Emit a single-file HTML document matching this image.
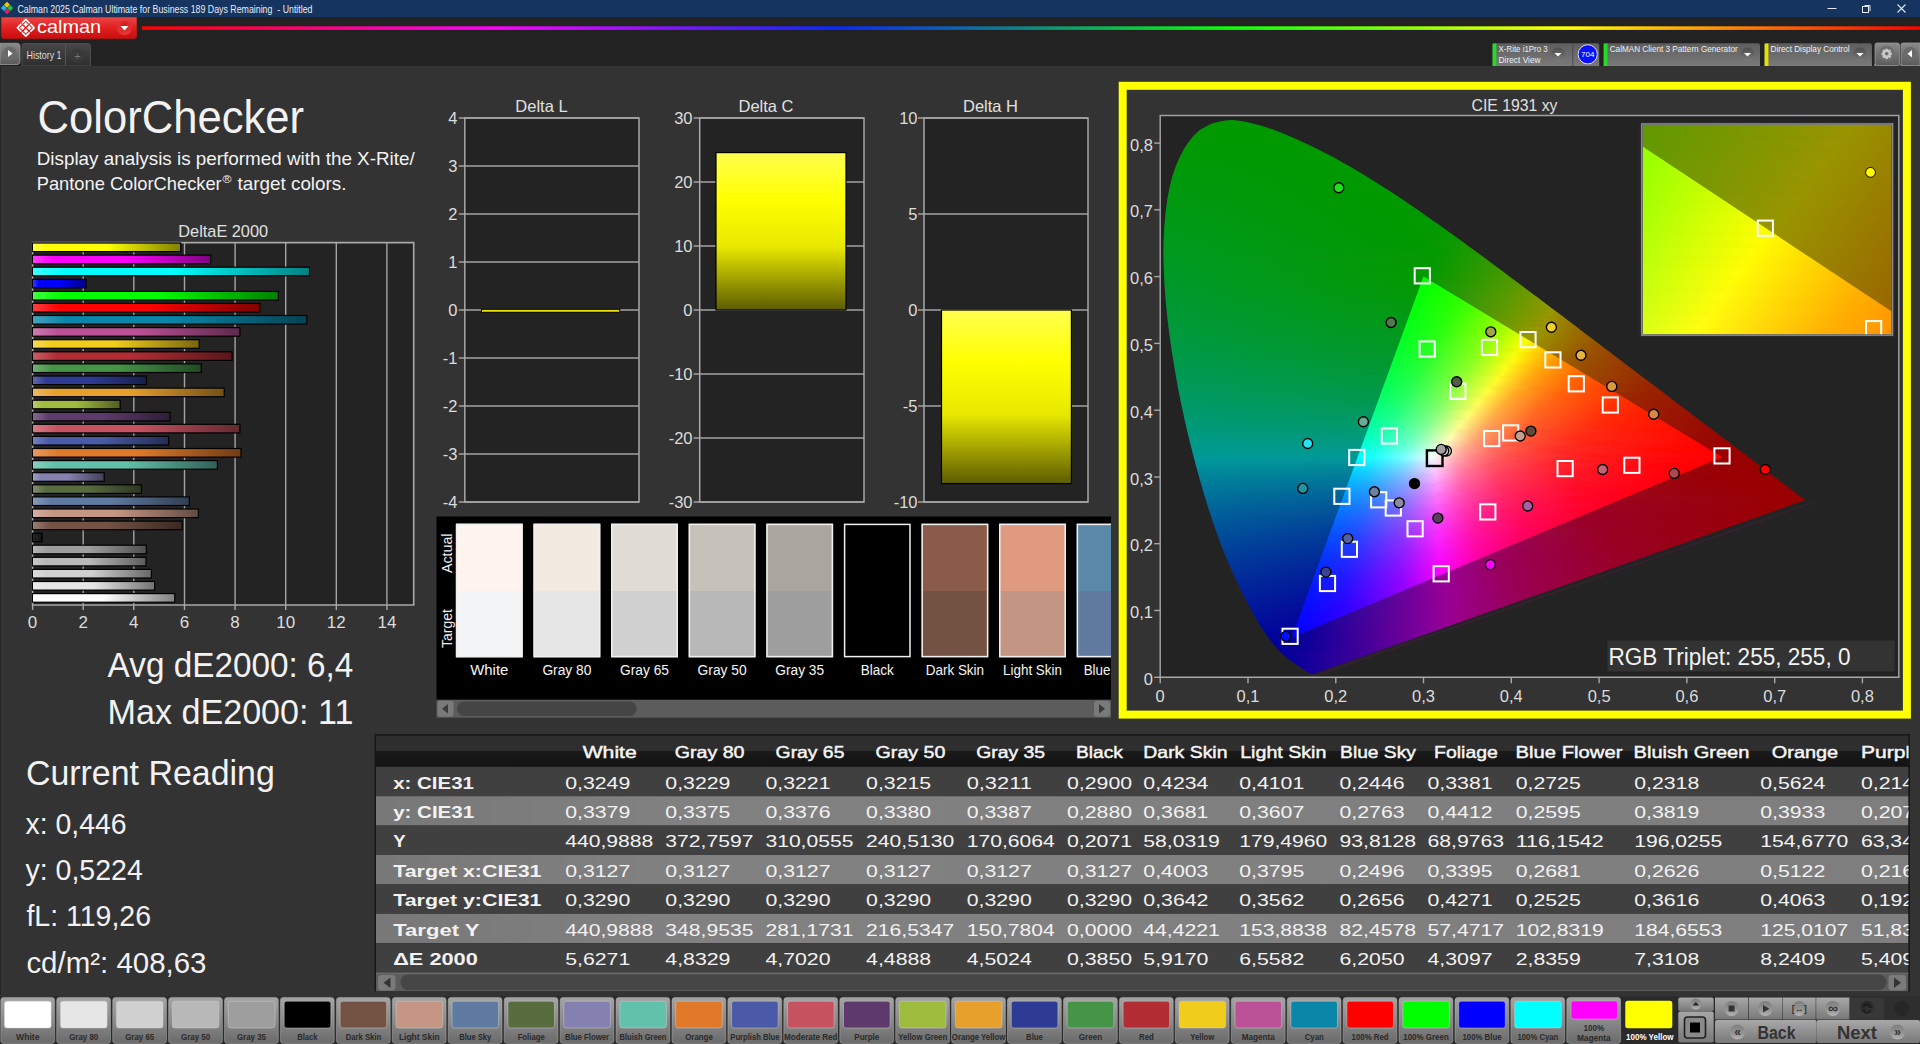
<!DOCTYPE html>
<html><head><meta charset="utf-8"><title>Calman ColorChecker</title>
<style>html,body{margin:0;padding:0;background:#333;width:1920px;height:1044px;overflow:hidden}
svg{display:block;font-family:"Liberation Sans", sans-serif}</style></head>
<body><svg width="1920" height="1044" viewBox="0 0 1920 1044">
<rect x="0.0" y="0.0" width="1920.0" height="17.0" fill="#15345f" />
<polygon points="7,1.7999999999999998 10,4.8 7,7.8 4,4.8" fill="#f5c400"/>
<polygon points="10.2,5 13.2,8 10.2,11 7.199999999999999,8" fill="#22c33a"/>
<polygon points="7,8.2 10,11.2 7,14.2 4,11.2" fill="#e0245e"/>
<polygon points="3.8,5 6.8,8 3.8,11 0.7999999999999998,8" fill="#1fb6e8"/>
<text x="17.5" y="12.6" font-size="11" fill="#e8ecf2" textLength="295.0" lengthAdjust="spacingAndGlyphs">Calman 2025 Calman Ultimate for Business 189 Days Remaining  - Untitled</text>
<line x1="1827.5" y1="8.5" x2="1836.5" y2="8.5" stroke="#dfe6ef" stroke-width="1" />
<rect x="1862.5" y="6.5" width="6.0" height="6.0" fill="none" stroke="#dfe6ef" stroke-width="1"/>
<path d="M1864.5,5.5 h5.5 v5.5" fill="none" stroke="#dfe6ef" stroke-width="1"/>
<path d="M1897.5,4.5 l8,8 M1905.5,4.5 l-8,8" stroke="#dfe6ef" stroke-width="1.1"/>
<rect x="0.0" y="17.0" width="1920.0" height="49.0" fill="#222222" />
<defs><linearGradient id="redbtn" x1="0" y1="0" x2="0" y2="1"><stop offset="0" stop-color="#e94848"/><stop offset="0.45" stop-color="#e32222"/><stop offset="1" stop-color="#c80c0c"/></linearGradient><radialGradient id="reddd" cx="0.5" cy="0.35" r="0.6"><stop offset="0" stop-color="#d01818"/><stop offset="1" stop-color="#e53a3a"/></radialGradient></defs>
<path d="M1,17 H137 V36 Q137,39 134,39 H4 Q1,39 1,36 Z" fill="url(#redbtn)" stroke="#4a2a2a" stroke-width="0.6"/>
<polyline points="22.44,22.76 25.80,19.40 29.16,22.76" fill="none" stroke="#fff" stroke-width="1.7" stroke-linejoin="round" stroke-linecap="round"/>
<polyline points="30.84,24.44 34.20,27.80 30.84,31.16" fill="none" stroke="#fff" stroke-width="1.7" stroke-linejoin="round" stroke-linecap="round"/>
<polyline points="29.16,32.84 25.80,36.20 22.44,32.84" fill="none" stroke="#fff" stroke-width="1.7" stroke-linejoin="round" stroke-linecap="round"/>
<polyline points="20.76,31.16 17.40,27.80 20.76,24.44" fill="none" stroke="#fff" stroke-width="1.7" stroke-linejoin="round" stroke-linecap="round"/>
<polygon points="25.80,22.35 27.85,24.40 25.80,26.45 23.75,24.40" fill="#fff" stroke="#fff" stroke-width="0.6" stroke-linejoin="round"/>
<polygon points="29.20,25.75 31.25,27.80 29.20,29.85 27.15,27.80" fill="#fff" stroke="#fff" stroke-width="0.6" stroke-linejoin="round"/>
<polygon points="25.80,29.15 27.85,31.20 25.80,33.25 23.75,31.20" fill="#fff" stroke="#fff" stroke-width="0.6" stroke-linejoin="round"/>
<polygon points="22.40,25.75 24.45,27.80 22.40,29.85 20.35,27.80" fill="#fff" stroke="#fff" stroke-width="0.6" stroke-linejoin="round"/>
<text x="37.0" y="32.5" font-size="18.5" fill="#ffffff" textLength="64.0" lengthAdjust="spacingAndGlyphs">calman</text>
<circle cx="124.5" cy="27.8" r="7.2" fill="url(#reddd)"/>
<polygon points="120.5,26 128.5,26 124.5,30.5" fill="#fff"/>
<defs><linearGradient id="rainbow" gradientUnits="userSpaceOnUse" x1="142" y1="0" x2="1920" y2="0"><stop offset="0" stop-color="#ff0000"/><stop offset="0.2" stop-color="#ff00ff"/><stop offset="0.39" stop-color="#0a28ff"/><stop offset="0.49" stop-color="#0f7f8a"/><stop offset="0.61" stop-color="#08ff08"/><stop offset="0.8" stop-color="#ffff00"/><stop offset="1" stop-color="#ff0000"/></linearGradient></defs>
<rect x="142.0" y="26.3" width="1778.0" height="3.6" fill="url(#rainbow)" />
<defs><linearGradient id="gbtn" x1="0" y1="0" x2="0" y2="1"><stop offset="0" stop-color="#8a8a8a"/><stop offset="1" stop-color="#5a5a5a"/></linearGradient><linearGradient id="tabg" x1="0" y1="0" x2="0" y2="1"><stop offset="0" stop-color="#474747"/><stop offset="1" stop-color="#2e2e2e"/></linearGradient><linearGradient id="ddc" x1="0" y1="0" x2="0" y2="1"><stop offset="0" stop-color="#4e4e4e"/><stop offset="1" stop-color="#7a7a7a"/></linearGradient><linearGradient id="wdg" x1="0" y1="0" x2="0" y2="1"><stop offset="0" stop-color="#5e5e5e"/><stop offset="1" stop-color="#7a7a7a"/></linearGradient></defs>
<path d="M0,43.3 H17 Q20,43.3 20,46.3 V61.5 Q20,64.5 17,64.5 H0 Z" fill="url(#gbtn)" stroke="#9a9a9a" stroke-width="0.8"/>
<circle cx="9.8" cy="53.5" r="7" fill="#6a6a6a"/>
<polygon points="8,50 12.5,53.5 8,57" fill="#fff"/>
<path d="M22,66 V46 Q22,43.5 24.5,43.5 H88 Q90.5,43.5 90.5,46 V66 Z" fill="url(#tabg)" stroke="#555" stroke-width="0.8"/>
<text x="26.5" y="59.3" font-size="10.5" fill="#dddddd" textLength="35.0" lengthAdjust="spacingAndGlyphs">History 1</text>
<line x1="65.5" y1="44.0" x2="65.5" y2="66.0" stroke="#555" stroke-width="1" />
<circle cx="77.5" cy="56" r="7" fill="#3a3a3a"/>
<text x="77.5" y="60.0" font-size="11" fill="#777" text-anchor="middle">+</text>
<path d="M1492.6,66 V45.5 Q1492.6,43.3 1494.6,43.3 H1597.2 Q1599.2,43.3 1599.2,45.5 V66 Z" fill="url(#wdg)"/>
<rect x="1492.6" y="43.5" width="3.8" height="22.5" fill="#22dd22" />
<text x="1498.6" y="52.0" font-size="9" fill="#f0f0f0" textLength="49.0" lengthAdjust="spacingAndGlyphs">X-Rite i1Pro 3</text>
<text x="1498.6" y="62.5" font-size="9" fill="#f0f0f0" textLength="42.0" lengthAdjust="spacingAndGlyphs">Direct View</text>
<circle cx="1558" cy="54.5" r="7" fill="url(#ddc)"/>
<polygon points="1554.5,53 1561.5,53 1558,56.5" fill="#fff"/>
<line x1="1572.8" y1="44.0" x2="1572.8" y2="66.0" stroke="#4a4a4a" stroke-width="1" />
<circle cx="1587.7" cy="54.3" r="9.6" fill="#0a10ff" stroke="#dde" stroke-width="1"/>
<text x="1587.7" y="57.3" font-size="8" fill="#ffffff" text-anchor="middle">704</text>
<path d="M1603.7,66 V45.5 Q1603.7,43.3 1605.7,43.3 H1758 Q1760,43.3 1760,45.5 V66 Z" fill="url(#wdg)"/>
<rect x="1603.7" y="43.5" width="3.8" height="22.5" fill="#22dd22" />
<text x="1609.7" y="52.0" font-size="9" fill="#f0f0f0" textLength="128.0" lengthAdjust="spacingAndGlyphs">CalMAN Client 3 Pattern Generator</text>
<circle cx="1747.5" cy="54.5" r="7" fill="url(#ddc)"/>
<polygon points="1744.0,53 1751.0,53 1747.5,56.5" fill="#fff"/>
<path d="M1764.6,66 V45.5 Q1764.6,43.3 1766.6,43.3 H1869.9 Q1871.9,43.3 1871.9,45.5 V66 Z" fill="url(#wdg)"/>
<rect x="1764.6" y="43.5" width="3.8" height="22.5" fill="#e8e000" />
<text x="1770.6" y="52.0" font-size="9" fill="#f0f0f0" textLength="79.0" lengthAdjust="spacingAndGlyphs">Direct Display Control</text>
<circle cx="1860" cy="54.5" r="7" fill="url(#ddc)"/>
<polygon points="1856.5,53 1863.5,53 1860,56.5" fill="#fff"/>
<path d="M1875,66 V45 Q1875,43 1877,43 H1897.5 Q1899.5,43 1899.5,45 V64.5 Q1899.5,65.5 1897.5,65.5 H1877 Q1875,65.5 1875,64 Z" fill="url(#gbtn)" stroke="#999" stroke-width="0.8"/>
<circle cx="1886.7" cy="53.8" r="8" fill="#6e6e6e"/><path d="M1891.87,52.64 L1891.87,54.96 L1890.03,55.41 L1890.19,55.02 L1891.18,56.64 L1889.54,58.28 L1887.92,57.29 L1888.31,57.13 L1887.86,58.97 L1885.54,58.97 L1885.09,57.13 L1885.48,57.29 L1883.86,58.28 L1882.22,56.64 L1883.21,55.02 L1883.37,55.41 L1881.53,54.96 L1881.53,52.64 L1883.37,52.19 L1883.21,52.58 L1882.22,50.96 L1883.86,49.32 L1885.48,50.31 L1885.09,50.47 L1885.54,48.63 L1887.86,48.63 L1888.31,50.47 L1887.92,50.31 L1889.54,49.32 L1891.18,50.96 L1890.19,52.58 L1890.03,52.19 Z" fill="#c8c8c8"/><circle cx="1886.7" cy="53.8" r="1.8" fill="#6e6e6e"/>
<path d="M1901,66 V45 Q1901,43 1903,43 H1920 V65.5 H1903 Q1901,65.5 1901,64 Z" fill="url(#gbtn)" stroke="#999" stroke-width="0.8"/>
<circle cx="1910" cy="53.8" r="7" fill="#6a6a6a"/><polygon points="1912,50 1907.5,53.8 1912,57.6" fill="#fff"/>
<rect x="0.0" y="66.0" width="1920.0" height="929.0" fill="#333333" />
<defs><linearGradient id="bg29" x1="0" y1="0" x2="1" y2="0"><stop offset="0" stop-color="#ffff40"/><stop offset="0.12" stop-color="#ffff00"/><stop offset="0.5" stop-color="#ffff00"/><stop offset="1" stop-color="#808000"/></linearGradient><linearGradient id="bg28" x1="0" y1="0" x2="1" y2="0"><stop offset="0" stop-color="#ff40ff"/><stop offset="0.12" stop-color="#ff00ff"/><stop offset="0.5" stop-color="#ff00ff"/><stop offset="1" stop-color="#800080"/></linearGradient><linearGradient id="bg27" x1="0" y1="0" x2="1" y2="0"><stop offset="0" stop-color="#40ffff"/><stop offset="0.12" stop-color="#00ffff"/><stop offset="0.5" stop-color="#00ffff"/><stop offset="1" stop-color="#008080"/></linearGradient><linearGradient id="bg26" x1="0" y1="0" x2="1" y2="0"><stop offset="0" stop-color="#4040ff"/><stop offset="0.12" stop-color="#0000ff"/><stop offset="0.5" stop-color="#0000ff"/><stop offset="1" stop-color="#000080"/></linearGradient><linearGradient id="bg25" x1="0" y1="0" x2="1" y2="0"><stop offset="0" stop-color="#40ff40"/><stop offset="0.12" stop-color="#00ff00"/><stop offset="0.5" stop-color="#00ff00"/><stop offset="1" stop-color="#008000"/></linearGradient><linearGradient id="bg24" x1="0" y1="0" x2="1" y2="0"><stop offset="0" stop-color="#ff4040"/><stop offset="0.12" stop-color="#ff0000"/><stop offset="0.5" stop-color="#ff0000"/><stop offset="1" stop-color="#800000"/></linearGradient><linearGradient id="bg23" x1="0" y1="0" x2="1" y2="0"><stop offset="0" stop-color="#47a4be"/><stop offset="0.12" stop-color="#0a86a8"/><stop offset="0.5" stop-color="#0a86a8"/><stop offset="1" stop-color="#054354"/></linearGradient><linearGradient id="bg22" x1="0" y1="0" x2="1" y2="0"><stop offset="0" stop-color="#cc7db1"/><stop offset="0.12" stop-color="#bb5297"/><stop offset="0.5" stop-color="#bb5297"/><stop offset="1" stop-color="#5e294c"/></linearGradient><linearGradient id="bg21" x1="0" y1="0" x2="1" y2="0"><stop offset="0" stop-color="#f4d955"/><stop offset="0.12" stop-color="#f0cc1c"/><stop offset="0.5" stop-color="#f0cc1c"/><stop offset="1" stop-color="#78660e"/></linearGradient><linearGradient id="bg20" x1="0" y1="0" x2="1" y2="0"><stop offset="0" stop-color="#c56267"/><stop offset="0.12" stop-color="#b22d34"/><stop offset="0.5" stop-color="#b22d34"/><stop offset="1" stop-color="#59161a"/></linearGradient><linearGradient id="bg19" x1="0" y1="0" x2="1" y2="0"><stop offset="0" stop-color="#74af75"/><stop offset="0.12" stop-color="#459447"/><stop offset="0.5" stop-color="#459447"/><stop offset="1" stop-color="#224a24"/></linearGradient><linearGradient id="bg18" x1="0" y1="0" x2="1" y2="0"><stop offset="0" stop-color="#626caf"/><stop offset="0.12" stop-color="#2e3b94"/><stop offset="0.5" stop-color="#2e3b94"/><stop offset="1" stop-color="#171e4a"/></linearGradient><linearGradient id="bg17" x1="0" y1="0" x2="1" y2="0"><stop offset="0" stop-color="#eeb861"/><stop offset="0.12" stop-color="#e8a02c"/><stop offset="0.5" stop-color="#e8a02c"/><stop offset="1" stop-color="#745016"/></linearGradient><linearGradient id="bg16" x1="0" y1="0" x2="1" y2="0"><stop offset="0" stop-color="#b7cd6e"/><stop offset="0.12" stop-color="#9fbc3e"/><stop offset="0.5" stop-color="#9fbc3e"/><stop offset="1" stop-color="#505e1f"/></linearGradient><linearGradient id="bg15" x1="0" y1="0" x2="1" y2="0"><stop offset="0" stop-color="#866b91"/><stop offset="0.12" stop-color="#5e3a6c"/><stop offset="0.5" stop-color="#5e3a6c"/><stop offset="1" stop-color="#2f1d36"/></linearGradient><linearGradient id="bg14" x1="0" y1="0" x2="1" y2="0"><stop offset="0" stop-color="#d57d88"/><stop offset="0.12" stop-color="#c75260"/><stop offset="0.5" stop-color="#c75260"/><stop offset="1" stop-color="#642930"/></linearGradient><linearGradient id="bg13" x1="0" y1="0" x2="1" y2="0"><stop offset="0" stop-color="#7783be"/><stop offset="0.12" stop-color="#4a5aa8"/><stop offset="0.5" stop-color="#4a5aa8"/><stop offset="1" stop-color="#252d54"/></linearGradient><linearGradient id="bg12" x1="0" y1="0" x2="1" y2="0"><stop offset="0" stop-color="#e89b5f"/><stop offset="0.12" stop-color="#e07a2a"/><stop offset="0.5" stop-color="#e07a2a"/><stop offset="1" stop-color="#703d15"/></linearGradient><linearGradient id="bg11" x1="0" y1="0" x2="1" y2="0"><stop offset="0" stop-color="#89d0bf"/><stop offset="0.12" stop-color="#62c1aa"/><stop offset="0.5" stop-color="#62c1aa"/><stop offset="1" stop-color="#316055"/></linearGradient><linearGradient id="bg10" x1="0" y1="0" x2="1" y2="0"><stop offset="0" stop-color="#a3a0c4"/><stop offset="0.12" stop-color="#8480b0"/><stop offset="0.5" stop-color="#8480b0"/><stop offset="1" stop-color="#424058"/></linearGradient><linearGradient id="bg9" x1="0" y1="0" x2="1" y2="0"><stop offset="0" stop-color="#829170"/><stop offset="0.12" stop-color="#596c40"/><stop offset="0.5" stop-color="#596c40"/><stop offset="1" stop-color="#2c3620"/></linearGradient><linearGradient id="bg8" x1="0" y1="0" x2="1" y2="0"><stop offset="0" stop-color="#879cb8"/><stop offset="0.12" stop-color="#5f7ba1"/><stop offset="0.5" stop-color="#5f7ba1"/><stop offset="1" stop-color="#303e50"/></linearGradient><linearGradient id="bg7" x1="0" y1="0" x2="1" y2="0"><stop offset="0" stop-color="#d4b0a3"/><stop offset="0.12" stop-color="#c59684"/><stop offset="0.5" stop-color="#c59684"/><stop offset="1" stop-color="#624b42"/></linearGradient><linearGradient id="bg6" x1="0" y1="0" x2="1" y2="0"><stop offset="0" stop-color="#977d73"/><stop offset="0.12" stop-color="#745244"/><stop offset="0.5" stop-color="#745244"/><stop offset="1" stop-color="#3a2922"/></linearGradient><linearGradient id="bg5" x1="0" y1="0" x2="1" y2="0"><stop offset="0" stop-color="#585858"/><stop offset="0.12" stop-color="#202020"/><stop offset="0.5" stop-color="#202020"/><stop offset="1" stop-color="#101010"/></linearGradient><linearGradient id="bg4" x1="0" y1="0" x2="1" y2="0"><stop offset="0" stop-color="#b6b6b6"/><stop offset="0.12" stop-color="#9e9e9e"/><stop offset="0.5" stop-color="#9e9e9e"/><stop offset="1" stop-color="#4f4f4f"/></linearGradient><linearGradient id="bg3" x1="0" y1="0" x2="1" y2="0"><stop offset="0" stop-color="#cacaca"/><stop offset="0.12" stop-color="#b8b8b8"/><stop offset="0.5" stop-color="#b8b8b8"/><stop offset="1" stop-color="#5c5c5c"/></linearGradient><linearGradient id="bg2" x1="0" y1="0" x2="1" y2="0"><stop offset="0" stop-color="#dcdcdc"/><stop offset="0.12" stop-color="#d0d0d0"/><stop offset="0.5" stop-color="#d0d0d0"/><stop offset="1" stop-color="#686868"/></linearGradient><linearGradient id="bg1" x1="0" y1="0" x2="1" y2="0"><stop offset="0" stop-color="#ececec"/><stop offset="0.12" stop-color="#e6e6e6"/><stop offset="0.5" stop-color="#e6e6e6"/><stop offset="1" stop-color="#737373"/></linearGradient><linearGradient id="bg0" x1="0" y1="0" x2="1" y2="0"><stop offset="0" stop-color="#ffffff"/><stop offset="0.12" stop-color="#ffffff"/><stop offset="0.5" stop-color="#ffffff"/><stop offset="1" stop-color="#808080"/></linearGradient></defs>
<rect x="0.0" y="66.0" width="1.0" height="929.0" fill="#262626" />
<text x="37.5" y="132.5" font-size="46" fill="#f2f2f2" textLength="266.5" lengthAdjust="spacingAndGlyphs">ColorChecker</text>
<text x="36.7" y="165.2" font-size="18.2" fill="#f2f2f2" textLength="378.0" lengthAdjust="spacingAndGlyphs">Display analysis is performed with the X-Rite/</text>
<text x="36.7" y="190.2" font-size="18.2" fill="#f2f2f2" textLength="185.0" lengthAdjust="spacingAndGlyphs">Pantone ColorChecker</text>
<text x="222.5" y="182.5" font-size="11" fill="#f2f2f2" textLength="9.0" lengthAdjust="spacingAndGlyphs">®</text>
<text x="237.5" y="190.2" font-size="18.2" fill="#f2f2f2" textLength="109.0" lengthAdjust="spacingAndGlyphs">target colors.</text>
<text x="178.3" y="237.0" font-size="17.4" fill="#e0e0e0" textLength="89.8" lengthAdjust="spacingAndGlyphs">DeltaE 2000</text>
<rect x="32.6" y="242.6" width="381.1" height="362.4" fill="#232323" />
<line x1="83.2" y1="242.6" x2="83.2" y2="605.0" stroke="#a3a3a3" stroke-width="1.4" />
<line x1="133.8" y1="242.6" x2="133.8" y2="605.0" stroke="#a3a3a3" stroke-width="1.4" />
<line x1="184.5" y1="242.6" x2="184.5" y2="605.0" stroke="#a3a3a3" stroke-width="1.4" />
<line x1="235.1" y1="242.6" x2="235.1" y2="605.0" stroke="#a3a3a3" stroke-width="1.4" />
<line x1="285.7" y1="242.6" x2="285.7" y2="605.0" stroke="#a3a3a3" stroke-width="1.4" />
<line x1="336.3" y1="242.6" x2="336.3" y2="605.0" stroke="#a3a3a3" stroke-width="1.4" />
<line x1="386.9" y1="242.6" x2="386.9" y2="605.0" stroke="#a3a3a3" stroke-width="1.4" />
<path d="M32.6,605.0 V242.6 H413.7 V605.0" fill="none" stroke="#a8a8a8" stroke-width="1.6"/>
<line x1="31.8" y1="605.0" x2="414.5" y2="605.0" stroke="#a8a8a8" stroke-width="1.6" />
<line x1="32.6" y1="605.0" x2="32.6" y2="610.0" stroke="#a8a8a8" stroke-width="1.4" />
<text x="32.6" y="628.4" font-size="17" fill="#dcdcdc" text-anchor="middle">0</text>
<line x1="83.2" y1="605.0" x2="83.2" y2="610.0" stroke="#a8a8a8" stroke-width="1.4" />
<text x="83.2" y="628.4" font-size="17" fill="#dcdcdc" text-anchor="middle">2</text>
<line x1="133.8" y1="605.0" x2="133.8" y2="610.0" stroke="#a8a8a8" stroke-width="1.4" />
<text x="133.8" y="628.4" font-size="17" fill="#dcdcdc" text-anchor="middle">4</text>
<line x1="184.5" y1="605.0" x2="184.5" y2="610.0" stroke="#a8a8a8" stroke-width="1.4" />
<text x="184.5" y="628.4" font-size="17" fill="#dcdcdc" text-anchor="middle">6</text>
<line x1="235.1" y1="605.0" x2="235.1" y2="610.0" stroke="#a8a8a8" stroke-width="1.4" />
<text x="235.1" y="628.4" font-size="17" fill="#dcdcdc" text-anchor="middle">8</text>
<line x1="285.7" y1="605.0" x2="285.7" y2="610.0" stroke="#a8a8a8" stroke-width="1.4" />
<text x="285.7" y="628.4" font-size="17" fill="#dcdcdc" text-anchor="middle">10</text>
<line x1="336.3" y1="605.0" x2="336.3" y2="610.0" stroke="#a8a8a8" stroke-width="1.4" />
<text x="336.3" y="628.4" font-size="17" fill="#dcdcdc" text-anchor="middle">12</text>
<line x1="386.9" y1="605.0" x2="386.9" y2="610.0" stroke="#a8a8a8" stroke-width="1.4" />
<text x="386.9" y="628.4" font-size="17" fill="#dcdcdc" text-anchor="middle">14</text>
<rect x="32.4" y="243.0" width="148.3" height="8.6" fill="url(#bg29)" stroke="#000" stroke-width="1.2"/>
<rect x="32.4" y="255.1" width="178.2" height="8.6" fill="url(#bg28)" stroke="#000" stroke-width="1.2"/>
<rect x="32.4" y="267.2" width="277.1" height="8.6" fill="url(#bg27)" stroke="#000" stroke-width="1.2"/>
<rect x="32.4" y="279.3" width="53.7" height="8.6" fill="url(#bg26)" stroke="#000" stroke-width="1.2"/>
<rect x="32.4" y="291.4" width="246.0" height="8.6" fill="url(#bg25)" stroke="#000" stroke-width="1.2"/>
<rect x="32.4" y="303.4" width="227.5" height="8.6" fill="url(#bg24)" stroke="#000" stroke-width="1.2"/>
<rect x="32.4" y="315.5" width="274.4" height="8.6" fill="url(#bg23)" stroke="#000" stroke-width="1.2"/>
<rect x="32.4" y="327.6" width="207.5" height="8.6" fill="url(#bg22)" stroke="#000" stroke-width="1.2"/>
<rect x="32.4" y="339.7" width="166.8" height="8.6" fill="url(#bg21)" stroke="#000" stroke-width="1.2"/>
<rect x="32.4" y="351.8" width="199.7" height="8.6" fill="url(#bg20)" stroke="#000" stroke-width="1.2"/>
<rect x="32.4" y="363.9" width="168.8" height="8.6" fill="url(#bg19)" stroke="#000" stroke-width="1.2"/>
<rect x="32.4" y="376.0" width="114.1" height="8.6" fill="url(#bg18)" stroke="#000" stroke-width="1.2"/>
<rect x="32.4" y="388.1" width="191.8" height="8.6" fill="url(#bg17)" stroke="#000" stroke-width="1.2"/>
<rect x="32.4" y="400.2" width="87.8" height="8.6" fill="url(#bg16)" stroke="#000" stroke-width="1.2"/>
<rect x="32.4" y="412.3" width="137.7" height="8.6" fill="url(#bg15)" stroke="#000" stroke-width="1.2"/>
<rect x="32.4" y="424.3" width="207.5" height="8.6" fill="url(#bg14)" stroke="#000" stroke-width="1.2"/>
<rect x="32.4" y="436.4" width="136.2" height="8.6" fill="url(#bg13)" stroke="#000" stroke-width="1.2"/>
<rect x="32.4" y="448.5" width="208.6" height="8.6" fill="url(#bg12)" stroke="#000" stroke-width="1.2"/>
<rect x="32.4" y="460.6" width="185.0" height="8.6" fill="url(#bg11)" stroke="#000" stroke-width="1.2"/>
<rect x="32.4" y="472.7" width="71.8" height="8.6" fill="url(#bg10)" stroke="#000" stroke-width="1.2"/>
<rect x="32.4" y="484.8" width="109.1" height="8.6" fill="url(#bg9)" stroke="#000" stroke-width="1.2"/>
<rect x="32.4" y="496.9" width="157.0" height="8.6" fill="url(#bg8)" stroke="#000" stroke-width="1.2"/>
<rect x="32.4" y="509.0" width="166.0" height="8.6" fill="url(#bg7)" stroke="#000" stroke-width="1.2"/>
<rect x="32.4" y="521.1" width="149.8" height="8.6" fill="url(#bg6)" stroke="#000" stroke-width="1.2"/>
<rect x="32.4" y="533.2" width="9.7" height="8.6" fill="url(#bg5)" stroke="#000" stroke-width="1.2"/>
<rect x="32.4" y="545.2" width="114.0" height="8.6" fill="url(#bg4)" stroke="#000" stroke-width="1.2"/>
<rect x="32.4" y="557.3" width="113.6" height="8.6" fill="url(#bg3)" stroke="#000" stroke-width="1.2"/>
<rect x="32.4" y="569.4" width="119.0" height="8.6" fill="url(#bg2)" stroke="#000" stroke-width="1.2"/>
<rect x="32.4" y="581.5" width="122.3" height="8.6" fill="url(#bg1)" stroke="#000" stroke-width="1.2"/>
<rect x="32.4" y="593.6" width="142.4" height="8.6" fill="url(#bg0)" stroke="#000" stroke-width="1.2"/>
<text x="107.6" y="676.8" font-size="34.5" fill="#f2f2f2" textLength="245.8" lengthAdjust="spacingAndGlyphs">Avg dE2000: 6,4</text>
<text x="107.6" y="723.5" font-size="34.5" fill="#f2f2f2" textLength="245.8" lengthAdjust="spacingAndGlyphs">Max dE2000: 11</text>
<text x="25.9" y="785.3" font-size="35" fill="#f2f2f2" textLength="248.9" lengthAdjust="spacingAndGlyphs">Current Reading</text>
<text x="25.5" y="834.2" font-size="29" fill="#f2f2f2" textLength="101.0" lengthAdjust="spacingAndGlyphs">x: 0,446</text>
<text x="25.5" y="880.0" font-size="29" fill="#f2f2f2" textLength="117.3" lengthAdjust="spacingAndGlyphs">y: 0,5224</text>
<text x="26.4" y="926.1" font-size="29" fill="#f2f2f2" textLength="124.6" lengthAdjust="spacingAndGlyphs">fL: 119,26</text>
<text x="26.4" y="972.5" font-size="29" fill="#f2f2f2" textLength="180.1" lengthAdjust="spacingAndGlyphs">cd/m²: 408,63</text>
<defs><linearGradient id="ybar" x1="0" y1="0" x2="0" y2="1"><stop offset="0" stop-color="#ffff50"/><stop offset="0.3" stop-color="#ffff00"/><stop offset="0.6" stop-color="#e8e800"/><stop offset="1" stop-color="#5c5c00"/></linearGradient></defs>
<rect x="464.8" y="118.0" width="174.2" height="384.0" fill="#232323" />
<line x1="458.8" y1="118.0" x2="639.0" y2="118.0" stroke="#a3a3a3" stroke-width="1.4" />
<text x="457.5" y="123.8" font-size="16.5" fill="#dcdcdc" text-anchor="end">4</text>
<line x1="458.8" y1="166.0" x2="639.0" y2="166.0" stroke="#a3a3a3" stroke-width="1.4" />
<text x="457.5" y="171.8" font-size="16.5" fill="#dcdcdc" text-anchor="end">3</text>
<line x1="458.8" y1="214.0" x2="639.0" y2="214.0" stroke="#a3a3a3" stroke-width="1.4" />
<text x="457.5" y="219.8" font-size="16.5" fill="#dcdcdc" text-anchor="end">2</text>
<line x1="458.8" y1="262.0" x2="639.0" y2="262.0" stroke="#a3a3a3" stroke-width="1.4" />
<text x="457.5" y="267.8" font-size="16.5" fill="#dcdcdc" text-anchor="end">1</text>
<line x1="458.8" y1="310.0" x2="639.0" y2="310.0" stroke="#a3a3a3" stroke-width="1.4" />
<text x="457.5" y="315.8" font-size="16.5" fill="#dcdcdc" text-anchor="end">0</text>
<line x1="458.8" y1="358.0" x2="639.0" y2="358.0" stroke="#a3a3a3" stroke-width="1.4" />
<text x="457.5" y="363.8" font-size="16.5" fill="#dcdcdc" text-anchor="end">-1</text>
<line x1="458.8" y1="406.0" x2="639.0" y2="406.0" stroke="#a3a3a3" stroke-width="1.4" />
<text x="457.5" y="411.8" font-size="16.5" fill="#dcdcdc" text-anchor="end">-2</text>
<line x1="458.8" y1="454.0" x2="639.0" y2="454.0" stroke="#a3a3a3" stroke-width="1.4" />
<text x="457.5" y="459.8" font-size="16.5" fill="#dcdcdc" text-anchor="end">-3</text>
<line x1="458.8" y1="502.0" x2="639.0" y2="502.0" stroke="#a3a3a3" stroke-width="1.4" />
<text x="457.5" y="507.8" font-size="16.5" fill="#dcdcdc" text-anchor="end">-4</text>
<rect x="464.8" y="118.0" width="174.2" height="384.0" fill="none" stroke="#a8a8a8" stroke-width="1.5"/>
<text x="541.5" y="111.9" font-size="16.5" fill="#e0e0e0" text-anchor="middle">Delta L</text>
<rect x="481.5" y="309.3" width="138.3" height="3.0" fill="#e8e000" stroke="#000" stroke-width="1"/>
<rect x="699.7" y="118.0" width="164.3" height="384.0" fill="#232323" />
<line x1="693.7" y1="118.0" x2="864.0" y2="118.0" stroke="#a3a3a3" stroke-width="1.4" />
<text x="692.5" y="123.8" font-size="16.5" fill="#dcdcdc" text-anchor="end">30</text>
<line x1="693.7" y1="182.0" x2="864.0" y2="182.0" stroke="#a3a3a3" stroke-width="1.4" />
<text x="692.5" y="187.8" font-size="16.5" fill="#dcdcdc" text-anchor="end">20</text>
<line x1="693.7" y1="246.0" x2="864.0" y2="246.0" stroke="#a3a3a3" stroke-width="1.4" />
<text x="692.5" y="251.8" font-size="16.5" fill="#dcdcdc" text-anchor="end">10</text>
<line x1="693.7" y1="310.0" x2="864.0" y2="310.0" stroke="#a3a3a3" stroke-width="1.4" />
<text x="692.5" y="315.8" font-size="16.5" fill="#dcdcdc" text-anchor="end">0</text>
<line x1="693.7" y1="374.0" x2="864.0" y2="374.0" stroke="#a3a3a3" stroke-width="1.4" />
<text x="692.5" y="379.8" font-size="16.5" fill="#dcdcdc" text-anchor="end">-10</text>
<line x1="693.7" y1="438.0" x2="864.0" y2="438.0" stroke="#a3a3a3" stroke-width="1.4" />
<text x="692.5" y="443.8" font-size="16.5" fill="#dcdcdc" text-anchor="end">-20</text>
<line x1="693.7" y1="502.0" x2="864.0" y2="502.0" stroke="#a3a3a3" stroke-width="1.4" />
<text x="692.5" y="507.8" font-size="16.5" fill="#dcdcdc" text-anchor="end">-30</text>
<rect x="699.7" y="118.0" width="164.3" height="384.0" fill="none" stroke="#a8a8a8" stroke-width="1.5"/>
<text x="766.0" y="111.9" font-size="16.5" fill="#e0e0e0" text-anchor="middle">Delta C</text>
<rect x="716.0" y="152.6" width="130.0" height="157.4" fill="url(#ybar)" stroke="#000" stroke-width="1.2"/>
<rect x="924.0" y="118.0" width="164.0" height="384.0" fill="#232323" />
<line x1="918.0" y1="118.0" x2="1088.0" y2="118.0" stroke="#a3a3a3" stroke-width="1.4" />
<text x="917.5" y="123.8" font-size="16.5" fill="#dcdcdc" text-anchor="end">10</text>
<line x1="918.0" y1="214.0" x2="1088.0" y2="214.0" stroke="#a3a3a3" stroke-width="1.4" />
<text x="917.5" y="219.8" font-size="16.5" fill="#dcdcdc" text-anchor="end">5</text>
<line x1="918.0" y1="310.0" x2="1088.0" y2="310.0" stroke="#a3a3a3" stroke-width="1.4" />
<text x="917.5" y="315.8" font-size="16.5" fill="#dcdcdc" text-anchor="end">0</text>
<line x1="918.0" y1="406.0" x2="1088.0" y2="406.0" stroke="#a3a3a3" stroke-width="1.4" />
<text x="917.5" y="411.8" font-size="16.5" fill="#dcdcdc" text-anchor="end">-5</text>
<line x1="918.0" y1="502.0" x2="1088.0" y2="502.0" stroke="#a3a3a3" stroke-width="1.4" />
<text x="917.5" y="507.8" font-size="16.5" fill="#dcdcdc" text-anchor="end">-10</text>
<rect x="924.0" y="118.0" width="164.0" height="384.0" fill="none" stroke="#a8a8a8" stroke-width="1.5"/>
<text x="990.5" y="111.9" font-size="16.5" fill="#e0e0e0" text-anchor="middle">Delta H</text>
<rect x="941.5" y="310.0" width="129.9" height="173.6" fill="url(#ybar)" stroke="#000" stroke-width="1.2"/>
<rect x="436.5" y="516.5" width="674.5" height="183.5" fill="#000000" />
<defs><clipPath id="swclip"><rect x="436.5" y="516.5" width="674.5" height="183.5"/></clipPath></defs>
<g clip-path="url(#swclip)">
<rect x="455.9" y="523.7" width="66.8" height="67.8" fill="#fff5ee" />
<rect x="455.9" y="591.0" width="66.8" height="66.3" fill="#f3f4f5" />
<rect x="456.6" y="524.4" width="65.4" height="132.2" fill="none" stroke="#f0f0f0" stroke-width="1.5"/>
<text x="489.3" y="674.6" font-size="15.5" fill="#f5f5f5" text-anchor="middle" textLength="38.2" lengthAdjust="spacingAndGlyphs">White</text>
<rect x="533.5" y="523.7" width="66.8" height="67.8" fill="#f3ebe1" />
<rect x="533.5" y="591.0" width="66.8" height="66.3" fill="#e6e6e6" />
<rect x="534.2" y="524.4" width="65.4" height="132.2" fill="none" stroke="#f0f0f0" stroke-width="1.5"/>
<text x="566.9" y="674.6" font-size="15.5" fill="#f5f5f5" text-anchor="middle" textLength="49.0" lengthAdjust="spacingAndGlyphs">Gray 80</text>
<rect x="611.1" y="523.7" width="66.8" height="67.8" fill="#e0dbd4" />
<rect x="611.1" y="591.0" width="66.8" height="66.3" fill="#d0d0d0" />
<rect x="611.8" y="524.4" width="65.4" height="132.2" fill="none" stroke="#f0f0f0" stroke-width="1.5"/>
<text x="644.5" y="674.6" font-size="15.5" fill="#f5f5f5" text-anchor="middle" textLength="49.0" lengthAdjust="spacingAndGlyphs">Gray 65</text>
<rect x="688.7" y="523.7" width="66.8" height="67.8" fill="#c6c1b9" />
<rect x="688.7" y="591.0" width="66.8" height="66.3" fill="#b8b8b8" />
<rect x="689.4" y="524.4" width="65.4" height="132.2" fill="none" stroke="#f0f0f0" stroke-width="1.5"/>
<text x="722.1" y="674.6" font-size="15.5" fill="#f5f5f5" text-anchor="middle" textLength="49.0" lengthAdjust="spacingAndGlyphs">Gray 50</text>
<rect x="766.3" y="523.7" width="66.8" height="67.8" fill="#aaa69d" />
<rect x="766.3" y="591.0" width="66.8" height="66.3" fill="#9e9e9e" />
<rect x="767.0" y="524.4" width="65.4" height="132.2" fill="none" stroke="#f0f0f0" stroke-width="1.5"/>
<text x="799.7" y="674.6" font-size="15.5" fill="#f5f5f5" text-anchor="middle" textLength="48.8" lengthAdjust="spacingAndGlyphs">Gray 35</text>
<rect x="843.9" y="523.7" width="66.8" height="67.8" fill="#000000" />
<rect x="843.9" y="591.0" width="66.8" height="66.3" fill="#000000" />
<rect x="844.6" y="524.4" width="65.4" height="132.2" fill="none" stroke="#f0f0f0" stroke-width="1.5"/>
<text x="877.3" y="674.6" font-size="15.5" fill="#f5f5f5" text-anchor="middle" textLength="33.1" lengthAdjust="spacingAndGlyphs">Black</text>
<rect x="921.5" y="523.7" width="66.8" height="67.8" fill="#8a5b48" />
<rect x="921.5" y="591.0" width="66.8" height="66.3" fill="#735244" />
<rect x="922.2" y="524.4" width="65.4" height="132.2" fill="none" stroke="#f0f0f0" stroke-width="1.5"/>
<text x="954.9" y="674.6" font-size="15.5" fill="#f5f5f5" text-anchor="middle" textLength="58.3" lengthAdjust="spacingAndGlyphs">Dark Skin</text>
<rect x="999.1" y="523.7" width="66.8" height="67.8" fill="#e09a80" />
<rect x="999.1" y="591.0" width="66.8" height="66.3" fill="#c29682" />
<rect x="999.8" y="524.4" width="65.4" height="132.2" fill="none" stroke="#f0f0f0" stroke-width="1.5"/>
<text x="1032.5" y="674.6" font-size="15.5" fill="#f5f5f5" text-anchor="middle" textLength="59.0" lengthAdjust="spacingAndGlyphs">Light Skin</text>
<rect x="1076.7" y="523.7" width="66.8" height="67.8" fill="#5a88a8" />
<rect x="1076.7" y="591.0" width="66.8" height="66.3" fill="#607aa0" />
<rect x="1077.4" y="524.4" width="65.4" height="132.2" fill="none" stroke="#f0f0f0" stroke-width="1.5"/>
<text x="1110.1" y="674.6" font-size="15.5" fill="#f5f5f5" text-anchor="middle" textLength="52.8" lengthAdjust="spacingAndGlyphs">Blue Sky</text>
</g>
<text transform="translate(452.3,573) rotate(-90)" font-size="14.5" fill="#f0f0f0" textLength="39.5" lengthAdjust="spacingAndGlyphs">Actual</text>
<text transform="translate(452.3,648) rotate(-90)" font-size="14.5" fill="#f0f0f0" textLength="39" lengthAdjust="spacingAndGlyphs">Target</text>
<rect x="436.5" y="699.7" width="674.5" height="18.0" fill="#5c5c5c" />
<rect x="437.5" y="700.7" width="16.0" height="16.0" fill="#7a7a7a" rx="3"/>
<polygon points="448,704 442,708.7 448,713.4" fill="#3a3a3a"/>
<rect x="457.0" y="701.5" width="179.6" height="14.5" fill="#454545" rx="7"/>
<rect x="1094.0" y="700.7" width="16.0" height="16.0" fill="#7a7a7a" rx="3"/>
<polygon points="1099,704 1105,708.7 1099,713.4" fill="#3a3a3a"/>
<rect x="1122.7" y="85.8" width="784.2" height="628.8" fill="#333333" stroke="#ffff00" stroke-width="8"/>
<text x="1514.5" y="110.8" font-size="16.7" fill="#e0e0e0" text-anchor="middle" textLength="86.0" lengthAdjust="spacingAndGlyphs">CIE 1931 xy</text>
<rect x="1160.2" y="115.5" width="738.6" height="561.8" fill="#232323" />
<defs><clipPath id="locclip"><path d="M1313.0,674.0 L1308.5,672.7 L1308.2,672.5 L1307.9,672.3 L1307.5,672.1 L1307.1,671.8 L1306.7,671.6 L1306.3,671.3 L1305.9,671.0 L1305.5,670.7 L1305.0,670.4 L1304.5,670.0 L1304.0,669.7 L1303.5,669.3 L1302.9,668.9 L1302.3,668.5 L1301.6,668.1 L1300.9,667.6 L1300.2,667.1 L1299.4,666.6 L1298.5,666.1 L1297.7,665.5 L1296.8,664.9 L1295.8,664.3 L1294.8,663.6 L1293.8,662.9 L1292.7,662.1 L1291.6,661.3 L1290.4,660.5 L1289.2,659.6 L1287.9,658.6 L1286.6,657.5 L1285.2,656.3 L1283.8,655.1 L1282.4,653.9 L1280.8,652.4 L1279.1,650.7 L1277.3,648.7 L1275.5,646.6 L1273.5,644.3 L1271.4,641.6 L1269.1,638.7 L1266.8,635.5 L1264.4,632.0 L1261.9,628.2 L1259.2,624.0 L1256.4,619.3 L1253.5,614.2 L1250.4,608.6 L1247.2,602.5 L1243.9,595.9 L1240.3,588.7 L1236.6,580.8 L1232.7,572.4 L1228.7,563.4 L1224.6,553.7 L1220.5,543.3 L1216.4,532.1 L1212.3,520.1 L1208.2,507.5 L1204.1,494.2 L1200.1,480.3 L1196.0,465.7 L1192.0,450.2 L1188.0,434.3 L1184.3,418.0 L1180.8,401.7 L1177.6,385.2 L1174.6,368.2 L1171.8,351.1 L1169.4,334.2 L1167.4,317.8 L1165.8,301.6 L1164.6,285.5 L1163.8,269.8 L1163.4,254.6 L1163.6,240.0 L1164.4,226.0 L1165.6,212.5 L1167.3,199.5 L1169.6,187.4 L1172.4,176.3 L1175.8,166.2 L1179.8,156.9 L1184.3,148.6 L1189.2,141.2 L1194.3,135.0 L1199.9,130.1 L1205.9,126.4 L1212.3,123.6 L1218.8,121.7 L1225.4,120.5 L1232.2,120.1 L1239.1,120.7 L1246.2,122.0 L1253.3,123.7 L1260.4,125.6 L1267.6,127.7 L1274.7,130.2 L1281.9,133.1 L1289.0,136.1 L1296.0,139.1 L1302.9,142.2 L1309.6,145.3 L1316.3,148.6 L1322.9,151.9 L1329.5,155.3 L1336.1,158.8 L1342.5,162.4 L1349.0,166.1 L1355.3,169.8 L1361.7,173.6 L1368.1,177.4 L1374.5,181.4 L1380.9,185.4 L1387.2,189.5 L1393.5,193.6 L1399.8,197.8 L1406.1,202.0 L1412.4,206.3 L1418.7,210.6 L1424.9,215.0 L1431.2,219.4 L1437.5,223.8 L1443.7,228.3 L1450.0,232.8 L1456.3,237.3 L1462.6,241.8 L1468.9,246.4 L1475.1,251.0 L1481.4,255.6 L1487.7,260.3 L1494.0,264.9 L1500.2,269.6 L1506.5,274.2 L1512.7,278.9 L1519.0,283.6 L1525.2,288.2 L1531.4,292.9 L1537.7,297.6 L1543.9,302.2 L1550.0,306.9 L1556.2,311.5 L1562.3,316.1 L1568.4,320.8 L1574.5,325.3 L1580.5,329.9 L1586.5,334.5 L1592.4,339.0 L1598.4,343.5 L1604.2,347.9 L1610.1,352.3 L1615.8,356.7 L1621.6,361.1 L1627.3,365.4 L1632.9,369.7 L1638.4,373.9 L1643.9,378.0 L1649.3,382.1 L1654.7,386.1 L1660.0,390.1 L1665.1,394.0 L1670.2,397.9 L1675.2,401.7 L1680.0,405.4 L1684.8,409.0 L1689.4,412.5 L1693.9,415.9 L1698.2,419.2 L1702.5,422.4 L1706.6,425.5 L1710.6,428.5 L1714.5,431.5 L1718.4,434.4 L1722.1,437.3 L1725.7,440.0 L1729.2,442.6 L1732.5,445.2 L1735.7,447.6 L1738.8,449.9 L1741.8,452.1 L1744.6,454.3 L1747.4,456.3 L1750.0,458.3 L1752.5,460.2 L1754.9,462.1 L1757.2,463.8 L1759.4,465.5 L1761.5,467.1 L1763.5,468.6 L1765.4,470.0 L1767.2,471.4 L1769.0,472.7 L1770.6,474.0 L1772.2,475.2 L1773.7,476.3 L1775.2,477.4 L1776.6,478.5 L1777.9,479.5 L1779.2,480.5 L1780.4,481.4 L1781.6,482.3 L1782.7,483.2 L1783.9,484.0 L1784.9,484.8 L1786.0,485.6 L1786.9,486.4 L1787.9,487.1 L1788.8,487.8 L1789.7,488.5 L1790.5,489.1 L1791.3,489.7 L1792.1,490.3 L1792.8,490.8 L1793.6,491.4 L1794.2,491.8 L1794.8,492.3 L1795.4,492.7 L1795.9,493.1 L1796.4,493.5 L1796.9,493.9 L1797.5,494.3 L1798.1,494.8 L1798.8,495.4 L1799.6,495.9 L1800.3,496.5 L1801.0,497.0 L1801.7,497.5 L1802.3,498.0 L1802.9,498.5 L1803.5,498.9 L1804.0,499.3 L1804.3,499.5 L1804.6,499.8 L1804.8,499.9 L1805.0,500.0 L1805.1,500.1 Z"/></clipPath><clipPath id="triclip"><path d="M1722.0,456.9 L1423.5,276.6 L1291.9,637.2 Z"/></clipPath><linearGradient id="l0" gradientUnits="userSpaceOnUse" x1="1214.8" y1="0" x2="1249.3" y2="0"><stop offset="0.000" stop-color="#009900"/><stop offset="1.000" stop-color="#009900"/></linearGradient><linearGradient id="l1" gradientUnits="userSpaceOnUse" x1="1208.4" y1="0" x2="1257.5" y2="0"><stop offset="0.000" stop-color="#009900"/><stop offset="1.000" stop-color="#009900"/></linearGradient><linearGradient id="l2" gradientUnits="userSpaceOnUse" x1="1203.8" y1="0" x2="1264.9" y2="0"><stop offset="0.000" stop-color="#009900"/><stop offset="1.000" stop-color="#009900"/></linearGradient><linearGradient id="l3" gradientUnits="userSpaceOnUse" x1="1200.3" y1="0" x2="1271.4" y2="0"><stop offset="0.000" stop-color="#009900"/><stop offset="1.000" stop-color="#009900"/></linearGradient><linearGradient id="l4" gradientUnits="userSpaceOnUse" x1="1197.1" y1="0" x2="1277.0" y2="0"><stop offset="0.000" stop-color="#009900"/><stop offset="1.000" stop-color="#009900"/></linearGradient><linearGradient id="l5" gradientUnits="userSpaceOnUse" x1="1194.8" y1="0" x2="1282.1" y2="0"><stop offset="0.000" stop-color="#009900"/><stop offset="1.000" stop-color="#009900"/></linearGradient><linearGradient id="l6" gradientUnits="userSpaceOnUse" x1="1192.5" y1="0" x2="1287.0" y2="0"><stop offset="0.000" stop-color="#009900"/><stop offset="1.000" stop-color="#009900"/></linearGradient><linearGradient id="l7" gradientUnits="userSpaceOnUse" x1="1190.5" y1="0" x2="1291.8" y2="0"><stop offset="0.000" stop-color="#009900"/><stop offset="1.000" stop-color="#009900"/></linearGradient><linearGradient id="l8" gradientUnits="userSpaceOnUse" x1="1188.9" y1="0" x2="1296.4" y2="0"><stop offset="0.000" stop-color="#009900"/><stop offset="1.000" stop-color="#009900"/></linearGradient><linearGradient id="l9" gradientUnits="userSpaceOnUse" x1="1187.2" y1="0" x2="1301.0" y2="0"><stop offset="0.000" stop-color="#009901"/><stop offset="1.000" stop-color="#009900"/></linearGradient><linearGradient id="l10" gradientUnits="userSpaceOnUse" x1="1185.7" y1="0" x2="1305.5" y2="0"><stop offset="0.000" stop-color="#009902"/><stop offset="1.000" stop-color="#009900"/></linearGradient><linearGradient id="l11" gradientUnits="userSpaceOnUse" x1="1184.3" y1="0" x2="1309.8" y2="0"><stop offset="0.000" stop-color="#009902"/><stop offset="1.000" stop-color="#009900"/></linearGradient><linearGradient id="l12" gradientUnits="userSpaceOnUse" x1="1183.0" y1="0" x2="1314.0" y2="0"><stop offset="0.000" stop-color="#009903"/><stop offset="1.000" stop-color="#009900"/></linearGradient><linearGradient id="l13" gradientUnits="userSpaceOnUse" x1="1181.6" y1="0" x2="1318.1" y2="0"><stop offset="0.000" stop-color="#009903"/><stop offset="1.000" stop-color="#009900"/></linearGradient><linearGradient id="l14" gradientUnits="userSpaceOnUse" x1="1180.5" y1="0" x2="1322.1" y2="0"><stop offset="0.000" stop-color="#009904"/><stop offset="1.000" stop-color="#009900"/></linearGradient><linearGradient id="l15" gradientUnits="userSpaceOnUse" x1="1179.4" y1="0" x2="1326.1" y2="0"><stop offset="0.000" stop-color="#009904"/><stop offset="1.000" stop-color="#009900"/></linearGradient><linearGradient id="l16" gradientUnits="userSpaceOnUse" x1="1178.4" y1="0" x2="1329.9" y2="0"><stop offset="0.000" stop-color="#009905"/><stop offset="1.000" stop-color="#009900"/></linearGradient><linearGradient id="l17" gradientUnits="userSpaceOnUse" x1="1177.3" y1="0" x2="1333.7" y2="0"><stop offset="0.000" stop-color="#009905"/><stop offset="1.000" stop-color="#009900"/></linearGradient><linearGradient id="l18" gradientUnits="userSpaceOnUse" x1="1176.3" y1="0" x2="1337.5" y2="0"><stop offset="0.000" stop-color="#009906"/><stop offset="1.000" stop-color="#009900"/></linearGradient><linearGradient id="l19" gradientUnits="userSpaceOnUse" x1="1175.5" y1="0" x2="1341.2" y2="0"><stop offset="0.000" stop-color="#009906"/><stop offset="1.000" stop-color="#009900"/></linearGradient><linearGradient id="l20" gradientUnits="userSpaceOnUse" x1="1174.6" y1="0" x2="1344.8" y2="0"><stop offset="0.000" stop-color="#009907"/><stop offset="1.000" stop-color="#009900"/></linearGradient><linearGradient id="l21" gradientUnits="userSpaceOnUse" x1="1173.7" y1="0" x2="1348.3" y2="0"><stop offset="0.000" stop-color="#009907"/><stop offset="1.000" stop-color="#009900"/></linearGradient><linearGradient id="l22" gradientUnits="userSpaceOnUse" x1="1172.9" y1="0" x2="1351.8" y2="0"><stop offset="0.000" stop-color="#009908"/><stop offset="1.000" stop-color="#009900"/></linearGradient><linearGradient id="l23" gradientUnits="userSpaceOnUse" x1="1172.2" y1="0" x2="1355.3" y2="0"><stop offset="0.000" stop-color="#009909"/><stop offset="1.000" stop-color="#009900"/></linearGradient><linearGradient id="l24" gradientUnits="userSpaceOnUse" x1="1171.5" y1="0" x2="1358.7" y2="0"><stop offset="0.000" stop-color="#009909"/><stop offset="1.000" stop-color="#009900"/></linearGradient><linearGradient id="l25" gradientUnits="userSpaceOnUse" x1="1170.9" y1="0" x2="1362.1" y2="0"><stop offset="0.000" stop-color="#00990a"/><stop offset="1.000" stop-color="#009900"/></linearGradient><linearGradient id="l26" gradientUnits="userSpaceOnUse" x1="1170.2" y1="0" x2="1365.4" y2="0"><stop offset="0.000" stop-color="#00990a"/><stop offset="1.000" stop-color="#009900"/></linearGradient><linearGradient id="l27" gradientUnits="userSpaceOnUse" x1="1169.5" y1="0" x2="1368.7" y2="0"><stop offset="0.000" stop-color="#00990b"/><stop offset="1.000" stop-color="#009900"/></linearGradient><linearGradient id="l28" gradientUnits="userSpaceOnUse" x1="1169.0" y1="0" x2="1372.0" y2="0"><stop offset="0.000" stop-color="#00990b"/><stop offset="1.000" stop-color="#009900"/></linearGradient><linearGradient id="l29" gradientUnits="userSpaceOnUse" x1="1168.5" y1="0" x2="1375.2" y2="0"><stop offset="0.000" stop-color="#00990c"/><stop offset="1.000" stop-color="#009900"/></linearGradient><linearGradient id="l30" gradientUnits="userSpaceOnUse" x1="1168.0" y1="0" x2="1378.5" y2="0"><stop offset="0.000" stop-color="#00990c"/><stop offset="1.000" stop-color="#009900"/></linearGradient><linearGradient id="l31" gradientUnits="userSpaceOnUse" x1="1167.5" y1="0" x2="1381.6" y2="0"><stop offset="0.000" stop-color="#00990d"/><stop offset="0.963" stop-color="#009900"/><stop offset="1.000" stop-color="#009900"/></linearGradient><linearGradient id="l32" gradientUnits="userSpaceOnUse" x1="1167.0" y1="0" x2="1384.8" y2="0"><stop offset="0.000" stop-color="#00990d"/><stop offset="0.964" stop-color="#009900"/><stop offset="1.000" stop-color="#009900"/></linearGradient><linearGradient id="l33" gradientUnits="userSpaceOnUse" x1="1166.5" y1="0" x2="1387.9" y2="0"><stop offset="0.000" stop-color="#00990e"/><stop offset="0.929" stop-color="#009900"/><stop offset="1.000" stop-color="#009900"/></linearGradient><linearGradient id="l34" gradientUnits="userSpaceOnUse" x1="1166.1" y1="0" x2="1391.0" y2="0"><stop offset="0.000" stop-color="#00990e"/><stop offset="0.931" stop-color="#009900"/><stop offset="1.000" stop-color="#009900"/></linearGradient><linearGradient id="l35" gradientUnits="userSpaceOnUse" x1="1165.7" y1="0" x2="1394.0" y2="0"><stop offset="0.000" stop-color="#00990f"/><stop offset="0.897" stop-color="#009900"/><stop offset="1.000" stop-color="#009900"/></linearGradient><linearGradient id="l36" gradientUnits="userSpaceOnUse" x1="1165.4" y1="0" x2="1397.1" y2="0"><stop offset="0.000" stop-color="#00990f"/><stop offset="0.862" stop-color="#009900"/><stop offset="1.000" stop-color="#009900"/></linearGradient><linearGradient id="l37" gradientUnits="userSpaceOnUse" x1="1165.0" y1="0" x2="1400.1" y2="0"><stop offset="0.000" stop-color="#009910"/><stop offset="0.867" stop-color="#009900"/><stop offset="1.000" stop-color="#009900"/></linearGradient><linearGradient id="l38" gradientUnits="userSpaceOnUse" x1="1164.6" y1="0" x2="1403.1" y2="0"><stop offset="0.000" stop-color="#009910"/><stop offset="0.867" stop-color="#009900"/><stop offset="1.000" stop-color="#009900"/></linearGradient><linearGradient id="l39" gradientUnits="userSpaceOnUse" x1="1164.3" y1="0" x2="1406.1" y2="0"><stop offset="0.000" stop-color="#009911"/><stop offset="0.871" stop-color="#009900"/><stop offset="1.000" stop-color="#009900"/></linearGradient><linearGradient id="l40" gradientUnits="userSpaceOnUse" x1="1164.0" y1="0" x2="1409.1" y2="0"><stop offset="0.000" stop-color="#009911"/><stop offset="0.839" stop-color="#009900"/><stop offset="1.000" stop-color="#009900"/></linearGradient><linearGradient id="l41" gradientUnits="userSpaceOnUse" x1="1163.7" y1="0" x2="1412.0" y2="0"><stop offset="0.000" stop-color="#009912"/><stop offset="0.844" stop-color="#009900"/><stop offset="1.000" stop-color="#009900"/></linearGradient><linearGradient id="l42" gradientUnits="userSpaceOnUse" x1="1163.5" y1="0" x2="1415.0" y2="0"><stop offset="0.000" stop-color="#009913"/><stop offset="0.844" stop-color="#009900"/><stop offset="1.000" stop-color="#009900"/></linearGradient><linearGradient id="l43" gradientUnits="userSpaceOnUse" x1="1163.2" y1="0" x2="1417.9" y2="0"><stop offset="0.000" stop-color="#009913"/><stop offset="0.844" stop-color="#009900"/><stop offset="1.000" stop-color="#009900"/></linearGradient><linearGradient id="l44" gradientUnits="userSpaceOnUse" x1="1162.9" y1="0" x2="1420.8" y2="0"><stop offset="0.000" stop-color="#009914"/><stop offset="0.848" stop-color="#009900"/><stop offset="1.000" stop-color="#009900"/></linearGradient><linearGradient id="l45" gradientUnits="userSpaceOnUse" x1="1162.7" y1="0" x2="1423.6" y2="0"><stop offset="0.000" stop-color="#009914"/><stop offset="0.848" stop-color="#009900"/><stop offset="1.000" stop-color="#009900"/></linearGradient><linearGradient id="l46" gradientUnits="userSpaceOnUse" x1="1162.5" y1="0" x2="1426.5" y2="0"><stop offset="0.000" stop-color="#009915"/><stop offset="0.853" stop-color="#009900"/><stop offset="1.000" stop-color="#009900"/></linearGradient><linearGradient id="l47" gradientUnits="userSpaceOnUse" x1="1162.3" y1="0" x2="1429.4" y2="0"><stop offset="0.000" stop-color="#009915"/><stop offset="0.853" stop-color="#009900"/><stop offset="1.000" stop-color="#009900"/></linearGradient><linearGradient id="l48" gradientUnits="userSpaceOnUse" x1="1162.1" y1="0" x2="1432.3" y2="0"><stop offset="0.000" stop-color="#009916"/><stop offset="0.853" stop-color="#009900"/><stop offset="1.000" stop-color="#009900"/></linearGradient><linearGradient id="l49" gradientUnits="userSpaceOnUse" x1="1161.9" y1="0" x2="1435.1" y2="0"><stop offset="0.000" stop-color="#009916"/><stop offset="0.857" stop-color="#009900"/><stop offset="1.000" stop-color="#009900"/></linearGradient><linearGradient id="l50" gradientUnits="userSpaceOnUse" x1="1161.7" y1="0" x2="1437.9" y2="0"><stop offset="0.000" stop-color="#009917"/><stop offset="0.857" stop-color="#009900"/><stop offset="1.000" stop-color="#009900"/></linearGradient><linearGradient id="l51" gradientUnits="userSpaceOnUse" x1="1161.5" y1="0" x2="1440.8" y2="0"><stop offset="0.000" stop-color="#009917"/><stop offset="0.857" stop-color="#009900"/><stop offset="1.000" stop-color="#009900"/></linearGradient><linearGradient id="l52" gradientUnits="userSpaceOnUse" x1="1161.4" y1="0" x2="1443.6" y2="0"><stop offset="0.000" stop-color="#009918"/><stop offset="0.861" stop-color="#009900"/><stop offset="1.000" stop-color="#019900"/></linearGradient><linearGradient id="l53" gradientUnits="userSpaceOnUse" x1="1161.3" y1="0" x2="1446.4" y2="0"><stop offset="0.000" stop-color="#009919"/><stop offset="0.861" stop-color="#009900"/><stop offset="1.000" stop-color="#039900"/></linearGradient><linearGradient id="l54" gradientUnits="userSpaceOnUse" x1="1161.2" y1="0" x2="1449.2" y2="0"><stop offset="0.000" stop-color="#009919"/><stop offset="0.833" stop-color="#009900"/><stop offset="1.000" stop-color="#069900"/></linearGradient><linearGradient id="l55" gradientUnits="userSpaceOnUse" x1="1161.0" y1="0" x2="1451.9" y2="0"><stop offset="0.000" stop-color="#00991a"/><stop offset="0.838" stop-color="#009900"/><stop offset="1.000" stop-color="#089900"/></linearGradient><linearGradient id="l56" gradientUnits="userSpaceOnUse" x1="1160.9" y1="0" x2="1454.7" y2="0"><stop offset="0.000" stop-color="#00991a"/><stop offset="0.838" stop-color="#009900"/><stop offset="0.973" stop-color="#059900"/><stop offset="1.000" stop-color="#0b9900"/></linearGradient><linearGradient id="l57" gradientUnits="userSpaceOnUse" x1="1160.8" y1="0" x2="1457.5" y2="0"><stop offset="0.000" stop-color="#00991b"/><stop offset="0.842" stop-color="#009900"/><stop offset="0.974" stop-color="#089900"/><stop offset="1.000" stop-color="#0d9900"/></linearGradient><linearGradient id="l58" gradientUnits="userSpaceOnUse" x1="1160.7" y1="0" x2="1460.3" y2="0"><stop offset="0.000" stop-color="#00991c"/><stop offset="0.842" stop-color="#009900"/><stop offset="0.974" stop-color="#0a9900"/><stop offset="1.000" stop-color="#109900"/></linearGradient><linearGradient id="l59" gradientUnits="userSpaceOnUse" x1="1160.6" y1="0" x2="1463.0" y2="0"><stop offset="0.000" stop-color="#00991c"/><stop offset="0.842" stop-color="#009900"/><stop offset="0.974" stop-color="#0d9900"/><stop offset="1.000" stop-color="#139900"/></linearGradient><linearGradient id="l60" gradientUnits="userSpaceOnUse" x1="1160.6" y1="0" x2="1465.8" y2="0"><stop offset="0.000" stop-color="#00991d"/><stop offset="0.846" stop-color="#009900"/><stop offset="0.974" stop-color="#109900"/><stop offset="1.000" stop-color="#159900"/></linearGradient><linearGradient id="l61" gradientUnits="userSpaceOnUse" x1="1160.6" y1="0" x2="1468.5" y2="0"><stop offset="0.000" stop-color="#00991d"/><stop offset="0.846" stop-color="#009900"/><stop offset="0.949" stop-color="#0c9900"/><stop offset="1.000" stop-color="#189900"/></linearGradient><linearGradient id="l62" gradientUnits="userSpaceOnUse" x1="1160.5" y1="0" x2="1471.3" y2="0"><stop offset="0.000" stop-color="#00991e"/><stop offset="0.846" stop-color="#009900"/><stop offset="1.000" stop-color="#1b9900"/></linearGradient><linearGradient id="l63" gradientUnits="userSpaceOnUse" x1="1160.5" y1="0" x2="1474.0" y2="0"><stop offset="0.000" stop-color="#00991f"/><stop offset="0.850" stop-color="#009900"/><stop offset="1.000" stop-color="#1e9900"/></linearGradient><linearGradient id="l64" gradientUnits="userSpaceOnUse" x1="1160.5" y1="0" x2="1476.8" y2="0"><stop offset="0.000" stop-color="#00991f"/><stop offset="0.850" stop-color="#009900"/><stop offset="1.000" stop-color="#219900"/></linearGradient><linearGradient id="l65" gradientUnits="userSpaceOnUse" x1="1160.5" y1="0" x2="1479.5" y2="0"><stop offset="0.000" stop-color="#009920"/><stop offset="0.875" stop-color="#059900"/><stop offset="1.000" stop-color="#249900"/></linearGradient><linearGradient id="l66" gradientUnits="userSpaceOnUse" x1="1160.4" y1="0" x2="1482.2" y2="0"><stop offset="0.000" stop-color="#009920"/><stop offset="0.854" stop-color="#029900"/><stop offset="1.000" stop-color="#279900"/></linearGradient><linearGradient id="l67" gradientUnits="userSpaceOnUse" x1="1160.4" y1="0" x2="1484.9" y2="0"><stop offset="0.000" stop-color="#009921"/><stop offset="0.854" stop-color="#049900"/><stop offset="1.000" stop-color="#2a9900"/></linearGradient><linearGradient id="l68" gradientUnits="userSpaceOnUse" x1="1160.5" y1="0" x2="1487.6" y2="0"><stop offset="0.000" stop-color="#009922"/><stop offset="0.854" stop-color="#079900"/><stop offset="1.000" stop-color="#2d9900"/></linearGradient><linearGradient id="l69" gradientUnits="userSpaceOnUse" x1="1160.5" y1="0" x2="1490.4" y2="0"><stop offset="0.000" stop-color="#009922"/><stop offset="0.833" stop-color="#049900"/><stop offset="1.000" stop-color="#319900"/></linearGradient><linearGradient id="l70" gradientUnits="userSpaceOnUse" x1="1160.5" y1="0" x2="1493.1" y2="0"><stop offset="0.000" stop-color="#009923"/><stop offset="0.833" stop-color="#069900"/><stop offset="1.000" stop-color="#349900"/></linearGradient><linearGradient id="l71" gradientUnits="userSpaceOnUse" x1="1160.6" y1="0" x2="1495.8" y2="0"><stop offset="0.000" stop-color="#009924"/><stop offset="0.810" stop-color="#039900"/><stop offset="1.000" stop-color="#379900"/></linearGradient><linearGradient id="l72" gradientUnits="userSpaceOnUse" x1="1160.6" y1="0" x2="1498.5" y2="0"><stop offset="0.000" stop-color="#009924"/><stop offset="0.814" stop-color="#069900"/><stop offset="1.000" stop-color="#3b9900"/></linearGradient><linearGradient id="l73" gradientUnits="userSpaceOnUse" x1="1160.7" y1="0" x2="1501.1" y2="0"><stop offset="0.000" stop-color="#009925"/><stop offset="0.791" stop-color="#029900"/><stop offset="1.000" stop-color="#3e9900"/></linearGradient><linearGradient id="l74" gradientUnits="userSpaceOnUse" x1="1160.7" y1="0" x2="1503.8" y2="0"><stop offset="0.000" stop-color="#009926"/><stop offset="0.791" stop-color="#049900"/><stop offset="1.000" stop-color="#429900"/></linearGradient><linearGradient id="l75" gradientUnits="userSpaceOnUse" x1="1160.8" y1="0" x2="1506.5" y2="0"><stop offset="0.000" stop-color="#009926"/><stop offset="0.773" stop-color="#029900"/><stop offset="1.000" stop-color="#459900"/></linearGradient><linearGradient id="l76" gradientUnits="userSpaceOnUse" x1="1160.9" y1="0" x2="1509.2" y2="0"><stop offset="0.000" stop-color="#009927"/><stop offset="0.773" stop-color="#049900"/><stop offset="1.000" stop-color="#499900"/></linearGradient><linearGradient id="l77" gradientUnits="userSpaceOnUse" x1="1161.0" y1="0" x2="1511.8" y2="0"><stop offset="0.000" stop-color="#009928"/><stop offset="0.773" stop-color="#069900"/><stop offset="1.000" stop-color="#4d9900"/></linearGradient><linearGradient id="l78" gradientUnits="userSpaceOnUse" x1="1161.1" y1="0" x2="1514.5" y2="0"><stop offset="0.000" stop-color="#009928"/><stop offset="0.756" stop-color="#049900"/><stop offset="1.000" stop-color="#519900"/></linearGradient><linearGradient id="t78" gradientUnits="userSpaceOnUse" x1="1420.0" y1="0" x2="1428.8" y2="0"><stop offset="0.000" stop-color="#00ff00"/><stop offset="1.000" stop-color="#03ff00"/></linearGradient><linearGradient id="l79" gradientUnits="userSpaceOnUse" x1="1161.2" y1="0" x2="1517.2" y2="0"><stop offset="0.000" stop-color="#009929"/><stop offset="0.756" stop-color="#069900"/><stop offset="1.000" stop-color="#559900"/></linearGradient><linearGradient id="t79" gradientUnits="userSpaceOnUse" x1="1419.3" y1="0" x2="1432.1" y2="0"><stop offset="0.000" stop-color="#00ff01"/><stop offset="1.000" stop-color="#06ff00"/></linearGradient><linearGradient id="l80" gradientUnits="userSpaceOnUse" x1="1161.3" y1="0" x2="1519.9" y2="0"><stop offset="0.000" stop-color="#00992a"/><stop offset="0.733" stop-color="#029901"/><stop offset="1.000" stop-color="#599900"/></linearGradient><linearGradient id="t80" gradientUnits="userSpaceOnUse" x1="1418.6" y1="0" x2="1435.4" y2="0"><stop offset="0.000" stop-color="#00ff02"/><stop offset="1.000" stop-color="#09ff00"/></linearGradient><linearGradient id="l81" gradientUnits="userSpaceOnUse" x1="1161.4" y1="0" x2="1522.5" y2="0"><stop offset="0.000" stop-color="#00992a"/><stop offset="0.739" stop-color="#069901"/><stop offset="1.000" stop-color="#5d9900"/></linearGradient><linearGradient id="t81" gradientUnits="userSpaceOnUse" x1="1417.8" y1="0" x2="1438.7" y2="0"><stop offset="0.000" stop-color="#00ff02"/><stop offset="1.000" stop-color="#0dff00"/></linearGradient><linearGradient id="l82" gradientUnits="userSpaceOnUse" x1="1161.5" y1="0" x2="1525.2" y2="0"><stop offset="0.000" stop-color="#00992b"/><stop offset="0.717" stop-color="#029903"/><stop offset="1.000" stop-color="#629900"/></linearGradient><linearGradient id="t82" gradientUnits="userSpaceOnUse" x1="1417.1" y1="0" x2="1442.0" y2="0"><stop offset="0.000" stop-color="#00ff03"/><stop offset="1.000" stop-color="#11ff00"/></linearGradient><linearGradient id="l83" gradientUnits="userSpaceOnUse" x1="1161.6" y1="0" x2="1527.9" y2="0"><stop offset="0.000" stop-color="#00992c"/><stop offset="0.717" stop-color="#049904"/><stop offset="1.000" stop-color="#669900"/></linearGradient><linearGradient id="t83" gradientUnits="userSpaceOnUse" x1="1416.4" y1="0" x2="1445.4" y2="0"><stop offset="0.000" stop-color="#00ff04"/><stop offset="1.000" stop-color="#16ff00"/></linearGradient><linearGradient id="l84" gradientUnits="userSpaceOnUse" x1="1161.8" y1="0" x2="1530.6" y2="0"><stop offset="0.000" stop-color="#00992d"/><stop offset="0.702" stop-color="#019905"/><stop offset="1.000" stop-color="#6b9900"/></linearGradient><linearGradient id="t84" gradientUnits="userSpaceOnUse" x1="1415.7" y1="0" x2="1448.7" y2="0"><stop offset="0.000" stop-color="#00ff05"/><stop offset="1.000" stop-color="#1aff00"/></linearGradient><linearGradient id="l85" gradientUnits="userSpaceOnUse" x1="1161.9" y1="0" x2="1533.2" y2="0"><stop offset="0.000" stop-color="#00992d"/><stop offset="0.702" stop-color="#049905"/><stop offset="1.000" stop-color="#6f9900"/></linearGradient><linearGradient id="t85" gradientUnits="userSpaceOnUse" x1="1414.9" y1="0" x2="1452.0" y2="0"><stop offset="0.000" stop-color="#00ff05"/><stop offset="1.000" stop-color="#1fff00"/></linearGradient><linearGradient id="l86" gradientUnits="userSpaceOnUse" x1="1162.1" y1="0" x2="1535.9" y2="0"><stop offset="0.000" stop-color="#00992e"/><stop offset="0.702" stop-color="#069906"/><stop offset="1.000" stop-color="#749900"/></linearGradient><linearGradient id="t86" gradientUnits="userSpaceOnUse" x1="1414.2" y1="0" x2="1455.3" y2="0"><stop offset="0.000" stop-color="#00ff06"/><stop offset="1.000" stop-color="#25ff00"/></linearGradient><linearGradient id="l87" gradientUnits="userSpaceOnUse" x1="1162.2" y1="0" x2="1538.6" y2="0"><stop offset="0.000" stop-color="#00992f"/><stop offset="0.688" stop-color="#039907"/><stop offset="1.000" stop-color="#799900"/></linearGradient><linearGradient id="t87" gradientUnits="userSpaceOnUse" x1="1413.5" y1="0" x2="1458.6" y2="0"><stop offset="0.000" stop-color="#00ff07"/><stop offset="1.000" stop-color="#2aff00"/></linearGradient><linearGradient id="l88" gradientUnits="userSpaceOnUse" x1="1162.4" y1="0" x2="1541.2" y2="0"><stop offset="0.000" stop-color="#00992f"/><stop offset="0.687" stop-color="#069908"/><stop offset="1.000" stop-color="#7e9900"/></linearGradient><linearGradient id="t88" gradientUnits="userSpaceOnUse" x1="1412.7" y1="0" x2="1461.9" y2="0"><stop offset="0.000" stop-color="#00ff08"/><stop offset="0.900" stop-color="#2aff00"/><stop offset="1.000" stop-color="#30ff00"/></linearGradient><linearGradient id="l89" gradientUnits="userSpaceOnUse" x1="1162.5" y1="0" x2="1543.9" y2="0"><stop offset="0.000" stop-color="#009930"/><stop offset="0.667" stop-color="#01990a"/><stop offset="0.979" stop-color="#799900"/><stop offset="1.000" stop-color="#839900"/></linearGradient><linearGradient id="t89" gradientUnits="userSpaceOnUse" x1="1412.0" y1="0" x2="1465.2" y2="0"><stop offset="0.000" stop-color="#00ff09"/><stop offset="0.818" stop-color="#29ff01"/><stop offset="1.000" stop-color="#37ff00"/></linearGradient><linearGradient id="l90" gradientUnits="userSpaceOnUse" x1="1162.7" y1="0" x2="1546.6" y2="0"><stop offset="0.000" stop-color="#009931"/><stop offset="0.667" stop-color="#03990a"/><stop offset="0.979" stop-color="#7e9900"/><stop offset="1.000" stop-color="#889900"/></linearGradient><linearGradient id="t90" gradientUnits="userSpaceOnUse" x1="1411.3" y1="0" x2="1468.5" y2="0"><stop offset="0.000" stop-color="#00ff0a"/><stop offset="0.750" stop-color="#28ff01"/><stop offset="1.000" stop-color="#3dff00"/></linearGradient><linearGradient id="l91" gradientUnits="userSpaceOnUse" x1="1162.9" y1="0" x2="1549.2" y2="0"><stop offset="0.000" stop-color="#009932"/><stop offset="0.653" stop-color="#01990c"/><stop offset="0.959" stop-color="#7a9900"/><stop offset="1.000" stop-color="#8e9900"/></linearGradient><linearGradient id="t91" gradientUnits="userSpaceOnUse" x1="1410.5" y1="0" x2="1471.8" y2="0"><stop offset="0.000" stop-color="#00ff0b"/><stop offset="0.692" stop-color="#28ff02"/><stop offset="1.000" stop-color="#44ff00"/></linearGradient><linearGradient id="l92" gradientUnits="userSpaceOnUse" x1="1163.1" y1="0" x2="1551.9" y2="0"><stop offset="0.000" stop-color="#009933"/><stop offset="0.653" stop-color="#03990c"/><stop offset="0.939" stop-color="#759900"/><stop offset="1.000" stop-color="#939900"/></linearGradient><linearGradient id="t92" gradientUnits="userSpaceOnUse" x1="1409.8" y1="0" x2="1475.2" y2="0"><stop offset="0.000" stop-color="#00ff0c"/><stop offset="0.643" stop-color="#28ff03"/><stop offset="1.000" stop-color="#4bff00"/></linearGradient><linearGradient id="l93" gradientUnits="userSpaceOnUse" x1="1163.3" y1="0" x2="1554.5" y2="0"><stop offset="0.000" stop-color="#009933"/><stop offset="0.653" stop-color="#05990d"/><stop offset="0.939" stop-color="#7a9900"/><stop offset="1.000" stop-color="#999900"/></linearGradient><linearGradient id="t93" gradientUnits="userSpaceOnUse" x1="1409.1" y1="0" x2="1478.5" y2="0"><stop offset="0.000" stop-color="#00ff0e"/><stop offset="0.643" stop-color="#2cff03"/><stop offset="1.000" stop-color="#53ff00"/></linearGradient><linearGradient id="l94" gradientUnits="userSpaceOnUse" x1="1163.4" y1="0" x2="1557.2" y2="0"><stop offset="0.000" stop-color="#009934"/><stop offset="0.640" stop-color="#03990e"/><stop offset="0.920" stop-color="#759900"/><stop offset="1.000" stop-color="#999300"/></linearGradient><linearGradient id="t94" gradientUnits="userSpaceOnUse" x1="1408.4" y1="0" x2="1481.8" y2="0"><stop offset="0.000" stop-color="#00ff0f"/><stop offset="0.600" stop-color="#2bff04"/><stop offset="1.000" stop-color="#5bff00"/></linearGradient><linearGradient id="l95" gradientUnits="userSpaceOnUse" x1="1163.6" y1="0" x2="1559.8" y2="0"><stop offset="0.000" stop-color="#009935"/><stop offset="0.640" stop-color="#05990f"/><stop offset="0.920" stop-color="#7a9900"/><stop offset="0.980" stop-color="#999800"/><stop offset="1.000" stop-color="#998e00"/></linearGradient><linearGradient id="t95" gradientUnits="userSpaceOnUse" x1="1407.6" y1="0" x2="1485.1" y2="0"><stop offset="0.000" stop-color="#00ff10"/><stop offset="0.563" stop-color="#2bff06"/><stop offset="1.000" stop-color="#63ff00"/></linearGradient><linearGradient id="l96" gradientUnits="userSpaceOnUse" x1="1163.8" y1="0" x2="1562.5" y2="0"><stop offset="0.000" stop-color="#009936"/><stop offset="0.620" stop-color="#019911"/><stop offset="0.900" stop-color="#759900"/><stop offset="0.980" stop-color="#999200"/><stop offset="1.000" stop-color="#998900"/></linearGradient><linearGradient id="t96" gradientUnits="userSpaceOnUse" x1="1406.9" y1="0" x2="1488.4" y2="0"><stop offset="0.000" stop-color="#00ff11"/><stop offset="0.529" stop-color="#2bff07"/><stop offset="1.000" stop-color="#6bff00"/></linearGradient><linearGradient id="l97" gradientUnits="userSpaceOnUse" x1="1164.0" y1="0" x2="1565.1" y2="0"><stop offset="0.000" stop-color="#009937"/><stop offset="0.627" stop-color="#059911"/><stop offset="0.902" stop-color="#7b9900"/><stop offset="0.961" stop-color="#999700"/><stop offset="1.000" stop-color="#998400"/></linearGradient><linearGradient id="t97" gradientUnits="userSpaceOnUse" x1="1406.2" y1="0" x2="1491.7" y2="0"><stop offset="0.000" stop-color="#00ff12"/><stop offset="0.500" stop-color="#2aff08"/><stop offset="1.000" stop-color="#75ff00"/></linearGradient><linearGradient id="l98" gradientUnits="userSpaceOnUse" x1="1164.2" y1="0" x2="1567.8" y2="0"><stop offset="0.000" stop-color="#009937"/><stop offset="0.608" stop-color="#019913"/><stop offset="0.882" stop-color="#769900"/><stop offset="0.961" stop-color="#999200"/><stop offset="1.000" stop-color="#997f00"/></linearGradient><linearGradient id="t98" gradientUnits="userSpaceOnUse" x1="1405.4" y1="0" x2="1495.0" y2="0"><stop offset="0.000" stop-color="#00ff14"/><stop offset="0.444" stop-color="#27ff0a"/><stop offset="1.000" stop-color="#7eff00"/></linearGradient><linearGradient id="l99" gradientUnits="userSpaceOnUse" x1="1164.4" y1="0" x2="1570.4" y2="0"><stop offset="0.000" stop-color="#009938"/><stop offset="0.608" stop-color="#039914"/><stop offset="0.882" stop-color="#7b9900"/><stop offset="0.941" stop-color="#999700"/><stop offset="1.000" stop-color="#997a00"/></linearGradient><linearGradient id="t99" gradientUnits="userSpaceOnUse" x1="1404.7" y1="0" x2="1498.3" y2="0"><stop offset="0.000" stop-color="#00ff15"/><stop offset="0.421" stop-color="#26ff0b"/><stop offset="1.000" stop-color="#88ff00"/></linearGradient><linearGradient id="l100" gradientUnits="userSpaceOnUse" x1="1164.7" y1="0" x2="1573.0" y2="0"><stop offset="0.000" stop-color="#009939"/><stop offset="0.596" stop-color="#019915"/><stop offset="0.865" stop-color="#779900"/><stop offset="0.942" stop-color="#999100"/><stop offset="1.000" stop-color="#997600"/></linearGradient><linearGradient id="t100" gradientUnits="userSpaceOnUse" x1="1404.0" y1="0" x2="1501.6" y2="0"><stop offset="0.000" stop-color="#00ff17"/><stop offset="0.400" stop-color="#26ff0c"/><stop offset="1.000" stop-color="#92ff00"/></linearGradient><linearGradient id="l101" gradientUnits="userSpaceOnUse" x1="1164.9" y1="0" x2="1575.7" y2="0"><stop offset="0.000" stop-color="#00993a"/><stop offset="0.596" stop-color="#039916"/><stop offset="0.865" stop-color="#7c9900"/><stop offset="0.923" stop-color="#999600"/><stop offset="1.000" stop-color="#997200"/></linearGradient><linearGradient id="t101" gradientUnits="userSpaceOnUse" x1="1403.2" y1="0" x2="1504.9" y2="0"><stop offset="0.000" stop-color="#00ff18"/><stop offset="0.381" stop-color="#26ff0e"/><stop offset="0.952" stop-color="#92ff00"/><stop offset="1.000" stop-color="#9dff00"/></linearGradient><linearGradient id="l102" gradientUnits="userSpaceOnUse" x1="1165.1" y1="0" x2="1578.3" y2="0"><stop offset="0.000" stop-color="#00993b"/><stop offset="0.596" stop-color="#059916"/><stop offset="0.865" stop-color="#819900"/><stop offset="0.923" stop-color="#999000"/><stop offset="1.000" stop-color="#996e00"/></linearGradient><linearGradient id="t102" gradientUnits="userSpaceOnUse" x1="1402.5" y1="0" x2="1508.3" y2="0"><stop offset="0.000" stop-color="#00ff19"/><stop offset="0.364" stop-color="#26ff0f"/><stop offset="0.909" stop-color="#91ff01"/><stop offset="1.000" stop-color="#a8ff00"/></linearGradient><linearGradient id="l103" gradientUnits="userSpaceOnUse" x1="1165.4" y1="0" x2="1581.0" y2="0"><stop offset="0.000" stop-color="#00993c"/><stop offset="0.577" stop-color="#009919"/><stop offset="0.846" stop-color="#7b9900"/><stop offset="0.904" stop-color="#999500"/><stop offset="1.000" stop-color="#996a00"/></linearGradient><linearGradient id="t103" gradientUnits="userSpaceOnUse" x1="1401.8" y1="0" x2="1511.6" y2="0"><stop offset="0.000" stop-color="#00ff1b"/><stop offset="0.364" stop-color="#28ff10"/><stop offset="0.864" stop-color="#90ff02"/><stop offset="1.000" stop-color="#b4ff00"/></linearGradient><linearGradient id="l104" gradientUnits="userSpaceOnUse" x1="1165.6" y1="0" x2="1583.6" y2="0"><stop offset="0.000" stop-color="#00993d"/><stop offset="0.585" stop-color="#059919"/><stop offset="0.849" stop-color="#829900"/><stop offset="0.887" stop-color="#989900"/><stop offset="1.000" stop-color="#996600"/></linearGradient><linearGradient id="t104" gradientUnits="userSpaceOnUse" x1="1401.1" y1="0" x2="1514.9" y2="0"><stop offset="0.000" stop-color="#00ff1c"/><stop offset="0.348" stop-color="#28ff12"/><stop offset="0.826" stop-color="#8fff03"/><stop offset="1.000" stop-color="#c0ff00"/></linearGradient><linearGradient id="l105" gradientUnits="userSpaceOnUse" x1="1165.9" y1="0" x2="1586.2" y2="0"><stop offset="0.000" stop-color="#00993e"/><stop offset="0.566" stop-color="#00991b"/><stop offset="0.830" stop-color="#7c9900"/><stop offset="0.887" stop-color="#999400"/><stop offset="1.000" stop-color="#996300"/></linearGradient><linearGradient id="t105" gradientUnits="userSpaceOnUse" x1="1400.3" y1="0" x2="1518.2" y2="0"><stop offset="0.000" stop-color="#00ff1e"/><stop offset="0.333" stop-color="#28ff13"/><stop offset="0.792" stop-color="#8fff04"/><stop offset="1.000" stop-color="#cdff00"/></linearGradient><linearGradient id="l106" gradientUnits="userSpaceOnUse" x1="1166.1" y1="0" x2="1588.9" y2="0"><stop offset="0.000" stop-color="#00993e"/><stop offset="0.566" stop-color="#02991c"/><stop offset="0.830" stop-color="#819900"/><stop offset="0.868" stop-color="#989900"/><stop offset="1.000" stop-color="#995f00"/></linearGradient><linearGradient id="t106" gradientUnits="userSpaceOnUse" x1="1399.6" y1="0" x2="1521.5" y2="0"><stop offset="0.000" stop-color="#00ff20"/><stop offset="0.320" stop-color="#28ff15"/><stop offset="0.760" stop-color="#8fff05"/><stop offset="1.000" stop-color="#dbff00"/></linearGradient><linearGradient id="l107" gradientUnits="userSpaceOnUse" x1="1166.3" y1="0" x2="1591.5" y2="0"><stop offset="0.000" stop-color="#00993f"/><stop offset="0.556" stop-color="#00991d"/><stop offset="0.815" stop-color="#7d9902"/><stop offset="0.870" stop-color="#999300"/><stop offset="1.000" stop-color="#995c00"/></linearGradient><linearGradient id="t107" gradientUnits="userSpaceOnUse" x1="1398.9" y1="0" x2="1524.8" y2="0"><stop offset="0.000" stop-color="#00ff21"/><stop offset="0.308" stop-color="#28ff16"/><stop offset="0.731" stop-color="#8fff07"/><stop offset="1.000" stop-color="#e9ff00"/></linearGradient><linearGradient id="l108" gradientUnits="userSpaceOnUse" x1="1166.6" y1="0" x2="1594.2" y2="0"><stop offset="0.000" stop-color="#009940"/><stop offset="0.556" stop-color="#02991e"/><stop offset="0.796" stop-color="#779905"/><stop offset="0.852" stop-color="#999900"/><stop offset="1.000" stop-color="#995900"/></linearGradient><linearGradient id="t108" gradientUnits="userSpaceOnUse" x1="1398.1" y1="0" x2="1528.1" y2="0"><stop offset="0.000" stop-color="#00ff23"/><stop offset="0.308" stop-color="#2aff17"/><stop offset="0.731" stop-color="#97ff07"/><stop offset="1.000" stop-color="#f7ff00"/></linearGradient><linearGradient id="l109" gradientUnits="userSpaceOnUse" x1="1166.9" y1="0" x2="1596.8" y2="0"><stop offset="0.000" stop-color="#009941"/><stop offset="0.556" stop-color="#05991f"/><stop offset="0.796" stop-color="#7c9905"/><stop offset="0.852" stop-color="#999300"/><stop offset="1.000" stop-color="#995600"/></linearGradient><linearGradient id="t109" gradientUnits="userSpaceOnUse" x1="1397.4" y1="0" x2="1531.4" y2="0"><stop offset="0.000" stop-color="#00ff25"/><stop offset="0.296" stop-color="#2aff19"/><stop offset="0.704" stop-color="#97ff09"/><stop offset="0.963" stop-color="#f7ff00"/><stop offset="1.000" stop-color="#fff700"/></linearGradient><linearGradient id="l110" gradientUnits="userSpaceOnUse" x1="1167.2" y1="0" x2="1599.4" y2="0"><stop offset="0.000" stop-color="#009942"/><stop offset="0.545" stop-color="#039920"/><stop offset="0.782" stop-color="#799908"/><stop offset="0.836" stop-color="#999700"/><stop offset="0.982" stop-color="#995800"/><stop offset="1.000" stop-color="#995300"/></linearGradient><linearGradient id="t110" gradientUnits="userSpaceOnUse" x1="1396.7" y1="0" x2="1534.7" y2="0"><stop offset="0.000" stop-color="#00ff26"/><stop offset="0.286" stop-color="#2aff1b"/><stop offset="0.679" stop-color="#97ff0a"/><stop offset="0.929" stop-color="#f7ff01"/><stop offset="1.000" stop-color="#ffe900"/></linearGradient><linearGradient id="l111" gradientUnits="userSpaceOnUse" x1="1167.5" y1="0" x2="1602.1" y2="0"><stop offset="0.000" stop-color="#009943"/><stop offset="0.545" stop-color="#059921"/><stop offset="0.782" stop-color="#7e9908"/><stop offset="0.836" stop-color="#999101"/><stop offset="0.982" stop-color="#995500"/><stop offset="1.000" stop-color="#995000"/></linearGradient><linearGradient id="t111" gradientUnits="userSpaceOnUse" x1="1395.9" y1="0" x2="1538.1" y2="0"><stop offset="0.000" stop-color="#00ff28"/><stop offset="0.276" stop-color="#2aff1d"/><stop offset="0.655" stop-color="#97ff0c"/><stop offset="0.897" stop-color="#f7ff02"/><stop offset="1.000" stop-color="#ffdc00"/></linearGradient><linearGradient id="l112" gradientUnits="userSpaceOnUse" x1="1167.8" y1="0" x2="1604.7" y2="0"><stop offset="0.000" stop-color="#009944"/><stop offset="0.527" stop-color="#009924"/><stop offset="0.764" stop-color="#77990b"/><stop offset="0.818" stop-color="#999704"/><stop offset="0.945" stop-color="#995d00"/><stop offset="1.000" stop-color="#994d00"/></linearGradient><linearGradient id="t112" gradientUnits="userSpaceOnUse" x1="1395.2" y1="0" x2="1541.4" y2="0"><stop offset="0.000" stop-color="#00ff2a"/><stop offset="0.267" stop-color="#2aff1f"/><stop offset="0.633" stop-color="#97ff0e"/><stop offset="0.867" stop-color="#f7ff03"/><stop offset="1.000" stop-color="#ffcf00"/></linearGradient><linearGradient id="l113" gradientUnits="userSpaceOnUse" x1="1168.1" y1="0" x2="1607.3" y2="0"><stop offset="0.000" stop-color="#009945"/><stop offset="0.527" stop-color="#029924"/><stop offset="0.764" stop-color="#7c990c"/><stop offset="0.818" stop-color="#999204"/><stop offset="0.964" stop-color="#995400"/><stop offset="1.000" stop-color="#994a00"/></linearGradient><linearGradient id="t113" gradientUnits="userSpaceOnUse" x1="1394.5" y1="0" x2="1544.7" y2="0"><stop offset="0.000" stop-color="#00ff2c"/><stop offset="0.226" stop-color="#23ff22"/><stop offset="0.581" stop-color="#8bff11"/><stop offset="0.839" stop-color="#f8ff05"/><stop offset="1.000" stop-color="#ffc400"/></linearGradient><linearGradient id="l114" gradientUnits="userSpaceOnUse" x1="1168.3" y1="0" x2="1610.0" y2="0"><stop offset="0.000" stop-color="#009946"/><stop offset="0.518" stop-color="#009926"/><stop offset="0.750" stop-color="#79990e"/><stop offset="0.804" stop-color="#999607"/><stop offset="0.946" stop-color="#995600"/><stop offset="1.000" stop-color="#994800"/></linearGradient><linearGradient id="t114" gradientUnits="userSpaceOnUse" x1="1393.8" y1="0" x2="1548.0" y2="0"><stop offset="0.000" stop-color="#00ff2e"/><stop offset="0.226" stop-color="#25ff23"/><stop offset="0.548" stop-color="#87ff14"/><stop offset="0.839" stop-color="#fff805"/><stop offset="1.000" stop-color="#ffb900"/></linearGradient><linearGradient id="l115" gradientUnits="userSpaceOnUse" x1="1168.6" y1="0" x2="1612.6" y2="0"><stop offset="0.000" stop-color="#009947"/><stop offset="0.518" stop-color="#029927"/><stop offset="0.750" stop-color="#7e990e"/><stop offset="0.804" stop-color="#999007"/><stop offset="0.946" stop-color="#995300"/><stop offset="1.000" stop-color="#994500"/></linearGradient><linearGradient id="t115" gradientUnits="userSpaceOnUse" x1="1393.0" y1="0" x2="1551.3" y2="0"><stop offset="0.000" stop-color="#00ff30"/><stop offset="0.219" stop-color="#25ff25"/><stop offset="0.531" stop-color="#87ff16"/><stop offset="0.812" stop-color="#fff807"/><stop offset="1.000" stop-color="#ffaf00"/></linearGradient><linearGradient id="l116" gradientUnits="userSpaceOnUse" x1="1168.9" y1="0" x2="1615.2" y2="0"><stop offset="0.000" stop-color="#009948"/><stop offset="0.518" stop-color="#049928"/><stop offset="0.750" stop-color="#83990f"/><stop offset="0.786" stop-color="#99960a"/><stop offset="0.911" stop-color="#995b00"/><stop offset="1.000" stop-color="#994300"/></linearGradient><linearGradient id="t116" gradientUnits="userSpaceOnUse" x1="1392.3" y1="0" x2="1554.6" y2="0"><stop offset="0.000" stop-color="#00ff32"/><stop offset="0.212" stop-color="#25ff27"/><stop offset="0.515" stop-color="#87ff18"/><stop offset="0.758" stop-color="#f6ff0a"/><stop offset="0.848" stop-color="#ffdb05"/><stop offset="1.000" stop-color="#ffa500"/></linearGradient><linearGradient id="l117" gradientUnits="userSpaceOnUse" x1="1169.3" y1="0" x2="1617.9" y2="0"><stop offset="0.000" stop-color="#009949"/><stop offset="0.509" stop-color="#03992a"/><stop offset="0.737" stop-color="#809911"/><stop offset="0.772" stop-color="#98990d"/><stop offset="0.912" stop-color="#995700"/><stop offset="1.000" stop-color="#994000"/></linearGradient><linearGradient id="t117" gradientUnits="userSpaceOnUse" x1="1391.6" y1="0" x2="1557.9" y2="0"><stop offset="0.000" stop-color="#00ff34"/><stop offset="0.206" stop-color="#25ff2a"/><stop offset="0.500" stop-color="#87ff1a"/><stop offset="0.735" stop-color="#f7ff0c"/><stop offset="0.882" stop-color="#ffc203"/><stop offset="1.000" stop-color="#ff9c00"/></linearGradient><linearGradient id="l118" gradientUnits="userSpaceOnUse" x1="1169.6" y1="0" x2="1620.5" y2="0"><stop offset="0.000" stop-color="#00994a"/><stop offset="0.509" stop-color="#05992b"/><stop offset="0.719" stop-color="#799914"/><stop offset="0.772" stop-color="#99940d"/><stop offset="0.895" stop-color="#995a00"/><stop offset="1.000" stop-color="#993e00"/></linearGradient><linearGradient id="t118" gradientUnits="userSpaceOnUse" x1="1390.8" y1="0" x2="1561.2" y2="0"><stop offset="0.000" stop-color="#00ff36"/><stop offset="0.200" stop-color="#25ff2c"/><stop offset="0.486" stop-color="#88ff1c"/><stop offset="0.714" stop-color="#f8ff0e"/><stop offset="0.971" stop-color="#ff9c00"/><stop offset="1.000" stop-color="#ff9400"/></linearGradient><linearGradient id="l119" gradientUnits="userSpaceOnUse" x1="1169.9" y1="0" x2="1623.2" y2="0"><stop offset="0.000" stop-color="#00994b"/><stop offset="0.491" stop-color="#00992d"/><stop offset="0.702" stop-color="#729917"/><stop offset="0.754" stop-color="#979910"/><stop offset="0.895" stop-color="#995600"/><stop offset="1.000" stop-color="#993c00"/></linearGradient><linearGradient id="t119" gradientUnits="userSpaceOnUse" x1="1390.1" y1="0" x2="1564.5" y2="0"><stop offset="0.000" stop-color="#00ff38"/><stop offset="0.200" stop-color="#26ff2e"/><stop offset="0.486" stop-color="#8eff1d"/><stop offset="0.714" stop-color="#fffa0e"/><stop offset="0.914" stop-color="#ffa402"/><stop offset="1.000" stop-color="#ff8c00"/></linearGradient><linearGradient id="l120" gradientUnits="userSpaceOnUse" x1="1170.2" y1="0" x2="1625.8" y2="0"><stop offset="0.000" stop-color="#00994c"/><stop offset="0.491" stop-color="#01992e"/><stop offset="0.702" stop-color="#779918"/><stop offset="0.754" stop-color="#999511"/><stop offset="0.877" stop-color="#995900"/><stop offset="1.000" stop-color="#993a00"/></linearGradient><linearGradient id="t120" gradientUnits="userSpaceOnUse" x1="1389.4" y1="0" x2="1567.8" y2="0"><stop offset="0.000" stop-color="#00ff3a"/><stop offset="0.194" stop-color="#26ff30"/><stop offset="0.472" stop-color="#8eff1f"/><stop offset="0.694" stop-color="#fff910"/><stop offset="0.889" stop-color="#ffa403"/><stop offset="1.000" stop-color="#ff8400"/></linearGradient><linearGradient id="l121" gradientUnits="userSpaceOnUse" x1="1170.6" y1="0" x2="1628.4" y2="0"><stop offset="0.000" stop-color="#00994d"/><stop offset="0.483" stop-color="#009930"/><stop offset="0.690" stop-color="#74991a"/><stop offset="0.741" stop-color="#999914"/><stop offset="0.862" stop-color="#995b00"/><stop offset="1.000" stop-color="#993800"/></linearGradient><linearGradient id="t121" gradientUnits="userSpaceOnUse" x1="1388.6" y1="0" x2="1571.2" y2="0"><stop offset="0.000" stop-color="#00ff3c"/><stop offset="0.189" stop-color="#27ff32"/><stop offset="0.459" stop-color="#8fff21"/><stop offset="0.676" stop-color="#fff812"/><stop offset="0.865" stop-color="#ffa304"/><stop offset="1.000" stop-color="#ff7d00"/></linearGradient><linearGradient id="l122" gradientUnits="userSpaceOnUse" x1="1170.9" y1="0" x2="1631.1" y2="0"><stop offset="0.000" stop-color="#00994e"/><stop offset="0.483" stop-color="#029931"/><stop offset="0.690" stop-color="#79991b"/><stop offset="0.741" stop-color="#999314"/><stop offset="0.862" stop-color="#995801"/><stop offset="1.000" stop-color="#993600"/></linearGradient><linearGradient id="t122" gradientUnits="userSpaceOnUse" x1="1387.9" y1="0" x2="1574.5" y2="0"><stop offset="0.000" stop-color="#00ff3f"/><stop offset="0.184" stop-color="#27ff34"/><stop offset="0.447" stop-color="#8fff24"/><stop offset="0.632" stop-color="#f6ff17"/><stop offset="0.711" stop-color="#ffda0f"/><stop offset="0.921" stop-color="#ff8a01"/><stop offset="1.000" stop-color="#ff7600"/></linearGradient><linearGradient id="l123" gradientUnits="userSpaceOnUse" x1="1171.2" y1="0" x2="1633.7" y2="0"><stop offset="0.000" stop-color="#009950"/><stop offset="0.483" stop-color="#049932"/><stop offset="0.690" stop-color="#7e991c"/><stop offset="0.724" stop-color="#989918"/><stop offset="0.845" stop-color="#995a03"/><stop offset="1.000" stop-color="#993400"/></linearGradient><linearGradient id="t123" gradientUnits="userSpaceOnUse" x1="1387.2" y1="0" x2="1577.8" y2="0"><stop offset="0.000" stop-color="#00ff41"/><stop offset="0.179" stop-color="#27ff37"/><stop offset="0.436" stop-color="#90ff26"/><stop offset="0.615" stop-color="#f7ff19"/><stop offset="0.744" stop-color="#ffc00c"/><stop offset="0.974" stop-color="#ff7600"/><stop offset="1.000" stop-color="#ff7000"/></linearGradient><linearGradient id="l124" gradientUnits="userSpaceOnUse" x1="1171.5" y1="0" x2="1636.3" y2="0"><stop offset="0.000" stop-color="#009951"/><stop offset="0.475" stop-color="#029934"/><stop offset="0.678" stop-color="#7b991f"/><stop offset="0.729" stop-color="#999117"/><stop offset="0.847" stop-color="#995603"/><stop offset="1.000" stop-color="#993200"/></linearGradient><linearGradient id="t124" gradientUnits="userSpaceOnUse" x1="1386.4" y1="0" x2="1581.1" y2="0"><stop offset="0.000" stop-color="#00ff43"/><stop offset="0.179" stop-color="#28ff39"/><stop offset="0.436" stop-color="#96ff28"/><stop offset="0.615" stop-color="#fffb1a"/><stop offset="0.769" stop-color="#ffac0a"/><stop offset="1.000" stop-color="#ff6a00"/></linearGradient><linearGradient id="l125" gradientUnits="userSpaceOnUse" x1="1171.9" y1="0" x2="1639.0" y2="0"><stop offset="0.000" stop-color="#009952"/><stop offset="0.475" stop-color="#059935"/><stop offset="0.678" stop-color="#809920"/><stop offset="0.712" stop-color="#99981b"/><stop offset="0.831" stop-color="#995905"/><stop offset="1.000" stop-color="#993000"/></linearGradient><linearGradient id="t125" gradientUnits="userSpaceOnUse" x1="1385.7" y1="0" x2="1584.4" y2="0"><stop offset="0.000" stop-color="#00ff46"/><stop offset="0.175" stop-color="#28ff3b"/><stop offset="0.425" stop-color="#97ff2a"/><stop offset="0.600" stop-color="#fffa1c"/><stop offset="0.750" stop-color="#ffac0b"/><stop offset="1.000" stop-color="#ff6400"/></linearGradient><linearGradient id="l126" gradientUnits="userSpaceOnUse" x1="1172.3" y1="0" x2="1641.6" y2="0"><stop offset="0.000" stop-color="#009953"/><stop offset="0.458" stop-color="#009938"/><stop offset="0.644" stop-color="#6d9925"/><stop offset="0.712" stop-color="#99921b"/><stop offset="0.831" stop-color="#995605"/><stop offset="1.000" stop-color="#992e00"/></linearGradient><linearGradient id="t126" gradientUnits="userSpaceOnUse" x1="1385.0" y1="0" x2="1587.7" y2="0"><stop offset="0.000" stop-color="#00ff48"/><stop offset="0.171" stop-color="#29ff3e"/><stop offset="0.415" stop-color="#97ff2d"/><stop offset="0.585" stop-color="#fff91f"/><stop offset="0.732" stop-color="#ffab0d"/><stop offset="0.976" stop-color="#ff6400"/><stop offset="1.000" stop-color="#ff5f00"/></linearGradient><linearGradient id="l127" gradientUnits="userSpaceOnUse" x1="1172.6" y1="0" x2="1644.3" y2="0"><stop offset="0.000" stop-color="#009954"/><stop offset="0.458" stop-color="#019939"/><stop offset="0.661" stop-color="#7e9924"/><stop offset="0.695" stop-color="#99991f"/><stop offset="0.797" stop-color="#995f0a"/><stop offset="1.000" stop-color="#992c00"/></linearGradient><linearGradient id="t127" gradientUnits="userSpaceOnUse" x1="1384.3" y1="0" x2="1591.0" y2="0"><stop offset="0.000" stop-color="#00ff4b"/><stop offset="0.143" stop-color="#20ff42"/><stop offset="0.381" stop-color="#8bff31"/><stop offset="0.571" stop-color="#fff821"/><stop offset="0.714" stop-color="#ffaa0f"/><stop offset="0.952" stop-color="#ff6301"/><stop offset="1.000" stop-color="#ff5a00"/></linearGradient><linearGradient id="l128" gradientUnits="userSpaceOnUse" x1="1173.0" y1="0" x2="1646.9" y2="0"><stop offset="0.000" stop-color="#009955"/><stop offset="0.450" stop-color="#00993b"/><stop offset="0.633" stop-color="#6f9928"/><stop offset="0.683" stop-color="#969922"/><stop offset="0.817" stop-color="#995407"/><stop offset="1.000" stop-color="#992a00"/></linearGradient><linearGradient id="t128" gradientUnits="userSpaceOnUse" x1="1383.5" y1="0" x2="1594.3" y2="0"><stop offset="0.000" stop-color="#00ff4e"/><stop offset="0.140" stop-color="#21ff45"/><stop offset="0.349" stop-color="#7eff36"/><stop offset="0.535" stop-color="#f6ff27"/><stop offset="0.605" stop-color="#ffd81c"/><stop offset="0.767" stop-color="#ff8e0a"/><stop offset="1.000" stop-color="#ff5500"/></linearGradient><linearGradient id="l129" gradientUnits="userSpaceOnUse" x1="1173.3" y1="0" x2="1649.6" y2="0"><stop offset="0.000" stop-color="#009957"/><stop offset="0.450" stop-color="#02993c"/><stop offset="0.633" stop-color="#749929"/><stop offset="0.683" stop-color="#999622"/><stop offset="0.800" stop-color="#995709"/><stop offset="1.000" stop-color="#992900"/></linearGradient><linearGradient id="t129" gradientUnits="userSpaceOnUse" x1="1382.8" y1="0" x2="1597.6" y2="0"><stop offset="0.000" stop-color="#00ff50"/><stop offset="0.140" stop-color="#22ff47"/><stop offset="0.349" stop-color="#83ff38"/><stop offset="0.535" stop-color="#fffd28"/><stop offset="0.674" stop-color="#ffab13"/><stop offset="0.884" stop-color="#ff6703"/><stop offset="1.000" stop-color="#ff5000"/></linearGradient><linearGradient id="l130" gradientUnits="userSpaceOnUse" x1="1173.7" y1="0" x2="1652.2" y2="0"><stop offset="0.000" stop-color="#009958"/><stop offset="0.450" stop-color="#04993d"/><stop offset="0.633" stop-color="#79992b"/><stop offset="0.683" stop-color="#999022"/><stop offset="0.800" stop-color="#99540a"/><stop offset="1.000" stop-color="#992700"/></linearGradient><linearGradient id="t130" gradientUnits="userSpaceOnUse" x1="1382.1" y1="0" x2="1601.0" y2="0"><stop offset="0.000" stop-color="#00ff53"/><stop offset="0.136" stop-color="#22ff4a"/><stop offset="0.341" stop-color="#84ff3b"/><stop offset="0.523" stop-color="#fffc2b"/><stop offset="0.659" stop-color="#ffaa14"/><stop offset="0.864" stop-color="#ff6704"/><stop offset="1.000" stop-color="#ff4c00"/></linearGradient><linearGradient id="l131" gradientUnits="userSpaceOnUse" x1="1174.1" y1="0" x2="1654.9" y2="0"><stop offset="0.000" stop-color="#009959"/><stop offset="0.443" stop-color="#02993f"/><stop offset="0.623" stop-color="#76992d"/><stop offset="0.672" stop-color="#999325"/><stop offset="0.787" stop-color="#99550c"/><stop offset="1.000" stop-color="#992500"/></linearGradient><linearGradient id="t131" gradientUnits="userSpaceOnUse" x1="1381.3" y1="0" x2="1604.3" y2="0"><stop offset="0.000" stop-color="#00ff56"/><stop offset="0.133" stop-color="#22ff4d"/><stop offset="0.333" stop-color="#85ff3e"/><stop offset="0.511" stop-color="#fffa2e"/><stop offset="0.644" stop-color="#ffa916"/><stop offset="0.844" stop-color="#ff6605"/><stop offset="1.000" stop-color="#ff4800"/></linearGradient><linearGradient id="l132" gradientUnits="userSpaceOnUse" x1="1174.4" y1="0" x2="1657.5" y2="0"><stop offset="0.000" stop-color="#00995a"/><stop offset="0.443" stop-color="#059940"/><stop offset="0.623" stop-color="#7c992e"/><stop offset="0.656" stop-color="#97992a"/><stop offset="0.770" stop-color="#99580e"/><stop offset="0.967" stop-color="#992800"/><stop offset="1.000" stop-color="#992400"/></linearGradient><linearGradient id="t132" gradientUnits="userSpaceOnUse" x1="1380.6" y1="0" x2="1607.6" y2="0"><stop offset="0.000" stop-color="#00ff59"/><stop offset="0.130" stop-color="#22ff50"/><stop offset="0.326" stop-color="#85ff41"/><stop offset="0.500" stop-color="#fff930"/><stop offset="0.630" stop-color="#ffa818"/><stop offset="0.848" stop-color="#ff6005"/><stop offset="1.000" stop-color="#ff4400"/></linearGradient><linearGradient id="l133" gradientUnits="userSpaceOnUse" x1="1174.8" y1="0" x2="1660.2" y2="0"><stop offset="0.000" stop-color="#00995c"/><stop offset="0.426" stop-color="#009943"/><stop offset="0.590" stop-color="#679933"/><stop offset="0.656" stop-color="#99952a"/><stop offset="0.754" stop-color="#995b11"/><stop offset="0.951" stop-color="#992900"/><stop offset="1.000" stop-color="#992200"/></linearGradient><linearGradient id="t133" gradientUnits="userSpaceOnUse" x1="1379.9" y1="0" x2="1610.9" y2="0"><stop offset="0.000" stop-color="#00ff5c"/><stop offset="0.128" stop-color="#22ff53"/><stop offset="0.319" stop-color="#86ff44"/><stop offset="0.468" stop-color="#f4ff37"/><stop offset="0.511" stop-color="#ffe62e"/><stop offset="0.660" stop-color="#ff9414"/><stop offset="0.894" stop-color="#ff5203"/><stop offset="1.000" stop-color="#ff4000"/></linearGradient><linearGradient id="l134" gradientUnits="userSpaceOnUse" x1="1175.2" y1="0" x2="1662.8" y2="0"><stop offset="0.000" stop-color="#00995d"/><stop offset="0.426" stop-color="#019945"/><stop offset="0.607" stop-color="#799933"/><stop offset="0.639" stop-color="#95992f"/><stop offset="0.754" stop-color="#995811"/><stop offset="0.967" stop-color="#992500"/><stop offset="1.000" stop-color="#992100"/></linearGradient><linearGradient id="t134" gradientUnits="userSpaceOnUse" x1="1379.1" y1="0" x2="1614.2" y2="0"><stop offset="0.000" stop-color="#00ff5f"/><stop offset="0.125" stop-color="#23ff56"/><stop offset="0.313" stop-color="#87ff47"/><stop offset="0.458" stop-color="#f6ff3a"/><stop offset="0.521" stop-color="#ffd62b"/><stop offset="0.667" stop-color="#ff8b14"/><stop offset="0.917" stop-color="#ff4902"/><stop offset="1.000" stop-color="#ff3c00"/></linearGradient><linearGradient id="l135" gradientUnits="userSpaceOnUse" x1="1175.6" y1="0" x2="1665.4" y2="0"><stop offset="0.000" stop-color="#00995e"/><stop offset="0.419" stop-color="#009947"/><stop offset="0.597" stop-color="#769935"/><stop offset="0.645" stop-color="#99922d"/><stop offset="0.758" stop-color="#995310"/><stop offset="0.968" stop-color="#992300"/><stop offset="1.000" stop-color="#991f00"/></linearGradient><linearGradient id="t135" gradientUnits="userSpaceOnUse" x1="1378.4" y1="0" x2="1617.5" y2="0"><stop offset="0.000" stop-color="#00ff62"/><stop offset="0.125" stop-color="#24ff59"/><stop offset="0.313" stop-color="#8cff4a"/><stop offset="0.458" stop-color="#fffe3c"/><stop offset="0.583" stop-color="#ffa81f"/><stop offset="0.771" stop-color="#ff640a"/><stop offset="1.000" stop-color="#ff3900"/></linearGradient><linearGradient id="l136" gradientUnits="userSpaceOnUse" x1="1175.9" y1="0" x2="1668.1" y2="0"><stop offset="0.000" stop-color="#009960"/><stop offset="0.419" stop-color="#019948"/><stop offset="0.597" stop-color="#7c9937"/><stop offset="0.629" stop-color="#989933"/><stop offset="0.726" stop-color="#995d16"/><stop offset="0.919" stop-color="#992900"/><stop offset="1.000" stop-color="#991e00"/></linearGradient><linearGradient id="t136" gradientUnits="userSpaceOnUse" x1="1377.7" y1="0" x2="1620.8" y2="0"><stop offset="0.000" stop-color="#00ff65"/><stop offset="0.122" stop-color="#24ff5c"/><stop offset="0.306" stop-color="#8dff4d"/><stop offset="0.449" stop-color="#fffc3f"/><stop offset="0.571" stop-color="#ffa721"/><stop offset="0.755" stop-color="#ff630b"/><stop offset="1.000" stop-color="#ff3500"/></linearGradient><linearGradient id="l137" gradientUnits="userSpaceOnUse" x1="1176.3" y1="0" x2="1670.7" y2="0"><stop offset="0.000" stop-color="#009961"/><stop offset="0.419" stop-color="#04994a"/><stop offset="0.597" stop-color="#819938"/><stop offset="0.629" stop-color="#999433"/><stop offset="0.726" stop-color="#995916"/><stop offset="0.919" stop-color="#992700"/><stop offset="1.000" stop-color="#991c00"/></linearGradient><linearGradient id="t137" gradientUnits="userSpaceOnUse" x1="1377.0" y1="0" x2="1624.1" y2="0"><stop offset="0.000" stop-color="#00ff68"/><stop offset="0.120" stop-color="#24ff5f"/><stop offset="0.300" stop-color="#8eff51"/><stop offset="0.440" stop-color="#fffa42"/><stop offset="0.560" stop-color="#ffa623"/><stop offset="0.740" stop-color="#ff620c"/><stop offset="1.000" stop-color="#ff3200"/></linearGradient><linearGradient id="l138" gradientUnits="userSpaceOnUse" x1="1176.7" y1="0" x2="1673.4" y2="0"><stop offset="0.000" stop-color="#009962"/><stop offset="0.413" stop-color="#02994c"/><stop offset="0.587" stop-color="#7f993b"/><stop offset="0.619" stop-color="#999736"/><stop offset="0.714" stop-color="#995b19"/><stop offset="0.905" stop-color="#992800"/><stop offset="1.000" stop-color="#991b00"/></linearGradient><linearGradient id="t138" gradientUnits="userSpaceOnUse" x1="1376.2" y1="0" x2="1627.4" y2="0"><stop offset="0.000" stop-color="#00ff6b"/><stop offset="0.118" stop-color="#24ff63"/><stop offset="0.294" stop-color="#8fff54"/><stop offset="0.431" stop-color="#fff845"/><stop offset="0.549" stop-color="#ffa526"/><stop offset="0.725" stop-color="#ff610e"/><stop offset="1.000" stop-color="#ff2f00"/></linearGradient><linearGradient id="l139" gradientUnits="userSpaceOnUse" x1="1177.1" y1="0" x2="1676.0" y2="0"><stop offset="0.000" stop-color="#009964"/><stop offset="0.413" stop-color="#05994d"/><stop offset="0.571" stop-color="#76993e"/><stop offset="0.619" stop-color="#999136"/><stop offset="0.714" stop-color="#995719"/><stop offset="0.905" stop-color="#992600"/><stop offset="1.000" stop-color="#991a00"/></linearGradient><linearGradient id="t139" gradientUnits="userSpaceOnUse" x1="1375.5" y1="0" x2="1630.7" y2="0"><stop offset="0.000" stop-color="#00ff6f"/><stop offset="0.115" stop-color="#25ff66"/><stop offset="0.288" stop-color="#90ff58"/><stop offset="0.404" stop-color="#f4ff4d"/><stop offset="0.442" stop-color="#ffe541"/><stop offset="0.558" stop-color="#ff9924"/><stop offset="0.750" stop-color="#ff570c"/><stop offset="1.000" stop-color="#ff2c00"/></linearGradient><linearGradient id="l140" gradientUnits="userSpaceOnUse" x1="1177.5" y1="0" x2="1678.6" y2="0"><stop offset="0.000" stop-color="#009965"/><stop offset="0.397" stop-color="#009950"/><stop offset="0.556" stop-color="#6e9942"/><stop offset="0.603" stop-color="#99993c"/><stop offset="0.698" stop-color="#995b1c"/><stop offset="0.889" stop-color="#992701"/><stop offset="1.000" stop-color="#991800"/></linearGradient><linearGradient id="t140" gradientUnits="userSpaceOnUse" x1="1374.8" y1="0" x2="1634.1" y2="0"><stop offset="0.000" stop-color="#00ff72"/><stop offset="0.115" stop-color="#26ff6a"/><stop offset="0.269" stop-color="#86ff5d"/><stop offset="0.404" stop-color="#feff50"/><stop offset="0.519" stop-color="#ffa72c"/><stop offset="0.692" stop-color="#ff6111"/><stop offset="1.000" stop-color="#ff2900"/></linearGradient><linearGradient id="l141" gradientUnits="userSpaceOnUse" x1="1177.9" y1="0" x2="1681.2" y2="0"><stop offset="0.000" stop-color="#009966"/><stop offset="0.397" stop-color="#009952"/><stop offset="0.556" stop-color="#739944"/><stop offset="0.603" stop-color="#99933c"/><stop offset="0.698" stop-color="#99571c"/><stop offset="0.889" stop-color="#992601"/><stop offset="1.000" stop-color="#991700"/></linearGradient><linearGradient id="t141" gradientUnits="userSpaceOnUse" x1="1374.0" y1="0" x2="1637.4" y2="0"><stop offset="0.000" stop-color="#00ff75"/><stop offset="0.094" stop-color="#1dff6f"/><stop offset="0.245" stop-color="#79ff62"/><stop offset="0.396" stop-color="#fffe54"/><stop offset="0.491" stop-color="#ffb133"/><stop offset="0.642" stop-color="#ff6c17"/><stop offset="0.906" stop-color="#ff3302"/><stop offset="1.000" stop-color="#ff2700"/></linearGradient><linearGradient id="l142" gradientUnits="userSpaceOnUse" x1="1178.3" y1="0" x2="1683.9" y2="0"><stop offset="0.000" stop-color="#009968"/><stop offset="0.391" stop-color="#009954"/><stop offset="0.547" stop-color="#719946"/><stop offset="0.594" stop-color="#99953f"/><stop offset="0.688" stop-color="#99591e"/><stop offset="0.875" stop-color="#992603"/><stop offset="1.000" stop-color="#991600"/></linearGradient><linearGradient id="t142" gradientUnits="userSpaceOnUse" x1="1373.3" y1="0" x2="1640.7" y2="0"><stop offset="0.000" stop-color="#00ff79"/><stop offset="0.093" stop-color="#1dff72"/><stop offset="0.241" stop-color="#7aff66"/><stop offset="0.389" stop-color="#fffc57"/><stop offset="0.481" stop-color="#ffaf35"/><stop offset="0.630" stop-color="#ff6b18"/><stop offset="0.889" stop-color="#ff3203"/><stop offset="1.000" stop-color="#ff2400"/></linearGradient><linearGradient id="l143" gradientUnits="userSpaceOnUse" x1="1178.7" y1="0" x2="1686.5" y2="0"><stop offset="0.000" stop-color="#009969"/><stop offset="0.391" stop-color="#019956"/><stop offset="0.547" stop-color="#769948"/><stop offset="0.578" stop-color="#949945"/><stop offset="0.687" stop-color="#99551e"/><stop offset="0.875" stop-color="#992503"/><stop offset="1.000" stop-color="#991500"/></linearGradient><linearGradient id="t143" gradientUnits="userSpaceOnUse" x1="1372.6" y1="0" x2="1644.0" y2="0"><stop offset="0.000" stop-color="#00ff7d"/><stop offset="0.091" stop-color="#1dff76"/><stop offset="0.236" stop-color="#7aff6a"/><stop offset="0.382" stop-color="#fffa5a"/><stop offset="0.473" stop-color="#ffae38"/><stop offset="0.618" stop-color="#ff6a1a"/><stop offset="0.873" stop-color="#ff3104"/><stop offset="1.000" stop-color="#ff2200"/></linearGradient><linearGradient id="l144" gradientUnits="userSpaceOnUse" x1="1179.2" y1="0" x2="1689.1" y2="0"><stop offset="0.000" stop-color="#00996b"/><stop offset="0.391" stop-color="#049957"/><stop offset="0.547" stop-color="#7c994a"/><stop offset="0.578" stop-color="#999846"/><stop offset="0.672" stop-color="#995922"/><stop offset="0.844" stop-color="#992806"/><stop offset="1.000" stop-color="#991300"/></linearGradient><linearGradient id="t144" gradientUnits="userSpaceOnUse" x1="1371.8" y1="0" x2="1647.3" y2="0"><stop offset="0.000" stop-color="#00ff80"/><stop offset="0.089" stop-color="#1eff7a"/><stop offset="0.232" stop-color="#7bff6e"/><stop offset="0.375" stop-color="#fff85e"/><stop offset="0.464" stop-color="#ffac3a"/><stop offset="0.607" stop-color="#ff691c"/><stop offset="0.857" stop-color="#ff3105"/><stop offset="1.000" stop-color="#ff2000"/></linearGradient><linearGradient id="l145" gradientUnits="userSpaceOnUse" x1="1179.6" y1="0" x2="1691.7" y2="0"><stop offset="0.000" stop-color="#00996c"/><stop offset="0.385" stop-color="#03995a"/><stop offset="0.538" stop-color="#7a994d"/><stop offset="0.569" stop-color="#98994a"/><stop offset="0.662" stop-color="#995a24"/><stop offset="0.831" stop-color="#992907"/><stop offset="1.000" stop-color="#991200"/></linearGradient><linearGradient id="t145" gradientUnits="userSpaceOnUse" x1="1371.1" y1="0" x2="1650.6" y2="0"><stop offset="0.000" stop-color="#00ff84"/><stop offset="0.089" stop-color="#1fff7e"/><stop offset="0.232" stop-color="#80ff72"/><stop offset="0.357" stop-color="#fcff66"/><stop offset="0.464" stop-color="#ffa53a"/><stop offset="0.607" stop-color="#ff641c"/><stop offset="0.857" stop-color="#ff2e05"/><stop offset="1.000" stop-color="#ff1d00"/></linearGradient><linearGradient id="l146" gradientUnits="userSpaceOnUse" x1="1180.0" y1="0" x2="1694.4" y2="0"><stop offset="0.000" stop-color="#00996e"/><stop offset="0.385" stop-color="#05995c"/><stop offset="0.538" stop-color="#7f994f"/><stop offset="0.569" stop-color="#999449"/><stop offset="0.662" stop-color="#995724"/><stop offset="0.846" stop-color="#992406"/><stop offset="1.000" stop-color="#991100"/></linearGradient><linearGradient id="t146" gradientUnits="userSpaceOnUse" x1="1370.4" y1="0" x2="1653.9" y2="0"><stop offset="0.000" stop-color="#00ff88"/><stop offset="0.088" stop-color="#1fff82"/><stop offset="0.228" stop-color="#81ff77"/><stop offset="0.351" stop-color="#feff6b"/><stop offset="0.439" stop-color="#ffb043"/><stop offset="0.579" stop-color="#ff6920"/><stop offset="0.825" stop-color="#ff3006"/><stop offset="1.000" stop-color="#ff1b00"/></linearGradient><linearGradient id="l147" gradientUnits="userSpaceOnUse" x1="1180.4" y1="0" x2="1697.0" y2="0"><stop offset="0.000" stop-color="#009970"/><stop offset="0.369" stop-color="#00995f"/><stop offset="0.508" stop-color="#689954"/><stop offset="0.554" stop-color="#95994f"/><stop offset="0.662" stop-color="#995324"/><stop offset="0.846" stop-color="#992306"/><stop offset="1.000" stop-color="#991000"/></linearGradient><linearGradient id="t147" gradientUnits="userSpaceOnUse" x1="1369.7" y1="0" x2="1657.2" y2="0"><stop offset="0.000" stop-color="#00ff8c"/><stop offset="0.086" stop-color="#1fff86"/><stop offset="0.224" stop-color="#82ff7b"/><stop offset="0.345" stop-color="#fffe6f"/><stop offset="0.431" stop-color="#ffae45"/><stop offset="0.569" stop-color="#ff6822"/><stop offset="0.810" stop-color="#ff2f07"/><stop offset="1.000" stop-color="#ff1900"/></linearGradient><linearGradient id="l148" gradientUnits="userSpaceOnUse" x1="1180.9" y1="0" x2="1699.7" y2="0"><stop offset="0.000" stop-color="#009971"/><stop offset="0.369" stop-color="#009961"/><stop offset="0.523" stop-color="#7c9955"/><stop offset="0.554" stop-color="#999750"/><stop offset="0.631" stop-color="#995e2d"/><stop offset="0.785" stop-color="#992c0d"/><stop offset="1.000" stop-color="#990f00"/></linearGradient><linearGradient id="t148" gradientUnits="userSpaceOnUse" x1="1368.9" y1="0" x2="1660.5" y2="0"><stop offset="0.000" stop-color="#00ff90"/><stop offset="0.085" stop-color="#1fff8a"/><stop offset="0.220" stop-color="#83ff80"/><stop offset="0.339" stop-color="#fffc73"/><stop offset="0.424" stop-color="#ffac48"/><stop offset="0.559" stop-color="#ff6724"/><stop offset="0.797" stop-color="#ff2e08"/><stop offset="1.000" stop-color="#ff1700"/></linearGradient><linearGradient id="l149" gradientUnits="userSpaceOnUse" x1="1181.3" y1="0" x2="1702.3" y2="0"><stop offset="0.000" stop-color="#009973"/><stop offset="0.364" stop-color="#009963"/><stop offset="0.500" stop-color="#6b9959"/><stop offset="0.545" stop-color="#999955"/><stop offset="0.621" stop-color="#995f2f"/><stop offset="0.773" stop-color="#992d0f"/><stop offset="1.000" stop-color="#990e00"/></linearGradient><linearGradient id="t149" gradientUnits="userSpaceOnUse" x1="1368.2" y1="0" x2="1663.9" y2="0"><stop offset="0.000" stop-color="#00ff95"/><stop offset="0.083" stop-color="#1fff8f"/><stop offset="0.217" stop-color="#84ff84"/><stop offset="0.333" stop-color="#fff976"/><stop offset="0.417" stop-color="#ffaa4b"/><stop offset="0.550" stop-color="#ff6526"/><stop offset="0.783" stop-color="#ff2e09"/><stop offset="1.000" stop-color="#ff1500"/></linearGradient><linearGradient id="l150" gradientUnits="userSpaceOnUse" x1="1181.7" y1="0" x2="1704.9" y2="0"><stop offset="0.000" stop-color="#009974"/><stop offset="0.364" stop-color="#029965"/><stop offset="0.515" stop-color="#80995a"/><stop offset="0.545" stop-color="#999253"/><stop offset="0.636" stop-color="#99542a"/><stop offset="0.818" stop-color="#992209"/><stop offset="1.000" stop-color="#990d00"/></linearGradient><linearGradient id="t150" gradientUnits="userSpaceOnUse" x1="1367.5" y1="0" x2="1667.2" y2="0"><stop offset="0.000" stop-color="#00ff99"/><stop offset="0.083" stop-color="#21ff93"/><stop offset="0.217" stop-color="#89ff89"/><stop offset="0.317" stop-color="#f9ff7f"/><stop offset="0.417" stop-color="#ffa44b"/><stop offset="0.550" stop-color="#ff6126"/><stop offset="0.783" stop-color="#ff2b09"/><stop offset="1.000" stop-color="#ff1400"/></linearGradient><linearGradient id="l151" gradientUnits="userSpaceOnUse" x1="1182.2" y1="0" x2="1707.6" y2="0"><stop offset="0.000" stop-color="#009976"/><stop offset="0.364" stop-color="#049967"/><stop offset="0.500" stop-color="#76995e"/><stop offset="0.530" stop-color="#96995b"/><stop offset="0.621" stop-color="#99582f"/><stop offset="0.788" stop-color="#99260d"/><stop offset="1.000" stop-color="#990c00"/></linearGradient><linearGradient id="t151" gradientUnits="userSpaceOnUse" x1="1366.7" y1="0" x2="1670.5" y2="0"><stop offset="0.000" stop-color="#00ff9d"/><stop offset="0.082" stop-color="#21ff98"/><stop offset="0.213" stop-color="#8aff8e"/><stop offset="0.311" stop-color="#fbff85"/><stop offset="0.410" stop-color="#ffa24e"/><stop offset="0.541" stop-color="#ff6027"/><stop offset="0.770" stop-color="#ff2a0a"/><stop offset="1.000" stop-color="#ff1200"/></linearGradient><linearGradient id="l152" gradientUnits="userSpaceOnUse" x1="1182.7" y1="0" x2="1710.2" y2="0"><stop offset="0.000" stop-color="#009978"/><stop offset="0.348" stop-color="#00996a"/><stop offset="0.470" stop-color="#5e9962"/><stop offset="0.530" stop-color="#99955b"/><stop offset="0.606" stop-color="#995c33"/><stop offset="0.758" stop-color="#992a11"/><stop offset="1.000" stop-color="#990b00"/></linearGradient><linearGradient id="t152" gradientUnits="userSpaceOnUse" x1="1366.0" y1="0" x2="1673.8" y2="0"><stop offset="0.000" stop-color="#00ffa2"/><stop offset="0.081" stop-color="#21ff9d"/><stop offset="0.210" stop-color="#8bff93"/><stop offset="0.306" stop-color="#feff8a"/><stop offset="0.387" stop-color="#ffac58"/><stop offset="0.516" stop-color="#ff652d"/><stop offset="0.742" stop-color="#ff2c0c"/><stop offset="1.000" stop-color="#ff1000"/></linearGradient><linearGradient id="l153" gradientUnits="userSpaceOnUse" x1="1183.1" y1="0" x2="1712.9" y2="0"><stop offset="0.000" stop-color="#00997a"/><stop offset="0.358" stop-color="#06996c"/><stop offset="0.493" stop-color="#7a9963"/><stop offset="0.522" stop-color="#999760"/><stop offset="0.597" stop-color="#995d36"/><stop offset="0.746" stop-color="#992a12"/><stop offset="1.000" stop-color="#990a00"/></linearGradient><linearGradient id="t153" gradientUnits="userSpaceOnUse" x1="1365.3" y1="0" x2="1677.1" y2="0"><stop offset="0.000" stop-color="#00ffa6"/><stop offset="0.079" stop-color="#21ffa1"/><stop offset="0.190" stop-color="#7cff99"/><stop offset="0.302" stop-color="#fffe8f"/><stop offset="0.381" stop-color="#ffaa5b"/><stop offset="0.508" stop-color="#ff632f"/><stop offset="0.730" stop-color="#ff2b0d"/><stop offset="1.000" stop-color="#ff0f00"/></linearGradient><linearGradient id="l154" gradientUnits="userSpaceOnUse" x1="1183.6" y1="0" x2="1715.5" y2="0"><stop offset="0.000" stop-color="#00997b"/><stop offset="0.343" stop-color="#00996f"/><stop offset="0.463" stop-color="#619968"/><stop offset="0.522" stop-color="#99915e"/><stop offset="0.612" stop-color="#995230"/><stop offset="0.791" stop-color="#99200c"/><stop offset="1.000" stop-color="#990900"/></linearGradient><linearGradient id="t154" gradientUnits="userSpaceOnUse" x1="1364.5" y1="0" x2="1680.4" y2="0"><stop offset="0.000" stop-color="#00ffab"/><stop offset="0.078" stop-color="#22ffa6"/><stop offset="0.187" stop-color="#7dff9f"/><stop offset="0.297" stop-color="#fffb93"/><stop offset="0.375" stop-color="#ffa95e"/><stop offset="0.500" stop-color="#ff6231"/><stop offset="0.719" stop-color="#ff2a0e"/><stop offset="1.000" stop-color="#ff0d00"/></linearGradient><linearGradient id="l155" gradientUnits="userSpaceOnUse" x1="1184.1" y1="0" x2="1718.1" y2="0"><stop offset="0.000" stop-color="#00997d"/><stop offset="0.343" stop-color="#009971"/><stop offset="0.478" stop-color="#76996a"/><stop offset="0.507" stop-color="#979967"/><stop offset="0.582" stop-color="#995e3b"/><stop offset="0.731" stop-color="#992a15"/><stop offset="1.000" stop-color="#990800"/></linearGradient><linearGradient id="t155" gradientUnits="userSpaceOnUse" x1="1363.8" y1="0" x2="1683.7" y2="0"><stop offset="0.000" stop-color="#00ffb0"/><stop offset="0.078" stop-color="#23ffab"/><stop offset="0.187" stop-color="#82ffa4"/><stop offset="0.281" stop-color="#f6ff9c"/><stop offset="0.328" stop-color="#ffcd7a"/><stop offset="0.422" stop-color="#ff8349"/><stop offset="0.578" stop-color="#ff4520"/><stop offset="0.875" stop-color="#ff1504"/><stop offset="1.000" stop-color="#ff0c00"/></linearGradient><linearGradient id="l156" gradientUnits="userSpaceOnUse" x1="1184.5" y1="0" x2="1720.8" y2="0"><stop offset="0.000" stop-color="#00997f"/><stop offset="0.338" stop-color="#009974"/><stop offset="0.471" stop-color="#74996d"/><stop offset="0.500" stop-color="#95996b"/><stop offset="0.588" stop-color="#995638"/><stop offset="0.750" stop-color="#992412"/><stop offset="1.000" stop-color="#990700"/></linearGradient><linearGradient id="t156" gradientUnits="userSpaceOnUse" x1="1363.1" y1="0" x2="1687.0" y2="0"><stop offset="0.000" stop-color="#00ffb5"/><stop offset="0.062" stop-color="#19ffb2"/><stop offset="0.169" stop-color="#73ffab"/><stop offset="0.277" stop-color="#f8ffa2"/><stop offset="0.369" stop-color="#ffa061"/><stop offset="0.492" stop-color="#ff5c33"/><stop offset="0.708" stop-color="#ff2710"/><stop offset="1.000" stop-color="#ff0a00"/></linearGradient><linearGradient id="l157" gradientUnits="userSpaceOnUse" x1="1185.0" y1="0" x2="1723.4" y2="0"><stop offset="0.000" stop-color="#009981"/><stop offset="0.338" stop-color="#029977"/><stop offset="0.471" stop-color="#7a9970"/><stop offset="0.500" stop-color="#99966b"/><stop offset="0.574" stop-color="#995b3d"/><stop offset="0.721" stop-color="#992816"/><stop offset="1.000" stop-color="#990600"/></linearGradient><linearGradient id="t157" gradientUnits="userSpaceOnUse" x1="1362.3" y1="0" x2="1690.3" y2="0"><stop offset="0.000" stop-color="#00ffba"/><stop offset="0.061" stop-color="#19ffb7"/><stop offset="0.167" stop-color="#74ffb0"/><stop offset="0.273" stop-color="#fbffa9"/><stop offset="0.348" stop-color="#ffab6c"/><stop offset="0.455" stop-color="#ff683d"/><stop offset="0.636" stop-color="#ff3118"/><stop offset="1.000" stop-color="#ff0900"/></linearGradient><linearGradient id="l158" gradientUnits="userSpaceOnUse" x1="1185.5" y1="0" x2="1726.1" y2="0"><stop offset="0.000" stop-color="#009983"/><stop offset="0.338" stop-color="#059979"/><stop offset="0.471" stop-color="#819973"/><stop offset="0.500" stop-color="#998f69"/><stop offset="0.574" stop-color="#99573d"/><stop offset="0.721" stop-color="#992616"/><stop offset="1.000" stop-color="#990500"/></linearGradient><linearGradient id="t158" gradientUnits="userSpaceOnUse" x1="1361.6" y1="0" x2="1693.6" y2="0"><stop offset="0.000" stop-color="#00ffbf"/><stop offset="0.060" stop-color="#19ffbc"/><stop offset="0.164" stop-color="#75ffb6"/><stop offset="0.269" stop-color="#feffaf"/><stop offset="0.343" stop-color="#ffa970"/><stop offset="0.448" stop-color="#ff6740"/><stop offset="0.642" stop-color="#ff2d17"/><stop offset="1.000" stop-color="#ff0800"/></linearGradient><linearGradient id="l159" gradientUnits="userSpaceOnUse" x1="1186.0" y1="0" x2="1728.7" y2="0"><stop offset="0.000" stop-color="#009985"/><stop offset="0.324" stop-color="#00997c"/><stop offset="0.426" stop-color="#579978"/><stop offset="0.485" stop-color="#999975"/><stop offset="0.559" stop-color="#995b43"/><stop offset="0.706" stop-color="#992819"/><stop offset="1.000" stop-color="#990400"/></linearGradient><linearGradient id="t159" gradientUnits="userSpaceOnUse" x1="1360.9" y1="0" x2="1697.0" y2="0"><stop offset="0.000" stop-color="#00ffc5"/><stop offset="0.059" stop-color="#19ffc2"/><stop offset="0.162" stop-color="#76ffbd"/><stop offset="0.265" stop-color="#fffdb5"/><stop offset="0.338" stop-color="#ffa773"/><stop offset="0.441" stop-color="#ff6542"/><stop offset="0.632" stop-color="#ff2c18"/><stop offset="1.000" stop-color="#ff0700"/></linearGradient><linearGradient id="l160" gradientUnits="userSpaceOnUse" x1="1186.5" y1="0" x2="1731.3" y2="0"><stop offset="0.000" stop-color="#009987"/><stop offset="0.333" stop-color="#07997f"/><stop offset="0.464" stop-color="#859979"/><stop offset="0.478" stop-color="#979978"/><stop offset="0.551" stop-color="#995c46"/><stop offset="0.681" stop-color="#992b1d"/><stop offset="0.971" stop-color="#990500"/><stop offset="1.000" stop-color="#990300"/></linearGradient><linearGradient id="t160" gradientUnits="userSpaceOnUse" x1="1360.2" y1="0" x2="1700.3" y2="0"><stop offset="0.000" stop-color="#00ffca"/><stop offset="0.058" stop-color="#1affc8"/><stop offset="0.159" stop-color="#77ffc3"/><stop offset="0.261" stop-color="#fffab9"/><stop offset="0.333" stop-color="#ffa476"/><stop offset="0.435" stop-color="#ff6444"/><stop offset="0.623" stop-color="#ff2c1a"/><stop offset="1.000" stop-color="#ff0600"/></linearGradient><linearGradient id="l161" gradientUnits="userSpaceOnUse" x1="1187.0" y1="0" x2="1734.0" y2="0"><stop offset="0.000" stop-color="#009989"/><stop offset="0.319" stop-color="#009982"/><stop offset="0.435" stop-color="#6a997e"/><stop offset="0.478" stop-color="#999478"/><stop offset="0.551" stop-color="#995845"/><stop offset="0.696" stop-color="#99261a"/><stop offset="1.000" stop-color="#990200"/></linearGradient><linearGradient id="t161" gradientUnits="userSpaceOnUse" x1="1359.4" y1="0" x2="1703.6" y2="0"><stop offset="0.000" stop-color="#00ffd0"/><stop offset="0.058" stop-color="#1affce"/><stop offset="0.159" stop-color="#7bffc9"/><stop offset="0.246" stop-color="#f5ffc4"/><stop offset="0.275" stop-color="#ffdda8"/><stop offset="0.348" stop-color="#ff926d"/><stop offset="0.464" stop-color="#ff533b"/><stop offset="0.681" stop-color="#ff2012"/><stop offset="1.000" stop-color="#ff0500"/></linearGradient><linearGradient id="l162" gradientUnits="userSpaceOnUse" x1="1187.5" y1="0" x2="1736.7" y2="0"><stop offset="0.000" stop-color="#00998b"/><stop offset="0.319" stop-color="#019985"/><stop offset="0.435" stop-color="#709981"/><stop offset="0.464" stop-color="#939980"/><stop offset="0.551" stop-color="#995444"/><stop offset="0.696" stop-color="#99241a"/><stop offset="1.000" stop-color="#990200"/></linearGradient><linearGradient id="t162" gradientUnits="userSpaceOnUse" x1="1358.7" y1="0" x2="1706.9" y2="0"><stop offset="0.000" stop-color="#00ffd6"/><stop offset="0.057" stop-color="#1bffd4"/><stop offset="0.157" stop-color="#7dffd0"/><stop offset="0.243" stop-color="#f8ffcc"/><stop offset="0.329" stop-color="#ff9c7a"/><stop offset="0.443" stop-color="#ff5841"/><stop offset="0.643" stop-color="#ff2317"/><stop offset="1.000" stop-color="#ff0400"/></linearGradient><linearGradient id="l163" gradientUnits="userSpaceOnUse" x1="1187.9" y1="0" x2="1739.3" y2="0"><stop offset="0.000" stop-color="#00998d"/><stop offset="0.319" stop-color="#049988"/><stop offset="0.435" stop-color="#769984"/><stop offset="0.464" stop-color="#999882"/><stop offset="0.536" stop-color="#99594a"/><stop offset="0.667" stop-color="#992920"/><stop offset="0.971" stop-color="#990300"/><stop offset="1.000" stop-color="#990100"/></linearGradient><linearGradient id="t163" gradientUnits="userSpaceOnUse" x1="1358.0" y1="0" x2="1710.2" y2="0"><stop offset="0.000" stop-color="#00ffdc"/><stop offset="0.056" stop-color="#1bffda"/><stop offset="0.155" stop-color="#7effd7"/><stop offset="0.239" stop-color="#fbffd3"/><stop offset="0.310" stop-color="#ffa788"/><stop offset="0.408" stop-color="#ff634e"/><stop offset="0.577" stop-color="#ff2d21"/><stop offset="0.915" stop-color="#ff0702"/><stop offset="1.000" stop-color="#ff0300"/></linearGradient><linearGradient id="l164" gradientUnits="userSpaceOnUse" x1="1188.4" y1="0" x2="1742.0" y2="0"><stop offset="0.000" stop-color="#00998f"/><stop offset="0.314" stop-color="#03998b"/><stop offset="0.429" stop-color="#759988"/><stop offset="0.457" stop-color="#999987"/><stop offset="0.529" stop-color="#99594e"/><stop offset="0.657" stop-color="#992922"/><stop offset="0.957" stop-color="#990300"/><stop offset="1.000" stop-color="#990000"/></linearGradient><linearGradient id="t164" gradientUnits="userSpaceOnUse" x1="1357.2" y1="0" x2="1713.5" y2="0"><stop offset="0.000" stop-color="#00ffe2"/><stop offset="0.056" stop-color="#1bffe1"/><stop offset="0.153" stop-color="#7fffde"/><stop offset="0.236" stop-color="#feffdb"/><stop offset="0.292" stop-color="#ffb398"/><stop offset="0.375" stop-color="#ff705e"/><stop offset="0.528" stop-color="#ff352a"/><stop offset="0.819" stop-color="#ff0c07"/><stop offset="1.000" stop-color="#ff0200"/></linearGradient><linearGradient id="l165" gradientUnits="userSpaceOnUse" x1="1188.9" y1="0" x2="1744.6" y2="0"><stop offset="0.000" stop-color="#009991"/><stop offset="0.314" stop-color="#06998e"/><stop offset="0.429" stop-color="#7b998c"/><stop offset="0.457" stop-color="#999285"/><stop offset="0.529" stop-color="#99554d"/><stop offset="0.671" stop-color="#99241e"/><stop offset="0.986" stop-color="#990000"/><stop offset="1.000" stop-color="#990000"/></linearGradient><linearGradient id="t165" gradientUnits="userSpaceOnUse" x1="1356.5" y1="0" x2="1716.8" y2="0"><stop offset="0.000" stop-color="#00ffe8"/><stop offset="0.055" stop-color="#1bffe7"/><stop offset="0.151" stop-color="#81ffe5"/><stop offset="0.233" stop-color="#fffde1"/><stop offset="0.288" stop-color="#ffb09b"/><stop offset="0.384" stop-color="#ff6759"/><stop offset="0.548" stop-color="#ff2e26"/><stop offset="0.877" stop-color="#ff0704"/><stop offset="1.000" stop-color="#ff0100"/></linearGradient><linearGradient id="l166" gradientUnits="userSpaceOnUse" x1="1189.5" y1="0" x2="1747.3" y2="0"><stop offset="0.000" stop-color="#009993"/><stop offset="0.300" stop-color="#009991"/><stop offset="0.400" stop-color="#5f9990"/><stop offset="0.443" stop-color="#94998f"/><stop offset="0.514" stop-color="#995a54"/><stop offset="0.643" stop-color="#992824"/><stop offset="0.943" stop-color="#990200"/><stop offset="1.000" stop-color="#990000"/></linearGradient><linearGradient id="t166" gradientUnits="userSpaceOnUse" x1="1355.8" y1="0" x2="1720.1" y2="0"><stop offset="0.000" stop-color="#00ffef"/><stop offset="0.055" stop-color="#1cffee"/><stop offset="0.151" stop-color="#85ffed"/><stop offset="0.219" stop-color="#f1ffeb"/><stop offset="0.233" stop-color="#fff4e1"/><stop offset="0.288" stop-color="#ffaa9b"/><stop offset="0.384" stop-color="#ff6359"/><stop offset="0.548" stop-color="#ff2b26"/><stop offset="0.877" stop-color="#ff0604"/><stop offset="1.000" stop-color="#ff0100"/></linearGradient><linearGradient id="l167" gradientUnits="userSpaceOnUse" x1="1190.0" y1="0" x2="1749.9" y2="0"><stop offset="0.000" stop-color="#009995"/><stop offset="0.300" stop-color="#009994"/><stop offset="0.414" stop-color="#769994"/><stop offset="0.443" stop-color="#999691"/><stop offset="0.500" stop-color="#995f5b"/><stop offset="0.614" stop-color="#992d2b"/><stop offset="0.886" stop-color="#990504"/><stop offset="1.000" stop-color="#990000"/></linearGradient><linearGradient id="t167" gradientUnits="userSpaceOnUse" x1="1355.0" y1="0" x2="1723.4" y2="0"><stop offset="0.000" stop-color="#00fff5"/><stop offset="0.054" stop-color="#1dfff5"/><stop offset="0.135" stop-color="#74fff4"/><stop offset="0.216" stop-color="#f4fff4"/><stop offset="0.243" stop-color="#ffdbd1"/><stop offset="0.311" stop-color="#ff8e87"/><stop offset="0.419" stop-color="#ff4e4a"/><stop offset="0.622" stop-color="#ff1c1a"/><stop offset="1.000" stop-color="#ff0000"/></linearGradient><linearGradient id="l168" gradientUnits="userSpaceOnUse" x1="1190.5" y1="0" x2="1752.6" y2="0"><stop offset="0.000" stop-color="#009998"/><stop offset="0.296" stop-color="#009998"/><stop offset="0.408" stop-color="#759998"/><stop offset="0.437" stop-color="#999796"/><stop offset="0.493" stop-color="#99605f"/><stop offset="0.606" stop-color="#992e2d"/><stop offset="0.873" stop-color="#990505"/><stop offset="1.000" stop-color="#990000"/></linearGradient><linearGradient id="t168" gradientUnits="userSpaceOnUse" x1="1354.3" y1="0" x2="1724.8" y2="0"><stop offset="0.000" stop-color="#00fffc"/><stop offset="0.053" stop-color="#1dfffc"/><stop offset="0.133" stop-color="#75fffc"/><stop offset="0.213" stop-color="#f6fffc"/><stop offset="0.253" stop-color="#ffc6c4"/><stop offset="0.320" stop-color="#ff8281"/><stop offset="0.440" stop-color="#ff4443"/><stop offset="0.667" stop-color="#ff1514"/><stop offset="1.000" stop-color="#ff0000"/></linearGradient><linearGradient id="l169" gradientUnits="userSpaceOnUse" x1="1191.0" y1="0" x2="1755.2" y2="0"><stop offset="0.000" stop-color="#009899"/><stop offset="0.296" stop-color="#019799"/><stop offset="0.408" stop-color="#799699"/><stop offset="0.437" stop-color="#999093"/><stop offset="0.507" stop-color="#995355"/><stop offset="0.648" stop-color="#992123"/><stop offset="0.958" stop-color="#990000"/><stop offset="1.000" stop-color="#990000"/></linearGradient><linearGradient id="t169" gradientUnits="userSpaceOnUse" x1="1353.6" y1="0" x2="1722.4" y2="0"><stop offset="0.000" stop-color="#00fbff"/><stop offset="0.054" stop-color="#1dfaff"/><stop offset="0.135" stop-color="#76faff"/><stop offset="0.216" stop-color="#f7f9ff"/><stop offset="0.284" stop-color="#ffa1a5"/><stop offset="0.378" stop-color="#ff5d60"/><stop offset="0.541" stop-color="#ff282a"/><stop offset="0.865" stop-color="#ff0405"/><stop offset="1.000" stop-color="#ff0000"/></linearGradient><linearGradient id="l170" gradientUnits="userSpaceOnUse" x1="1191.6" y1="0" x2="1757.8" y2="0"><stop offset="0.000" stop-color="#009699"/><stop offset="0.296" stop-color="#049499"/><stop offset="0.408" stop-color="#7c9299"/><stop offset="0.437" stop-color="#998990"/><stop offset="0.507" stop-color="#994f54"/><stop offset="0.648" stop-color="#991f23"/><stop offset="0.958" stop-color="#990000"/><stop offset="1.000" stop-color="#990000"/></linearGradient><linearGradient id="t170" gradientUnits="userSpaceOnUse" x1="1352.9" y1="0" x2="1717.6" y2="0"><stop offset="0.000" stop-color="#00f4ff"/><stop offset="0.055" stop-color="#1df3ff"/><stop offset="0.137" stop-color="#74f2ff"/><stop offset="0.219" stop-color="#f4f0ff"/><stop offset="0.247" stop-color="#ffcedb"/><stop offset="0.315" stop-color="#ff858e"/><stop offset="0.425" stop-color="#ff484f"/><stop offset="0.630" stop-color="#ff191c"/><stop offset="1.000" stop-color="#ff0001"/></linearGradient><linearGradient id="l171" gradientUnits="userSpaceOnUse" x1="1192.1" y1="0" x2="1760.4" y2="0"><stop offset="0.000" stop-color="#009399"/><stop offset="0.292" stop-color="#049099"/><stop offset="0.403" stop-color="#788e99"/><stop offset="0.431" stop-color="#998a95"/><stop offset="0.500" stop-color="#994f57"/><stop offset="0.639" stop-color="#992024"/><stop offset="0.944" stop-color="#990000"/><stop offset="1.000" stop-color="#990000"/></linearGradient><linearGradient id="t171" gradientUnits="userSpaceOnUse" x1="1352.1" y1="0" x2="1712.9" y2="0"><stop offset="0.000" stop-color="#00edff"/><stop offset="0.055" stop-color="#1cecff"/><stop offset="0.151" stop-color="#82eaff"/><stop offset="0.233" stop-color="#ffe3fa"/><stop offset="0.288" stop-color="#ff9dae"/><stop offset="0.384" stop-color="#ff5a66"/><stop offset="0.548" stop-color="#ff262d"/><stop offset="0.877" stop-color="#ff0407"/><stop offset="1.000" stop-color="#ff0001"/></linearGradient><linearGradient id="l172" gradientUnits="userSpaceOnUse" x1="1192.6" y1="0" x2="1763.1" y2="0"><stop offset="0.000" stop-color="#009199"/><stop offset="0.292" stop-color="#068d99"/><stop offset="0.403" stop-color="#7b8a99"/><stop offset="0.431" stop-color="#998392"/><stop offset="0.500" stop-color="#994c56"/><stop offset="0.639" stop-color="#991e24"/><stop offset="0.931" stop-color="#990001"/><stop offset="1.000" stop-color="#990000"/></linearGradient><linearGradient id="t172" gradientUnits="userSpaceOnUse" x1="1351.4" y1="0" x2="1708.1" y2="0"><stop offset="0.000" stop-color="#00e7ff"/><stop offset="0.056" stop-color="#1ce5ff"/><stop offset="0.153" stop-color="#81e2ff"/><stop offset="0.236" stop-color="#ffddfd"/><stop offset="0.292" stop-color="#ff99b0"/><stop offset="0.389" stop-color="#ff5767"/><stop offset="0.556" stop-color="#ff252e"/><stop offset="0.889" stop-color="#ff0307"/><stop offset="1.000" stop-color="#ff0002"/></linearGradient><linearGradient id="l173" gradientUnits="userSpaceOnUse" x1="1193.1" y1="0" x2="1765.7" y2="0"><stop offset="0.000" stop-color="#008f99"/><stop offset="0.278" stop-color="#008a99"/><stop offset="0.375" stop-color="#5d8799"/><stop offset="0.417" stop-color="#918699"/><stop offset="0.472" stop-color="#995967"/><stop offset="0.583" stop-color="#992932"/><stop offset="0.833" stop-color="#990409"/><stop offset="1.000" stop-color="#990000"/></linearGradient><linearGradient id="t173" gradientUnits="userSpaceOnUse" x1="1350.7" y1="0" x2="1703.3" y2="0"><stop offset="0.000" stop-color="#00e1ff"/><stop offset="0.056" stop-color="#1bdfff"/><stop offset="0.155" stop-color="#7fdbff"/><stop offset="0.239" stop-color="#fed8ff"/><stop offset="0.296" stop-color="#ff95b3"/><stop offset="0.380" stop-color="#ff5c71"/><stop offset="0.535" stop-color="#ff2936"/><stop offset="0.831" stop-color="#ff060c"/><stop offset="1.000" stop-color="#ff0003"/></linearGradient><linearGradient id="l174" gradientUnits="userSpaceOnUse" x1="1193.7" y1="0" x2="1768.3" y2="0"><stop offset="0.000" stop-color="#008d99"/><stop offset="0.278" stop-color="#008799"/><stop offset="0.389" stop-color="#708399"/><stop offset="0.417" stop-color="#948299"/><stop offset="0.500" stop-color="#994554"/><stop offset="0.639" stop-color="#991a24"/><stop offset="0.931" stop-color="#990001"/><stop offset="1.000" stop-color="#990000"/></linearGradient><linearGradient id="t174" gradientUnits="userSpaceOnUse" x1="1349.9" y1="0" x2="1698.6" y2="0"><stop offset="0.000" stop-color="#00dbff"/><stop offset="0.057" stop-color="#1bd8ff"/><stop offset="0.157" stop-color="#7ed4ff"/><stop offset="0.243" stop-color="#fbd0ff"/><stop offset="0.314" stop-color="#ff85a7"/><stop offset="0.414" stop-color="#ff4c63"/><stop offset="0.586" stop-color="#ff1f2d"/><stop offset="0.929" stop-color="#ff0207"/><stop offset="1.000" stop-color="#ff0004"/></linearGradient><linearGradient id="l175" gradientUnits="userSpaceOnUse" x1="1194.2" y1="0" x2="1771.0" y2="0"><stop offset="0.000" stop-color="#008a99"/><stop offset="0.274" stop-color="#008499"/><stop offset="0.384" stop-color="#6d8099"/><stop offset="0.425" stop-color="#997791"/><stop offset="0.493" stop-color="#994557"/><stop offset="0.630" stop-color="#991a25"/><stop offset="0.918" stop-color="#990002"/><stop offset="1.000" stop-color="#990000"/></linearGradient><linearGradient id="t175" gradientUnits="userSpaceOnUse" x1="1349.2" y1="0" x2="1693.8" y2="0"><stop offset="0.000" stop-color="#00d5ff"/><stop offset="0.058" stop-color="#1bd2ff"/><stop offset="0.159" stop-color="#7dcdff"/><stop offset="0.246" stop-color="#f8c8ff"/><stop offset="0.333" stop-color="#ff779c"/><stop offset="0.449" stop-color="#ff4058"/><stop offset="0.652" stop-color="#ff1624"/><stop offset="1.000" stop-color="#ff0005"/></linearGradient><linearGradient id="l176" gradientUnits="userSpaceOnUse" x1="1194.8" y1="0" x2="1773.6" y2="0"><stop offset="0.000" stop-color="#008899"/><stop offset="0.274" stop-color="#028199"/><stop offset="0.397" stop-color="#817b99"/><stop offset="0.425" stop-color="#99718e"/><stop offset="0.493" stop-color="#994256"/><stop offset="0.630" stop-color="#991925"/><stop offset="0.904" stop-color="#990003"/><stop offset="1.000" stop-color="#990000"/></linearGradient><linearGradient id="t176" gradientUnits="userSpaceOnUse" x1="1348.5" y1="0" x2="1689.0" y2="0"><stop offset="0.000" stop-color="#00cfff"/><stop offset="0.058" stop-color="#1accff"/><stop offset="0.159" stop-color="#79c7ff"/><stop offset="0.246" stop-color="#efc2ff"/><stop offset="0.261" stop-color="#ffbbf7"/><stop offset="0.333" stop-color="#ff77a2"/><stop offset="0.449" stop-color="#ff405c"/><stop offset="0.652" stop-color="#ff1626"/><stop offset="1.000" stop-color="#ff0006"/></linearGradient><linearGradient id="l177" gradientUnits="userSpaceOnUse" x1="1195.3" y1="0" x2="1776.3" y2="0"><stop offset="0.000" stop-color="#008699"/><stop offset="0.274" stop-color="#057e99"/><stop offset="0.397" stop-color="#847899"/><stop offset="0.411" stop-color="#957799"/><stop offset="0.493" stop-color="#993e55"/><stop offset="0.630" stop-color="#991725"/><stop offset="0.904" stop-color="#990003"/><stop offset="1.000" stop-color="#990000"/></linearGradient><linearGradient id="t177" gradientUnits="userSpaceOnUse" x1="1347.7" y1="0" x2="1684.2" y2="0"><stop offset="0.000" stop-color="#00c9ff"/><stop offset="0.059" stop-color="#1ac6ff"/><stop offset="0.162" stop-color="#77c1ff"/><stop offset="0.265" stop-color="#ffb6fa"/><stop offset="0.338" stop-color="#ff74a4"/><stop offset="0.441" stop-color="#ff4264"/><stop offset="0.632" stop-color="#ff182c"/><stop offset="1.000" stop-color="#ff0007"/></linearGradient><linearGradient id="l178" gradientUnits="userSpaceOnUse" x1="1195.9" y1="0" x2="1778.9" y2="0"><stop offset="0.000" stop-color="#008499"/><stop offset="0.260" stop-color="#007c99"/><stop offset="0.356" stop-color="#567799"/><stop offset="0.411" stop-color="#987399"/><stop offset="0.479" stop-color="#99425c"/><stop offset="0.616" stop-color="#991828"/><stop offset="0.877" stop-color="#990006"/><stop offset="1.000" stop-color="#990000"/></linearGradient><linearGradient id="t178" gradientUnits="userSpaceOnUse" x1="1347.0" y1="0" x2="1679.5" y2="0"><stop offset="0.000" stop-color="#00c4ff"/><stop offset="0.060" stop-color="#19c1ff"/><stop offset="0.164" stop-color="#76baff"/><stop offset="0.269" stop-color="#ffb1fd"/><stop offset="0.343" stop-color="#ff71a7"/><stop offset="0.448" stop-color="#ff4065"/><stop offset="0.642" stop-color="#ff172d"/><stop offset="1.000" stop-color="#ff0008"/></linearGradient><linearGradient id="l179" gradientUnits="userSpaceOnUse" x1="1196.4" y1="0" x2="1781.6" y2="0"><stop offset="0.000" stop-color="#008299"/><stop offset="0.257" stop-color="#007999"/><stop offset="0.351" stop-color="#547499"/><stop offset="0.405" stop-color="#947099"/><stop offset="0.486" stop-color="#993b56"/><stop offset="0.622" stop-color="#991527"/><stop offset="0.878" stop-color="#990005"/><stop offset="1.000" stop-color="#990000"/></linearGradient><linearGradient id="t179" gradientUnits="userSpaceOnUse" x1="1346.3" y1="0" x2="1674.7" y2="0"><stop offset="0.000" stop-color="#00beff"/><stop offset="0.061" stop-color="#19bbff"/><stop offset="0.167" stop-color="#75b4ff"/><stop offset="0.273" stop-color="#feacff"/><stop offset="0.348" stop-color="#ff6da9"/><stop offset="0.455" stop-color="#ff3e67"/><stop offset="0.652" stop-color="#ff162e"/><stop offset="1.000" stop-color="#ff0009"/></linearGradient><linearGradient id="l180" gradientUnits="userSpaceOnUse" x1="1197.0" y1="0" x2="1784.2" y2="0"><stop offset="0.000" stop-color="#008099"/><stop offset="0.257" stop-color="#007699"/><stop offset="0.378" stop-color="#756f99"/><stop offset="0.405" stop-color="#976c99"/><stop offset="0.486" stop-color="#993856"/><stop offset="0.635" stop-color="#991224"/><stop offset="0.878" stop-color="#990006"/><stop offset="1.000" stop-color="#990000"/></linearGradient><linearGradient id="t180" gradientUnits="userSpaceOnUse" x1="1345.6" y1="0" x2="1669.9" y2="0"><stop offset="0.000" stop-color="#00b9ff"/><stop offset="0.062" stop-color="#19b5ff"/><stop offset="0.169" stop-color="#74aeff"/><stop offset="0.277" stop-color="#fba6ff"/><stop offset="0.354" stop-color="#ff6aab"/><stop offset="0.462" stop-color="#ff3c68"/><stop offset="0.646" stop-color="#ff1731"/><stop offset="1.000" stop-color="#ff000a"/></linearGradient><linearGradient id="l181" gradientUnits="userSpaceOnUse" x1="1197.5" y1="0" x2="1786.8" y2="0"><stop offset="0.000" stop-color="#007e99"/><stop offset="0.257" stop-color="#017399"/><stop offset="0.378" stop-color="#786b99"/><stop offset="0.405" stop-color="#996999"/><stop offset="0.473" stop-color="#993b5c"/><stop offset="0.608" stop-color="#991529"/><stop offset="0.851" stop-color="#990008"/><stop offset="1.000" stop-color="#990000"/></linearGradient><linearGradient id="t181" gradientUnits="userSpaceOnUse" x1="1344.8" y1="0" x2="1665.2" y2="0"><stop offset="0.000" stop-color="#00b4ff"/><stop offset="0.077" stop-color="#22afff"/><stop offset="0.185" stop-color="#80a8ff"/><stop offset="0.277" stop-color="#f3a0ff"/><stop offset="0.308" stop-color="#ff8be1"/><stop offset="0.385" stop-color="#ff5999"/><stop offset="0.508" stop-color="#ff2f5a"/><stop offset="0.738" stop-color="#ff0d24"/><stop offset="1.000" stop-color="#ff000c"/></linearGradient><linearGradient id="l182" gradientUnits="userSpaceOnUse" x1="1198.1" y1="0" x2="1789.5" y2="0"><stop offset="0.000" stop-color="#007c99"/><stop offset="0.257" stop-color="#037199"/><stop offset="0.378" stop-color="#7b6899"/><stop offset="0.405" stop-color="#996396"/><stop offset="0.473" stop-color="#99385b"/><stop offset="0.608" stop-color="#991329"/><stop offset="0.851" stop-color="#990008"/><stop offset="1.000" stop-color="#990000"/></linearGradient><linearGradient id="t182" gradientUnits="userSpaceOnUse" x1="1344.1" y1="0" x2="1660.4" y2="0"><stop offset="0.000" stop-color="#00afff"/><stop offset="0.078" stop-color="#22aaff"/><stop offset="0.188" stop-color="#7fa2ff"/><stop offset="0.297" stop-color="#ff94f8"/><stop offset="0.375" stop-color="#ff5ea6"/><stop offset="0.500" stop-color="#ff3161"/><stop offset="0.719" stop-color="#ff0f2a"/><stop offset="1.000" stop-color="#ff000d"/></linearGradient><linearGradient id="l183" gradientUnits="userSpaceOnUse" x1="1198.7" y1="0" x2="1792.1" y2="0"><stop offset="0.000" stop-color="#007a99"/><stop offset="0.253" stop-color="#036e99"/><stop offset="0.373" stop-color="#776599"/><stop offset="0.400" stop-color="#986399"/><stop offset="0.467" stop-color="#99385e"/><stop offset="0.600" stop-color="#99132b"/><stop offset="0.840" stop-color="#990009"/><stop offset="1.000" stop-color="#990000"/></linearGradient><linearGradient id="t183" gradientUnits="userSpaceOnUse" x1="1343.4" y1="0" x2="1655.6" y2="0"><stop offset="0.000" stop-color="#00aaff"/><stop offset="0.079" stop-color="#22a5ff"/><stop offset="0.190" stop-color="#7e9dff"/><stop offset="0.302" stop-color="#ff90fa"/><stop offset="0.381" stop-color="#ff5ba8"/><stop offset="0.508" stop-color="#ff2f62"/><stop offset="0.730" stop-color="#ff0d2b"/><stop offset="1.000" stop-color="#ff000e"/></linearGradient><linearGradient id="l184" gradientUnits="userSpaceOnUse" x1="1199.3" y1="0" x2="1794.7" y2="0"><stop offset="0.000" stop-color="#007899"/><stop offset="0.253" stop-color="#066b99"/><stop offset="0.373" stop-color="#7a6299"/><stop offset="0.400" stop-color="#995e97"/><stop offset="0.467" stop-color="#99355d"/><stop offset="0.600" stop-color="#99112b"/><stop offset="0.827" stop-color="#99000a"/><stop offset="1.000" stop-color="#990000"/></linearGradient><linearGradient id="t184" gradientUnits="userSpaceOnUse" x1="1342.6" y1="0" x2="1650.8" y2="0"><stop offset="0.000" stop-color="#00a5ff"/><stop offset="0.081" stop-color="#21a0ff"/><stop offset="0.194" stop-color="#7d97ff"/><stop offset="0.306" stop-color="#ff8cfd"/><stop offset="0.387" stop-color="#ff58aa"/><stop offset="0.516" stop-color="#ff2d63"/><stop offset="0.742" stop-color="#ff0c2b"/><stop offset="1.000" stop-color="#ff0010"/></linearGradient><linearGradient id="l185" gradientUnits="userSpaceOnUse" x1="1199.9" y1="0" x2="1797.4" y2="0"><stop offset="0.000" stop-color="#007699"/><stop offset="0.240" stop-color="#006a99"/><stop offset="0.347" stop-color="#5f6199"/><stop offset="0.400" stop-color="#995995"/><stop offset="0.467" stop-color="#99325c"/><stop offset="0.600" stop-color="#99102a"/><stop offset="0.827" stop-color="#99000a"/><stop offset="1.000" stop-color="#990000"/></linearGradient><linearGradient id="t185" gradientUnits="userSpaceOnUse" x1="1341.9" y1="0" x2="1646.1" y2="0"><stop offset="0.000" stop-color="#00a1ff"/><stop offset="0.082" stop-color="#219bff"/><stop offset="0.213" stop-color="#8c91ff"/><stop offset="0.311" stop-color="#fe87ff"/><stop offset="0.393" stop-color="#ff55ac"/><stop offset="0.525" stop-color="#ff2b65"/><stop offset="0.754" stop-color="#ff0b2c"/><stop offset="1.000" stop-color="#ff0012"/></linearGradient><linearGradient id="l186" gradientUnits="userSpaceOnUse" x1="1200.4" y1="0" x2="1800.1" y2="0"><stop offset="0.000" stop-color="#007499"/><stop offset="0.240" stop-color="#006799"/><stop offset="0.360" stop-color="#705d99"/><stop offset="0.400" stop-color="#995592"/><stop offset="0.480" stop-color="#992b54"/><stop offset="0.640" stop-color="#990922"/><stop offset="0.960" stop-color="#990001"/><stop offset="1.000" stop-color="#990000"/></linearGradient><linearGradient id="t186" gradientUnits="userSpaceOnUse" x1="1341.2" y1="0" x2="1641.3" y2="0"><stop offset="0.000" stop-color="#009cff"/><stop offset="0.082" stop-color="#2096ff"/><stop offset="0.213" stop-color="#878cff"/><stop offset="0.311" stop-color="#f583ff"/><stop offset="0.344" stop-color="#ff70e1"/><stop offset="0.443" stop-color="#ff4291"/><stop offset="0.607" stop-color="#ff1c4e"/><stop offset="0.902" stop-color="#ff021c"/><stop offset="1.000" stop-color="#ff0013"/></linearGradient><linearGradient id="l187" gradientUnits="userSpaceOnUse" x1="1201.0" y1="0" x2="1802.7" y2="0"><stop offset="0.000" stop-color="#007299"/><stop offset="0.237" stop-color="#006599"/><stop offset="0.368" stop-color="#7c5999"/><stop offset="0.395" stop-color="#995496"/><stop offset="0.461" stop-color="#992f5e"/><stop offset="0.592" stop-color="#990e2c"/><stop offset="0.816" stop-color="#99000b"/><stop offset="1.000" stop-color="#990000"/></linearGradient><linearGradient id="t187" gradientUnits="userSpaceOnUse" x1="1340.4" y1="0" x2="1636.5" y2="0"><stop offset="0.000" stop-color="#0098ff"/><stop offset="0.083" stop-color="#2092ff"/><stop offset="0.217" stop-color="#8687ff"/><stop offset="0.317" stop-color="#f37dff"/><stop offset="0.350" stop-color="#ff6ce3"/><stop offset="0.450" stop-color="#ff3f93"/><stop offset="0.600" stop-color="#ff1d54"/><stop offset="0.883" stop-color="#ff0320"/><stop offset="1.000" stop-color="#ff0015"/></linearGradient><linearGradient id="l188" gradientUnits="userSpaceOnUse" x1="1201.6" y1="0" x2="1805.3" y2="0"><stop offset="0.000" stop-color="#007099"/><stop offset="0.237" stop-color="#026299"/><stop offset="0.368" stop-color="#7f5699"/><stop offset="0.395" stop-color="#995093"/><stop offset="0.474" stop-color="#992855"/><stop offset="0.632" stop-color="#990823"/><stop offset="0.987" stop-color="#990000"/><stop offset="1.000" stop-color="#990000"/></linearGradient><linearGradient id="t188" gradientUnits="userSpaceOnUse" x1="1339.7" y1="0" x2="1631.8" y2="0"><stop offset="0.000" stop-color="#0093ff"/><stop offset="0.085" stop-color="#208dff"/><stop offset="0.220" stop-color="#8582ff"/><stop offset="0.339" stop-color="#ff73f8"/><stop offset="0.424" stop-color="#ff49aa"/><stop offset="0.559" stop-color="#ff2465"/><stop offset="0.797" stop-color="#ff082e"/><stop offset="1.000" stop-color="#ff0017"/></linearGradient><linearGradient id="l189" gradientUnits="userSpaceOnUse" x1="1202.3" y1="0" x2="1807.9" y2="0"><stop offset="0.000" stop-color="#006e99"/><stop offset="0.237" stop-color="#046099"/><stop offset="0.368" stop-color="#825399"/><stop offset="0.395" stop-color="#994b91"/><stop offset="0.474" stop-color="#992554"/><stop offset="0.632" stop-color="#990623"/><stop offset="0.987" stop-color="#990000"/><stop offset="1.000" stop-color="#990000"/></linearGradient><linearGradient id="t189" gradientUnits="userSpaceOnUse" x1="1339.0" y1="0" x2="1627.0" y2="0"><stop offset="0.000" stop-color="#008fff"/><stop offset="0.086" stop-color="#1f89ff"/><stop offset="0.224" stop-color="#837eff"/><stop offset="0.345" stop-color="#ff70fb"/><stop offset="0.431" stop-color="#ff46ac"/><stop offset="0.569" stop-color="#ff2266"/><stop offset="0.810" stop-color="#ff072e"/><stop offset="1.000" stop-color="#ff0019"/></linearGradient><linearGradient id="l190" gradientUnits="userSpaceOnUse" x1="1202.9" y1="0" x2="1808.0" y2="0"><stop offset="0.000" stop-color="#006c99"/><stop offset="0.237" stop-color="#065d99"/><stop offset="0.368" stop-color="#825099"/><stop offset="0.395" stop-color="#994891"/><stop offset="0.474" stop-color="#992455"/><stop offset="0.632" stop-color="#990523"/><stop offset="1.000" stop-color="#990000"/></linearGradient><linearGradient id="t190" gradientUnits="userSpaceOnUse" x1="1338.3" y1="0" x2="1622.2" y2="0"><stop offset="0.000" stop-color="#008bff"/><stop offset="0.088" stop-color="#1f85ff"/><stop offset="0.228" stop-color="#8279ff"/><stop offset="0.351" stop-color="#ff6cfd"/><stop offset="0.439" stop-color="#ff43ad"/><stop offset="0.579" stop-color="#ff2068"/><stop offset="0.825" stop-color="#ff062f"/><stop offset="1.000" stop-color="#ff001b"/></linearGradient><linearGradient id="l191" gradientUnits="userSpaceOnUse" x1="1203.5" y1="0" x2="1802.8" y2="0"><stop offset="0.000" stop-color="#006a99"/><stop offset="0.227" stop-color="#005c99"/><stop offset="0.347" stop-color="#685099"/><stop offset="0.387" stop-color="#944b99"/><stop offset="0.480" stop-color="#992154"/><stop offset="0.640" stop-color="#990423"/><stop offset="1.000" stop-color="#990000"/></linearGradient><linearGradient id="t191" gradientUnits="userSpaceOnUse" x1="1337.5" y1="0" x2="1617.4" y2="0"><stop offset="0.000" stop-color="#0087ff"/><stop offset="0.089" stop-color="#1f81ff"/><stop offset="0.232" stop-color="#8175ff"/><stop offset="0.357" stop-color="#ff68ff"/><stop offset="0.446" stop-color="#ff40af"/><stop offset="0.589" stop-color="#ff1f69"/><stop offset="0.839" stop-color="#ff0530"/><stop offset="1.000" stop-color="#ff001d"/></linearGradient><linearGradient id="l192" gradientUnits="userSpaceOnUse" x1="1204.1" y1="0" x2="1797.1" y2="0"><stop offset="0.000" stop-color="#006899"/><stop offset="0.227" stop-color="#005a99"/><stop offset="0.347" stop-color="#654e99"/><stop offset="0.400" stop-color="#994492"/><stop offset="0.480" stop-color="#992156"/><stop offset="0.640" stop-color="#990425"/><stop offset="1.000" stop-color="#990000"/></linearGradient><linearGradient id="t192" gradientUnits="userSpaceOnUse" x1="1336.8" y1="0" x2="1612.7" y2="0"><stop offset="0.000" stop-color="#0083ff"/><stop offset="0.089" stop-color="#1e7dff"/><stop offset="0.232" stop-color="#7d71ff"/><stop offset="0.357" stop-color="#f664ff"/><stop offset="0.411" stop-color="#ff4ed2"/><stop offset="0.536" stop-color="#ff2983"/><stop offset="0.732" stop-color="#ff0d46"/><stop offset="1.000" stop-color="#ff001f"/></linearGradient><linearGradient id="l193" gradientUnits="userSpaceOnUse" x1="1204.7" y1="0" x2="1791.5" y2="0"><stop offset="0.000" stop-color="#006699"/><stop offset="0.230" stop-color="#005799"/><stop offset="0.365" stop-color="#754a99"/><stop offset="0.405" stop-color="#994090"/><stop offset="0.486" stop-color="#991f56"/><stop offset="0.649" stop-color="#990325"/><stop offset="1.000" stop-color="#990001"/></linearGradient><linearGradient id="t193" gradientUnits="userSpaceOnUse" x1="1336.1" y1="0" x2="1607.9" y2="0"><stop offset="0.000" stop-color="#007fff"/><stop offset="0.091" stop-color="#1e79ff"/><stop offset="0.236" stop-color="#7c6cff"/><stop offset="0.364" stop-color="#f360ff"/><stop offset="0.400" stop-color="#ff52e4"/><stop offset="0.509" stop-color="#ff2f96"/><stop offset="0.691" stop-color="#ff1153"/><stop offset="1.000" stop-color="#ff0021"/></linearGradient><linearGradient id="l194" gradientUnits="userSpaceOnUse" x1="1205.4" y1="0" x2="1785.8" y2="0"><stop offset="0.000" stop-color="#006599"/><stop offset="0.233" stop-color="#025599"/><stop offset="0.370" stop-color="#784799"/><stop offset="0.397" stop-color="#954399"/><stop offset="0.493" stop-color="#991d55"/><stop offset="0.658" stop-color="#990224"/><stop offset="1.000" stop-color="#990002"/></linearGradient><linearGradient id="t194" gradientUnits="userSpaceOnUse" x1="1335.3" y1="0" x2="1603.1" y2="0"><stop offset="0.000" stop-color="#007cff"/><stop offset="0.093" stop-color="#1e75ff"/><stop offset="0.241" stop-color="#7b68ff"/><stop offset="0.389" stop-color="#ff57f9"/><stop offset="0.481" stop-color="#ff36ad"/><stop offset="0.630" stop-color="#ff1969"/><stop offset="0.889" stop-color="#ff0331"/><stop offset="1.000" stop-color="#ff0024"/></linearGradient><linearGradient id="l195" gradientUnits="userSpaceOnUse" x1="1206.0" y1="0" x2="1780.2" y2="0"><stop offset="0.000" stop-color="#006399"/><stop offset="0.236" stop-color="#045399"/><stop offset="0.375" stop-color="#7a4499"/><stop offset="0.403" stop-color="#984099"/><stop offset="0.486" stop-color="#991e5b"/><stop offset="0.639" stop-color="#99042a"/><stop offset="1.000" stop-color="#990003"/></linearGradient><linearGradient id="t195" gradientUnits="userSpaceOnUse" x1="1334.6" y1="0" x2="1598.4" y2="0"><stop offset="0.000" stop-color="#0078ff"/><stop offset="0.094" stop-color="#1d71ff"/><stop offset="0.245" stop-color="#7a64ff"/><stop offset="0.396" stop-color="#ff54fb"/><stop offset="0.491" stop-color="#ff33af"/><stop offset="0.642" stop-color="#ff176a"/><stop offset="0.906" stop-color="#ff0232"/><stop offset="1.000" stop-color="#ff0026"/></linearGradient><linearGradient id="l196" gradientUnits="userSpaceOnUse" x1="1206.7" y1="0" x2="1774.5" y2="0"><stop offset="0.000" stop-color="#006199"/><stop offset="0.239" stop-color="#075099"/><stop offset="0.380" stop-color="#7c4199"/><stop offset="0.408" stop-color="#993d98"/><stop offset="0.493" stop-color="#991c5a"/><stop offset="0.662" stop-color="#990127"/><stop offset="1.000" stop-color="#990004"/></linearGradient><linearGradient id="t196" gradientUnits="userSpaceOnUse" x1="1333.9" y1="0" x2="1593.6" y2="0"><stop offset="0.000" stop-color="#0074ff"/><stop offset="0.096" stop-color="#1d6dff"/><stop offset="0.250" stop-color="#7961ff"/><stop offset="0.404" stop-color="#ff51fc"/><stop offset="0.500" stop-color="#ff31b0"/><stop offset="0.654" stop-color="#ff156b"/><stop offset="0.923" stop-color="#ff0232"/><stop offset="1.000" stop-color="#ff0029"/></linearGradient><linearGradient id="l197" gradientUnits="userSpaceOnUse" x1="1207.3" y1="0" x2="1768.8" y2="0"><stop offset="0.000" stop-color="#005f99"/><stop offset="0.239" stop-color="#064e99"/><stop offset="0.380" stop-color="#793f99"/><stop offset="0.408" stop-color="#963b99"/><stop offset="0.507" stop-color="#991856"/><stop offset="0.690" stop-color="#990023"/><stop offset="1.000" stop-color="#990005"/></linearGradient><linearGradient id="t197" gradientUnits="userSpaceOnUse" x1="1333.1" y1="0" x2="1588.8" y2="0"><stop offset="0.000" stop-color="#0071ff"/><stop offset="0.115" stop-color="#2568ff"/><stop offset="0.288" stop-color="#925aff"/><stop offset="0.404" stop-color="#f84eff"/><stop offset="0.538" stop-color="#ff28a1"/><stop offset="0.712" stop-color="#ff0f5f"/><stop offset="1.000" stop-color="#ff002c"/></linearGradient><linearGradient id="l198" gradientUnits="userSpaceOnUse" x1="1208.0" y1="0" x2="1763.2" y2="0"><stop offset="0.000" stop-color="#005d99"/><stop offset="0.229" stop-color="#004d99"/><stop offset="0.371" stop-color="#6e3e99"/><stop offset="0.414" stop-color="#983999"/><stop offset="0.500" stop-color="#991a5c"/><stop offset="0.671" stop-color="#990028"/><stop offset="1.000" stop-color="#990006"/></linearGradient><linearGradient id="t198" gradientUnits="userSpaceOnUse" x1="1332.4" y1="0" x2="1584.0" y2="0"><stop offset="0.000" stop-color="#006dff"/><stop offset="0.118" stop-color="#2565ff"/><stop offset="0.294" stop-color="#9156ff"/><stop offset="0.412" stop-color="#f64bff"/><stop offset="0.471" stop-color="#ff39d4"/><stop offset="0.608" stop-color="#ff1c87"/><stop offset="0.824" stop-color="#ff064a"/><stop offset="1.000" stop-color="#ff002e"/></linearGradient><linearGradient id="l199" gradientUnits="userSpaceOnUse" x1="1208.6" y1="0" x2="1757.5" y2="0"><stop offset="0.000" stop-color="#005c99"/><stop offset="0.232" stop-color="#014b99"/><stop offset="0.391" stop-color="#7e3a99"/><stop offset="0.420" stop-color="#993597"/><stop offset="0.507" stop-color="#99185b"/><stop offset="0.681" stop-color="#990028"/><stop offset="1.000" stop-color="#990007"/></linearGradient><linearGradient id="t199" gradientUnits="userSpaceOnUse" x1="1331.7" y1="0" x2="1579.3" y2="0"><stop offset="0.000" stop-color="#006aff"/><stop offset="0.120" stop-color="#2561ff"/><stop offset="0.300" stop-color="#9052ff"/><stop offset="0.420" stop-color="#f447ff"/><stop offset="0.460" stop-color="#ff3ce5"/><stop offset="0.580" stop-color="#ff209a"/><stop offset="0.780" stop-color="#ff0957"/><stop offset="1.000" stop-color="#ff0031"/></linearGradient><linearGradient id="l200" gradientUnits="userSpaceOnUse" x1="1209.3" y1="0" x2="1751.8" y2="0"><stop offset="0.000" stop-color="#005a99"/><stop offset="0.235" stop-color="#034999"/><stop offset="0.397" stop-color="#803799"/><stop offset="0.426" stop-color="#993295"/><stop offset="0.515" stop-color="#99165a"/><stop offset="0.691" stop-color="#990028"/><stop offset="1.000" stop-color="#990007"/></linearGradient><linearGradient id="t200" gradientUnits="userSpaceOnUse" x1="1330.9" y1="0" x2="1574.5" y2="0"><stop offset="0.000" stop-color="#0067ff"/><stop offset="0.122" stop-color="#255eff"/><stop offset="0.306" stop-color="#8f4fff"/><stop offset="0.449" stop-color="#ff3ff9"/><stop offset="0.571" stop-color="#ff22a5"/><stop offset="0.755" stop-color="#ff0b62"/><stop offset="1.000" stop-color="#ff0035"/></linearGradient><linearGradient id="l201" gradientUnits="userSpaceOnUse" x1="1210.0" y1="0" x2="1746.2" y2="0"><stop offset="0.000" stop-color="#005899"/><stop offset="0.235" stop-color="#034799"/><stop offset="0.397" stop-color="#7d3699"/><stop offset="0.426" stop-color="#993199"/><stop offset="0.515" stop-color="#99155d"/><stop offset="0.691" stop-color="#99002a"/><stop offset="1.000" stop-color="#990008"/></linearGradient><linearGradient id="t201" gradientUnits="userSpaceOnUse" x1="1330.2" y1="0" x2="1569.7" y2="0"><stop offset="0.000" stop-color="#0064ff"/><stop offset="0.125" stop-color="#245bff"/><stop offset="0.313" stop-color="#8e4bff"/><stop offset="0.458" stop-color="#ff3cfa"/><stop offset="0.583" stop-color="#ff1fa6"/><stop offset="0.771" stop-color="#ff0a63"/><stop offset="1.000" stop-color="#ff0038"/></linearGradient><linearGradient id="l202" gradientUnits="userSpaceOnUse" x1="1210.7" y1="0" x2="1740.5" y2="0"><stop offset="0.000" stop-color="#005699"/><stop offset="0.239" stop-color="#054599"/><stop offset="0.403" stop-color="#7f3399"/><stop offset="0.433" stop-color="#992e97"/><stop offset="0.522" stop-color="#99135c"/><stop offset="0.701" stop-color="#990029"/><stop offset="1.000" stop-color="#990009"/></linearGradient><linearGradient id="t202" gradientUnits="userSpaceOnUse" x1="1329.5" y1="0" x2="1565.0" y2="0"><stop offset="0.000" stop-color="#0061ff"/><stop offset="0.125" stop-color="#2358ff"/><stop offset="0.313" stop-color="#8949ff"/><stop offset="0.458" stop-color="#fa3bff"/><stop offset="0.604" stop-color="#ff1ca3"/><stop offset="0.813" stop-color="#ff075d"/><stop offset="1.000" stop-color="#ff003b"/></linearGradient><linearGradient id="l203" gradientUnits="userSpaceOnUse" x1="1211.3" y1="0" x2="1734.9" y2="0"><stop offset="0.000" stop-color="#005599"/><stop offset="0.227" stop-color="#004499"/><stop offset="0.379" stop-color="#673499"/><stop offset="0.439" stop-color="#992b95"/><stop offset="0.530" stop-color="#99115b"/><stop offset="0.712" stop-color="#990029"/><stop offset="1.000" stop-color="#99000a"/></linearGradient><linearGradient id="t203" gradientUnits="userSpaceOnUse" x1="1328.8" y1="0" x2="1560.2" y2="0"><stop offset="0.000" stop-color="#005dff"/><stop offset="0.128" stop-color="#2355ff"/><stop offset="0.319" stop-color="#8845ff"/><stop offset="0.468" stop-color="#f838ff"/><stop offset="0.638" stop-color="#ff179b"/><stop offset="0.851" stop-color="#ff0559"/><stop offset="1.000" stop-color="#ff003f"/></linearGradient><linearGradient id="l204" gradientUnits="userSpaceOnUse" x1="1212.0" y1="0" x2="1729.2" y2="0"><stop offset="0.000" stop-color="#005399"/><stop offset="0.231" stop-color="#004299"/><stop offset="0.400" stop-color="#763099"/><stop offset="0.446" stop-color="#992893"/><stop offset="0.554" stop-color="#990d54"/><stop offset="0.754" stop-color="#990024"/><stop offset="1.000" stop-color="#99000c"/></linearGradient><linearGradient id="t204" gradientUnits="userSpaceOnUse" x1="1328.0" y1="0" x2="1555.4" y2="0"><stop offset="0.000" stop-color="#005bff"/><stop offset="0.130" stop-color="#2352ff"/><stop offset="0.326" stop-color="#8742ff"/><stop offset="0.478" stop-color="#f635ff"/><stop offset="0.543" stop-color="#ff27d6"/><stop offset="0.696" stop-color="#ff108b"/><stop offset="0.957" stop-color="#ff004a"/><stop offset="1.000" stop-color="#ff0043"/></linearGradient><linearGradient id="l205" gradientUnits="userSpaceOnUse" x1="1212.7" y1="0" x2="1723.5" y2="0"><stop offset="0.000" stop-color="#005199"/><stop offset="0.234" stop-color="#024099"/><stop offset="0.406" stop-color="#792e99"/><stop offset="0.453" stop-color="#992591"/><stop offset="0.562" stop-color="#990b53"/><stop offset="0.781" stop-color="#990022"/><stop offset="1.000" stop-color="#99000d"/></linearGradient><linearGradient id="t205" gradientUnits="userSpaceOnUse" x1="1327.3" y1="0" x2="1550.6" y2="0"><stop offset="0.000" stop-color="#0058ff"/><stop offset="0.133" stop-color="#234fff"/><stop offset="0.333" stop-color="#863fff"/><stop offset="0.489" stop-color="#f531ff"/><stop offset="0.533" stop-color="#ff29e6"/><stop offset="0.689" stop-color="#ff1194"/><stop offset="0.933" stop-color="#ff0152"/><stop offset="1.000" stop-color="#ff0047"/></linearGradient><linearGradient id="l206" gradientUnits="userSpaceOnUse" x1="1213.4" y1="0" x2="1717.9" y2="0"><stop offset="0.000" stop-color="#005099"/><stop offset="0.234" stop-color="#023e99"/><stop offset="0.406" stop-color="#762c99"/><stop offset="0.453" stop-color="#992494"/><stop offset="0.562" stop-color="#990b56"/><stop offset="0.781" stop-color="#990023"/><stop offset="1.000" stop-color="#99000e"/></linearGradient><linearGradient id="t206" gradientUnits="userSpaceOnUse" x1="1326.6" y1="0" x2="1545.9" y2="0"><stop offset="0.000" stop-color="#0055ff"/><stop offset="0.136" stop-color="#224cff"/><stop offset="0.341" stop-color="#863cff"/><stop offset="0.523" stop-color="#ff2bf8"/><stop offset="0.659" stop-color="#ff14a8"/><stop offset="0.886" stop-color="#ff0360"/><stop offset="1.000" stop-color="#ff004b"/></linearGradient><linearGradient id="l207" gradientUnits="userSpaceOnUse" x1="1214.1" y1="0" x2="1712.2" y2="0"><stop offset="0.000" stop-color="#004e99"/><stop offset="0.238" stop-color="#043c99"/><stop offset="0.413" stop-color="#782a99"/><stop offset="0.460" stop-color="#992192"/><stop offset="0.571" stop-color="#990955"/><stop offset="0.794" stop-color="#990023"/><stop offset="1.000" stop-color="#99000f"/></linearGradient><linearGradient id="t207" gradientUnits="userSpaceOnUse" x1="1325.8" y1="0" x2="1541.1" y2="0"><stop offset="0.000" stop-color="#0052ff"/><stop offset="0.136" stop-color="#2149ff"/><stop offset="0.341" stop-color="#813aff"/><stop offset="0.523" stop-color="#fb2aff"/><stop offset="0.682" stop-color="#ff12a5"/><stop offset="0.909" stop-color="#ff0260"/><stop offset="1.000" stop-color="#ff004f"/></linearGradient><linearGradient id="l208" gradientUnits="userSpaceOnUse" x1="1214.9" y1="0" x2="1706.6" y2="0"><stop offset="0.000" stop-color="#004c99"/><stop offset="0.242" stop-color="#063a99"/><stop offset="0.419" stop-color="#7a2799"/><stop offset="0.468" stop-color="#991f90"/><stop offset="0.581" stop-color="#990754"/><stop offset="0.806" stop-color="#990023"/><stop offset="1.000" stop-color="#990010"/></linearGradient><linearGradient id="t208" gradientUnits="userSpaceOnUse" x1="1325.1" y1="0" x2="1536.3" y2="0"><stop offset="0.000" stop-color="#004fff"/><stop offset="0.140" stop-color="#2146ff"/><stop offset="0.349" stop-color="#8037ff"/><stop offset="0.535" stop-color="#fa28ff"/><stop offset="0.721" stop-color="#ff0e9d"/><stop offset="0.977" stop-color="#ff0058"/><stop offset="1.000" stop-color="#ff0054"/></linearGradient><linearGradient id="l209" gradientUnits="userSpaceOnUse" x1="1215.6" y1="0" x2="1700.9" y2="0"><stop offset="0.000" stop-color="#004b99"/><stop offset="0.230" stop-color="#003a99"/><stop offset="0.410" stop-color="#702799"/><stop offset="0.459" stop-color="#972099"/><stop offset="0.574" stop-color="#99085a"/><stop offset="0.787" stop-color="#990028"/><stop offset="1.000" stop-color="#990011"/></linearGradient><linearGradient id="t209" gradientUnits="userSpaceOnUse" x1="1324.4" y1="0" x2="1531.6" y2="0"><stop offset="0.000" stop-color="#004dff"/><stop offset="0.143" stop-color="#2143ff"/><stop offset="0.357" stop-color="#7f34ff"/><stop offset="0.548" stop-color="#f825ff"/><stop offset="0.738" stop-color="#ff0c9e"/><stop offset="1.000" stop-color="#ff0058"/></linearGradient><linearGradient id="l210" gradientUnits="userSpaceOnUse" x1="1216.3" y1="0" x2="1695.2" y2="0"><stop offset="0.000" stop-color="#004999"/><stop offset="0.233" stop-color="#013899"/><stop offset="0.433" stop-color="#7f2299"/><stop offset="0.467" stop-color="#991e99"/><stop offset="0.567" stop-color="#99095f"/><stop offset="0.767" stop-color="#99002c"/><stop offset="1.000" stop-color="#990012"/></linearGradient><linearGradient id="t210" gradientUnits="userSpaceOnUse" x1="1323.6" y1="0" x2="1526.8" y2="0"><stop offset="0.000" stop-color="#004aff"/><stop offset="0.146" stop-color="#2141ff"/><stop offset="0.366" stop-color="#7f31ff"/><stop offset="0.561" stop-color="#f722ff"/><stop offset="0.683" stop-color="#ff12be"/><stop offset="0.902" stop-color="#ff0273"/><stop offset="1.000" stop-color="#ff005e"/></linearGradient><linearGradient id="l211" gradientUnits="userSpaceOnUse" x1="1217.0" y1="0" x2="1689.6" y2="0"><stop offset="0.000" stop-color="#004799"/><stop offset="0.233" stop-color="#013699"/><stop offset="0.433" stop-color="#7b2199"/><stop offset="0.483" stop-color="#991990"/><stop offset="0.600" stop-color="#990456"/><stop offset="0.833" stop-color="#990025"/><stop offset="1.000" stop-color="#990014"/></linearGradient><linearGradient id="t211" gradientUnits="userSpaceOnUse" x1="1322.9" y1="0" x2="1522.0" y2="0"><stop offset="0.000" stop-color="#0047ff"/><stop offset="0.150" stop-color="#213eff"/><stop offset="0.400" stop-color="#8b2dff"/><stop offset="0.575" stop-color="#f61fff"/><stop offset="0.650" stop-color="#ff15d8"/><stop offset="0.825" stop-color="#ff068f"/><stop offset="1.000" stop-color="#ff0063"/></linearGradient><linearGradient id="l212" gradientUnits="userSpaceOnUse" x1="1217.8" y1="0" x2="1683.9" y2="0"><stop offset="0.000" stop-color="#004699"/><stop offset="0.237" stop-color="#033599"/><stop offset="0.441" stop-color="#7d1f99"/><stop offset="0.475" stop-color="#971a99"/><stop offset="0.593" stop-color="#99045b"/><stop offset="0.814" stop-color="#990029"/><stop offset="1.000" stop-color="#990015"/></linearGradient><linearGradient id="t212" gradientUnits="userSpaceOnUse" x1="1322.2" y1="0" x2="1517.3" y2="0"><stop offset="0.000" stop-color="#0045ff"/><stop offset="0.175" stop-color="#273aff"/><stop offset="0.425" stop-color="#9329ff"/><stop offset="0.600" stop-color="#fc1cff"/><stop offset="0.775" stop-color="#ff09a8"/><stop offset="1.000" stop-color="#ff0068"/></linearGradient><linearGradient id="l213" gradientUnits="userSpaceOnUse" x1="1218.6" y1="0" x2="1678.2" y2="0"><stop offset="0.000" stop-color="#004499"/><stop offset="0.241" stop-color="#053399"/><stop offset="0.448" stop-color="#801d99"/><stop offset="0.483" stop-color="#991899"/><stop offset="0.603" stop-color="#99035a"/><stop offset="0.828" stop-color="#990029"/><stop offset="1.000" stop-color="#990016"/></linearGradient><linearGradient id="t213" gradientUnits="userSpaceOnUse" x1="1321.5" y1="0" x2="1512.5" y2="0"><stop offset="0.000" stop-color="#0042ff"/><stop offset="0.179" stop-color="#2738ff"/><stop offset="0.436" stop-color="#9227ff"/><stop offset="0.615" stop-color="#fb1aff"/><stop offset="0.795" stop-color="#ff08a8"/><stop offset="1.000" stop-color="#ff006e"/></linearGradient><linearGradient id="l214" gradientUnits="userSpaceOnUse" x1="1219.4" y1="0" x2="1672.6" y2="0"><stop offset="0.000" stop-color="#004399"/><stop offset="0.228" stop-color="#003299"/><stop offset="0.439" stop-color="#761d99"/><stop offset="0.491" stop-color="#991596"/><stop offset="0.614" stop-color="#990159"/><stop offset="0.860" stop-color="#990026"/><stop offset="1.000" stop-color="#990018"/></linearGradient><linearGradient id="t214" gradientUnits="userSpaceOnUse" x1="1320.7" y1="0" x2="1507.7" y2="0"><stop offset="0.000" stop-color="#0040ff"/><stop offset="0.184" stop-color="#2735ff"/><stop offset="0.447" stop-color="#9124ff"/><stop offset="0.632" stop-color="#fa17ff"/><stop offset="0.842" stop-color="#ff05a0"/><stop offset="1.000" stop-color="#ff0075"/></linearGradient><linearGradient id="l215" gradientUnits="userSpaceOnUse" x1="1220.1" y1="0" x2="1666.9" y2="0"><stop offset="0.000" stop-color="#004199"/><stop offset="0.232" stop-color="#013099"/><stop offset="0.446" stop-color="#781a99"/><stop offset="0.500" stop-color="#991394"/><stop offset="0.625" stop-color="#990058"/><stop offset="0.875" stop-color="#990026"/><stop offset="1.000" stop-color="#990019"/></linearGradient><linearGradient id="t215" gradientUnits="userSpaceOnUse" x1="1320.0" y1="0" x2="1502.9" y2="0"><stop offset="0.000" stop-color="#003eff"/><stop offset="0.189" stop-color="#2733ff"/><stop offset="0.459" stop-color="#9122ff"/><stop offset="0.649" stop-color="#f915ff"/><stop offset="0.865" stop-color="#ff04a1"/><stop offset="1.000" stop-color="#ff007b"/></linearGradient><linearGradient id="l216" gradientUnits="userSpaceOnUse" x1="1220.9" y1="0" x2="1661.3" y2="0"><stop offset="0.000" stop-color="#004099"/><stop offset="0.232" stop-color="#012f99"/><stop offset="0.446" stop-color="#751999"/><stop offset="0.500" stop-color="#991298"/><stop offset="0.625" stop-color="#99005b"/><stop offset="0.875" stop-color="#990028"/><stop offset="1.000" stop-color="#99001b"/></linearGradient><linearGradient id="t216" gradientUnits="userSpaceOnUse" x1="1319.3" y1="0" x2="1498.2" y2="0"><stop offset="0.000" stop-color="#003bff"/><stop offset="0.194" stop-color="#2731ff"/><stop offset="0.472" stop-color="#9020ff"/><stop offset="0.667" stop-color="#f813ff"/><stop offset="0.889" stop-color="#ff03a1"/><stop offset="1.000" stop-color="#ff0082"/></linearGradient><linearGradient id="l217" gradientUnits="userSpaceOnUse" x1="1221.7" y1="0" x2="1655.6" y2="0"><stop offset="0.000" stop-color="#003e99"/><stop offset="0.236" stop-color="#022d99"/><stop offset="0.455" stop-color="#771799"/><stop offset="0.509" stop-color="#991096"/><stop offset="0.636" stop-color="#99005a"/><stop offset="0.891" stop-color="#990028"/><stop offset="1.000" stop-color="#99001c"/></linearGradient><linearGradient id="t217" gradientUnits="userSpaceOnUse" x1="1318.5" y1="0" x2="1493.4" y2="0"><stop offset="0.000" stop-color="#0039ff"/><stop offset="0.200" stop-color="#272eff"/><stop offset="0.486" stop-color="#901dff"/><stop offset="0.686" stop-color="#f711ff"/><stop offset="0.829" stop-color="#ff06c0"/><stop offset="1.000" stop-color="#ff008a"/></linearGradient><linearGradient id="l218" gradientUnits="userSpaceOnUse" x1="1222.5" y1="0" x2="1649.9" y2="0"><stop offset="0.000" stop-color="#003d99"/><stop offset="0.241" stop-color="#042b99"/><stop offset="0.463" stop-color="#791599"/><stop offset="0.519" stop-color="#990d94"/><stop offset="0.648" stop-color="#990059"/><stop offset="0.907" stop-color="#990027"/><stop offset="1.000" stop-color="#99001e"/></linearGradient><linearGradient id="t218" gradientUnits="userSpaceOnUse" x1="1317.8" y1="0" x2="1488.6" y2="0"><stop offset="0.000" stop-color="#0037ff"/><stop offset="0.200" stop-color="#252cff"/><stop offset="0.486" stop-color="#8a1cff"/><stop offset="0.714" stop-color="#fc0eff"/><stop offset="0.943" stop-color="#ff01a2"/><stop offset="1.000" stop-color="#ff0091"/></linearGradient><linearGradient id="l219" gradientUnits="userSpaceOnUse" x1="1223.4" y1="0" x2="1644.3" y2="0"><stop offset="0.000" stop-color="#003b99"/><stop offset="0.245" stop-color="#062a99"/><stop offset="0.472" stop-color="#7c1399"/><stop offset="0.528" stop-color="#990b92"/><stop offset="0.679" stop-color="#990053"/><stop offset="0.981" stop-color="#990021"/><stop offset="1.000" stop-color="#99001f"/></linearGradient><linearGradient id="t219" gradientUnits="userSpaceOnUse" x1="1317.1" y1="0" x2="1483.9" y2="0"><stop offset="0.000" stop-color="#0035ff"/><stop offset="0.206" stop-color="#252aff"/><stop offset="0.500" stop-color="#891aff"/><stop offset="0.735" stop-color="#fb0cff"/><stop offset="0.971" stop-color="#ff00a2"/><stop offset="1.000" stop-color="#ff009a"/></linearGradient><linearGradient id="l220" gradientUnits="userSpaceOnUse" x1="1224.2" y1="0" x2="1638.6" y2="0"><stop offset="0.000" stop-color="#003999"/><stop offset="0.231" stop-color="#002999"/><stop offset="0.481" stop-color="#7e1199"/><stop offset="0.538" stop-color="#99098f"/><stop offset="0.692" stop-color="#990052"/><stop offset="1.000" stop-color="#990021"/></linearGradient><linearGradient id="t220" gradientUnits="userSpaceOnUse" x1="1316.3" y1="0" x2="1479.1" y2="0"><stop offset="0.000" stop-color="#0033ff"/><stop offset="0.212" stop-color="#2528ff"/><stop offset="0.515" stop-color="#8918ff"/><stop offset="0.758" stop-color="#fa0aff"/><stop offset="1.000" stop-color="#ff00a3"/></linearGradient><linearGradient id="l221" gradientUnits="userSpaceOnUse" x1="1225.1" y1="0" x2="1632.9" y2="0"><stop offset="0.000" stop-color="#003899"/><stop offset="0.235" stop-color="#022899"/><stop offset="0.490" stop-color="#800e99"/><stop offset="0.529" stop-color="#990999"/><stop offset="0.667" stop-color="#99005c"/><stop offset="0.941" stop-color="#990029"/><stop offset="1.000" stop-color="#990023"/></linearGradient><linearGradient id="t221" gradientUnits="userSpaceOnUse" x1="1315.6" y1="0" x2="1474.3" y2="0"><stop offset="0.000" stop-color="#0031ff"/><stop offset="0.219" stop-color="#2526ff"/><stop offset="0.531" stop-color="#8916ff"/><stop offset="0.781" stop-color="#fa08ff"/><stop offset="1.000" stop-color="#ff00ac"/></linearGradient><linearGradient id="l222" gradientUnits="userSpaceOnUse" x1="1225.9" y1="0" x2="1627.3" y2="0"><stop offset="0.000" stop-color="#003799"/><stop offset="0.235" stop-color="#022699"/><stop offset="0.490" stop-color="#7d0d99"/><stop offset="0.549" stop-color="#990691"/><stop offset="0.706" stop-color="#990054"/><stop offset="1.000" stop-color="#990024"/></linearGradient><linearGradient id="t222" gradientUnits="userSpaceOnUse" x1="1314.9" y1="0" x2="1469.5" y2="0"><stop offset="0.000" stop-color="#002fff"/><stop offset="0.226" stop-color="#2524ff"/><stop offset="0.548" stop-color="#8914ff"/><stop offset="0.806" stop-color="#f907ff"/><stop offset="1.000" stop-color="#ff00b6"/></linearGradient><linearGradient id="l223" gradientUnits="userSpaceOnUse" x1="1226.8" y1="0" x2="1621.6" y2="0"><stop offset="0.000" stop-color="#003599"/><stop offset="0.240" stop-color="#042599"/><stop offset="0.500" stop-color="#7f0b99"/><stop offset="0.540" stop-color="#970699"/><stop offset="0.700" stop-color="#990059"/><stop offset="1.000" stop-color="#990026"/></linearGradient><linearGradient id="t223" gradientUnits="userSpaceOnUse" x1="1314.2" y1="0" x2="1464.8" y2="0"><stop offset="0.000" stop-color="#002dff"/><stop offset="0.226" stop-color="#2323ff"/><stop offset="0.581" stop-color="#8e11ff"/><stop offset="0.839" stop-color="#fc05ff"/><stop offset="1.000" stop-color="#ff00c1"/></linearGradient><linearGradient id="l224" gradientUnits="userSpaceOnUse" x1="1227.7" y1="0" x2="1616.0" y2="0"><stop offset="0.000" stop-color="#003499"/><stop offset="0.245" stop-color="#062399"/><stop offset="0.510" stop-color="#810999"/><stop offset="0.551" stop-color="#990499"/><stop offset="0.694" stop-color="#99005d"/><stop offset="0.980" stop-color="#99002a"/><stop offset="1.000" stop-color="#990028"/></linearGradient><linearGradient id="t224" gradientUnits="userSpaceOnUse" x1="1313.4" y1="0" x2="1460.0" y2="0"><stop offset="0.000" stop-color="#002bff"/><stop offset="0.233" stop-color="#2321ff"/><stop offset="0.600" stop-color="#8d0fff"/><stop offset="0.867" stop-color="#fb03ff"/><stop offset="1.000" stop-color="#ff00cc"/></linearGradient><linearGradient id="l225" gradientUnits="userSpaceOnUse" x1="1228.6" y1="0" x2="1610.3" y2="0"><stop offset="0.000" stop-color="#003299"/><stop offset="0.229" stop-color="#002399"/><stop offset="0.500" stop-color="#780a99"/><stop offset="0.562" stop-color="#990297"/><stop offset="0.708" stop-color="#99005c"/><stop offset="1.000" stop-color="#99002a"/></linearGradient><linearGradient id="t225" gradientUnits="userSpaceOnUse" x1="1312.7" y1="0" x2="1455.2" y2="0"><stop offset="0.000" stop-color="#0029ff"/><stop offset="0.241" stop-color="#231fff"/><stop offset="0.621" stop-color="#8d0eff"/><stop offset="0.897" stop-color="#fb02ff"/><stop offset="1.000" stop-color="#ff00d8"/></linearGradient><linearGradient id="l226" gradientUnits="userSpaceOnUse" x1="1229.5" y1="0" x2="1604.6" y2="0"><stop offset="0.000" stop-color="#003199"/><stop offset="0.234" stop-color="#022199"/><stop offset="0.511" stop-color="#7b0899"/><stop offset="0.574" stop-color="#990094"/><stop offset="0.745" stop-color="#990056"/><stop offset="1.000" stop-color="#99002c"/></linearGradient><linearGradient id="t226" gradientUnits="userSpaceOnUse" x1="1312.0" y1="0" x2="1450.5" y2="0"><stop offset="0.000" stop-color="#0027ff"/><stop offset="0.250" stop-color="#231dff"/><stop offset="0.643" stop-color="#8d0cff"/><stop offset="0.929" stop-color="#fb01ff"/><stop offset="1.000" stop-color="#ff00e5"/></linearGradient><linearGradient id="l227" gradientUnits="userSpaceOnUse" x1="1230.4" y1="0" x2="1599.0" y2="0"><stop offset="0.000" stop-color="#002f99"/><stop offset="0.234" stop-color="#022099"/><stop offset="0.511" stop-color="#770799"/><stop offset="0.574" stop-color="#990099"/><stop offset="0.745" stop-color="#990059"/><stop offset="1.000" stop-color="#99002e"/></linearGradient><linearGradient id="t227" gradientUnits="userSpaceOnUse" x1="1311.2" y1="0" x2="1445.7" y2="0"><stop offset="0.000" stop-color="#0025ff"/><stop offset="0.259" stop-color="#231bff"/><stop offset="0.667" stop-color="#8d0aff"/><stop offset="0.963" stop-color="#fb00ff"/><stop offset="1.000" stop-color="#ff00f4"/></linearGradient><linearGradient id="l228" gradientUnits="userSpaceOnUse" x1="1231.4" y1="0" x2="1593.3" y2="0"><stop offset="0.000" stop-color="#002e99"/><stop offset="0.239" stop-color="#041e99"/><stop offset="0.522" stop-color="#790599"/><stop offset="0.587" stop-color="#990096"/><stop offset="0.761" stop-color="#990058"/><stop offset="1.000" stop-color="#990030"/></linearGradient><linearGradient id="t228" gradientUnits="userSpaceOnUse" x1="1310.5" y1="0" x2="1440.9" y2="0"><stop offset="0.000" stop-color="#0024ff"/><stop offset="0.296" stop-color="#2918ff"/><stop offset="0.704" stop-color="#9108ff"/><stop offset="1.000" stop-color="#fb00ff"/></linearGradient><linearGradient id="l229" gradientUnits="userSpaceOnUse" x1="1232.3" y1="0" x2="1587.7" y2="0"><stop offset="0.000" stop-color="#002c99"/><stop offset="0.244" stop-color="#061c99"/><stop offset="0.533" stop-color="#7c0399"/><stop offset="0.600" stop-color="#990094"/><stop offset="0.778" stop-color="#990057"/><stop offset="1.000" stop-color="#990032"/></linearGradient><linearGradient id="t229" gradientUnits="userSpaceOnUse" x1="1309.8" y1="0" x2="1436.1" y2="0"><stop offset="0.000" stop-color="#0022ff"/><stop offset="0.308" stop-color="#2917ff"/><stop offset="0.731" stop-color="#9107ff"/><stop offset="1.000" stop-color="#ec00ff"/></linearGradient><linearGradient id="l230" gradientUnits="userSpaceOnUse" x1="1233.2" y1="0" x2="1582.0" y2="0"><stop offset="0.000" stop-color="#002b99"/><stop offset="0.227" stop-color="#001d99"/><stop offset="0.545" stop-color="#7e0199"/><stop offset="0.614" stop-color="#990092"/><stop offset="0.795" stop-color="#990056"/><stop offset="1.000" stop-color="#990034"/></linearGradient><linearGradient id="t230" gradientUnits="userSpaceOnUse" x1="1309.0" y1="0" x2="1431.4" y2="0"><stop offset="0.000" stop-color="#0020ff"/><stop offset="0.320" stop-color="#2915ff"/><stop offset="0.760" stop-color="#9105ff"/><stop offset="1.000" stop-color="#de00ff"/></linearGradient><linearGradient id="l231" gradientUnits="userSpaceOnUse" x1="1234.2" y1="0" x2="1576.3" y2="0"><stop offset="0.000" stop-color="#002999"/><stop offset="0.233" stop-color="#021b99"/><stop offset="0.558" stop-color="#800099"/><stop offset="0.628" stop-color="#990090"/><stop offset="0.814" stop-color="#990055"/><stop offset="1.000" stop-color="#990037"/></linearGradient><linearGradient id="t231" gradientUnits="userSpaceOnUse" x1="1308.3" y1="0" x2="1426.6" y2="0"><stop offset="0.000" stop-color="#001fff"/><stop offset="0.333" stop-color="#2913ff"/><stop offset="0.792" stop-color="#9104ff"/><stop offset="1.000" stop-color="#d100ff"/></linearGradient><linearGradient id="l232" gradientUnits="userSpaceOnUse" x1="1235.1" y1="0" x2="1570.7" y2="0"><stop offset="0.000" stop-color="#002899"/><stop offset="0.238" stop-color="#041999"/><stop offset="0.571" stop-color="#830099"/><stop offset="0.619" stop-color="#990099"/><stop offset="0.810" stop-color="#990059"/><stop offset="1.000" stop-color="#990039"/></linearGradient><linearGradient id="t232" gradientUnits="userSpaceOnUse" x1="1307.6" y1="0" x2="1421.8" y2="0"><stop offset="0.000" stop-color="#001dff"/><stop offset="0.348" stop-color="#2912ff"/><stop offset="0.826" stop-color="#9203ff"/><stop offset="1.000" stop-color="#c300ff"/></linearGradient><linearGradient id="l233" gradientUnits="userSpaceOnUse" x1="1236.1" y1="0" x2="1565.0" y2="0"><stop offset="0.000" stop-color="#002799"/><stop offset="0.238" stop-color="#041899"/><stop offset="0.571" stop-color="#7f0099"/><stop offset="0.643" stop-color="#990092"/><stop offset="0.833" stop-color="#990058"/><stop offset="1.000" stop-color="#99003c"/></linearGradient><linearGradient id="t233" gradientUnits="userSpaceOnUse" x1="1306.8" y1="0" x2="1417.1" y2="0"><stop offset="0.000" stop-color="#001bff"/><stop offset="0.348" stop-color="#2711ff"/><stop offset="0.870" stop-color="#9402ff"/><stop offset="1.000" stop-color="#b700ff"/></linearGradient><linearGradient id="l234" gradientUnits="userSpaceOnUse" x1="1237.0" y1="0" x2="1559.3" y2="0"><stop offset="0.000" stop-color="#002599"/><stop offset="0.244" stop-color="#061799"/><stop offset="0.585" stop-color="#810099"/><stop offset="0.659" stop-color="#990090"/><stop offset="0.878" stop-color="#990052"/><stop offset="1.000" stop-color="#99003f"/></linearGradient><linearGradient id="t234" gradientUnits="userSpaceOnUse" x1="1306.1" y1="0" x2="1412.3" y2="0"><stop offset="0.000" stop-color="#001aff"/><stop offset="0.364" stop-color="#270fff"/><stop offset="0.909" stop-color="#9401ff"/><stop offset="1.000" stop-color="#ab00ff"/></linearGradient><linearGradient id="l235" gradientUnits="userSpaceOnUse" x1="1238.0" y1="0" x2="1553.7" y2="0"><stop offset="0.000" stop-color="#002499"/><stop offset="0.225" stop-color="#001799"/><stop offset="0.575" stop-color="#790099"/><stop offset="0.650" stop-color="#990099"/><stop offset="0.850" stop-color="#99005b"/><stop offset="1.000" stop-color="#990041"/></linearGradient><linearGradient id="t235" gradientUnits="userSpaceOnUse" x1="1305.4" y1="0" x2="1407.5" y2="0"><stop offset="0.000" stop-color="#0018ff"/><stop offset="0.381" stop-color="#270eff"/><stop offset="0.952" stop-color="#9400ff"/><stop offset="1.000" stop-color="#a000ff"/></linearGradient><linearGradient id="l236" gradientUnits="userSpaceOnUse" x1="1239.0" y1="0" x2="1548.0" y2="0"><stop offset="0.000" stop-color="#002399"/><stop offset="0.231" stop-color="#021599"/><stop offset="0.590" stop-color="#7b0099"/><stop offset="0.667" stop-color="#990096"/><stop offset="0.872" stop-color="#99005a"/><stop offset="1.000" stop-color="#990044"/></linearGradient><linearGradient id="t236" gradientUnits="userSpaceOnUse" x1="1304.7" y1="0" x2="1402.7" y2="0"><stop offset="0.000" stop-color="#0017ff"/><stop offset="0.400" stop-color="#270cff"/><stop offset="1.000" stop-color="#9500ff"/></linearGradient><linearGradient id="l237" gradientUnits="userSpaceOnUse" x1="1239.9" y1="0" x2="1542.4" y2="0"><stop offset="0.000" stop-color="#002199"/><stop offset="0.237" stop-color="#041499"/><stop offset="0.605" stop-color="#7d0099"/><stop offset="0.684" stop-color="#990094"/><stop offset="0.895" stop-color="#990059"/><stop offset="1.000" stop-color="#990047"/></linearGradient><linearGradient id="t237" gradientUnits="userSpaceOnUse" x1="1303.9" y1="0" x2="1398.0" y2="0"><stop offset="0.000" stop-color="#0016ff"/><stop offset="0.421" stop-color="#270bff"/><stop offset="1.000" stop-color="#8a00ff"/></linearGradient><linearGradient id="l238" gradientUnits="userSpaceOnUse" x1="1240.9" y1="0" x2="1536.7" y2="0"><stop offset="0.000" stop-color="#002099"/><stop offset="0.243" stop-color="#061299"/><stop offset="0.622" stop-color="#800099"/><stop offset="0.703" stop-color="#990092"/><stop offset="0.919" stop-color="#990058"/><stop offset="1.000" stop-color="#99004a"/></linearGradient><linearGradient id="t238" gradientUnits="userSpaceOnUse" x1="1303.2" y1="0" x2="1393.2" y2="0"><stop offset="0.000" stop-color="#0014ff"/><stop offset="0.474" stop-color="#2b09ff"/><stop offset="1.000" stop-color="#8000ff"/></linearGradient><linearGradient id="l239" gradientUnits="userSpaceOnUse" x1="1241.9" y1="0" x2="1531.0" y2="0"><stop offset="0.000" stop-color="#001e99"/><stop offset="0.243" stop-color="#061199"/><stop offset="0.622" stop-color="#7c0099"/><stop offset="0.703" stop-color="#990097"/><stop offset="0.919" stop-color="#99005b"/><stop offset="1.000" stop-color="#99004e"/></linearGradient><linearGradient id="t239" gradientUnits="userSpaceOnUse" x1="1302.5" y1="0" x2="1388.4" y2="0"><stop offset="0.000" stop-color="#0013ff"/><stop offset="0.500" stop-color="#2b08ff"/><stop offset="1.000" stop-color="#7700ff"/></linearGradient><linearGradient id="l240" gradientUnits="userSpaceOnUse" x1="1242.9" y1="0" x2="1525.4" y2="0"><stop offset="0.000" stop-color="#001d99"/><stop offset="0.250" stop-color="#070f99"/><stop offset="0.639" stop-color="#7e0099"/><stop offset="0.722" stop-color="#990094"/><stop offset="0.972" stop-color="#990055"/><stop offset="1.000" stop-color="#990051"/></linearGradient><linearGradient id="t240" gradientUnits="userSpaceOnUse" x1="1301.7" y1="0" x2="1383.7" y2="0"><stop offset="0.000" stop-color="#0012ff"/><stop offset="0.529" stop-color="#2b07ff"/><stop offset="1.000" stop-color="#6e00ff"/></linearGradient><linearGradient id="l241" gradientUnits="userSpaceOnUse" x1="1243.9" y1="0" x2="1519.7" y2="0"><stop offset="0.000" stop-color="#001c99"/><stop offset="0.229" stop-color="#021099"/><stop offset="0.629" stop-color="#760099"/><stop offset="0.743" stop-color="#990092"/><stop offset="1.000" stop-color="#990055"/></linearGradient><linearGradient id="t241" gradientUnits="userSpaceOnUse" x1="1301.0" y1="0" x2="1378.9" y2="0"><stop offset="0.000" stop-color="#0010ff"/><stop offset="0.563" stop-color="#2c06ff"/><stop offset="1.000" stop-color="#6500ff"/></linearGradient><linearGradient id="l242" gradientUnits="userSpaceOnUse" x1="1245.0" y1="0" x2="1514.1" y2="0"><stop offset="0.000" stop-color="#001a99"/><stop offset="0.235" stop-color="#040e99"/><stop offset="0.647" stop-color="#780099"/><stop offset="0.735" stop-color="#980099"/><stop offset="1.000" stop-color="#990058"/></linearGradient><linearGradient id="t242" gradientUnits="userSpaceOnUse" x1="1300.3" y1="0" x2="1374.1" y2="0"><stop offset="0.000" stop-color="#000fff"/><stop offset="0.600" stop-color="#2c04ff"/><stop offset="1.000" stop-color="#5c00ff"/></linearGradient><linearGradient id="l243" gradientUnits="userSpaceOnUse" x1="1246.0" y1="0" x2="1508.4" y2="0"><stop offset="0.000" stop-color="#001999"/><stop offset="0.242" stop-color="#060d99"/><stop offset="0.667" stop-color="#7b0099"/><stop offset="0.758" stop-color="#990098"/><stop offset="1.000" stop-color="#99005c"/></linearGradient><linearGradient id="t243" gradientUnits="userSpaceOnUse" x1="1299.5" y1="0" x2="1369.4" y2="0"><stop offset="0.000" stop-color="#000eff"/><stop offset="0.643" stop-color="#2d03ff"/><stop offset="1.000" stop-color="#5400ff"/></linearGradient><linearGradient id="l244" gradientUnits="userSpaceOnUse" x1="1247.1" y1="0" x2="1502.7" y2="0"><stop offset="0.000" stop-color="#001899"/><stop offset="0.250" stop-color="#080b99"/><stop offset="0.687" stop-color="#7d0099"/><stop offset="0.781" stop-color="#990095"/><stop offset="1.000" stop-color="#990060"/></linearGradient><linearGradient id="t244" gradientUnits="userSpaceOnUse" x1="1298.8" y1="0" x2="1364.6" y2="0"><stop offset="0.000" stop-color="#000dff"/><stop offset="0.643" stop-color="#2903ff"/><stop offset="1.000" stop-color="#4d00ff"/></linearGradient><linearGradient id="l245" gradientUnits="userSpaceOnUse" x1="1248.2" y1="0" x2="1497.1" y2="0"><stop offset="0.000" stop-color="#001799"/><stop offset="0.250" stop-color="#080a99"/><stop offset="0.719" stop-color="#820099"/><stop offset="0.812" stop-color="#990091"/><stop offset="1.000" stop-color="#990065"/></linearGradient><linearGradient id="t245" gradientUnits="userSpaceOnUse" x1="1298.1" y1="0" x2="1359.8" y2="0"><stop offset="0.000" stop-color="#000bff"/><stop offset="0.692" stop-color="#2902ff"/><stop offset="1.000" stop-color="#4500ff"/></linearGradient><linearGradient id="l246" gradientUnits="userSpaceOnUse" x1="1249.3" y1="0" x2="1491.4" y2="0"><stop offset="0.000" stop-color="#001599"/><stop offset="0.226" stop-color="#030a99"/><stop offset="0.710" stop-color="#7b0099"/><stop offset="0.806" stop-color="#990099"/><stop offset="1.000" stop-color="#990069"/></linearGradient><linearGradient id="t246" gradientUnits="userSpaceOnUse" x1="1297.4" y1="0" x2="1355.0" y2="0"><stop offset="0.000" stop-color="#000aff"/><stop offset="0.750" stop-color="#2901ff"/><stop offset="1.000" stop-color="#3e00ff"/></linearGradient><linearGradient id="l247" gradientUnits="userSpaceOnUse" x1="1250.4" y1="0" x2="1485.7" y2="0"><stop offset="0.000" stop-color="#001499"/><stop offset="0.233" stop-color="#040999"/><stop offset="0.733" stop-color="#7d0099"/><stop offset="0.833" stop-color="#990096"/><stop offset="1.000" stop-color="#99006e"/></linearGradient><linearGradient id="t247" gradientUnits="userSpaceOnUse" x1="1296.6" y1="0" x2="1350.3" y2="0"><stop offset="0.000" stop-color="#0009ff"/><stop offset="0.818" stop-color="#2a01ff"/><stop offset="1.000" stop-color="#3800ff"/></linearGradient><linearGradient id="l248" gradientUnits="userSpaceOnUse" x1="1251.5" y1="0" x2="1480.1" y2="0"><stop offset="0.000" stop-color="#001399"/><stop offset="0.241" stop-color="#060899"/><stop offset="0.759" stop-color="#800099"/><stop offset="0.862" stop-color="#990094"/><stop offset="1.000" stop-color="#990073"/></linearGradient><linearGradient id="t248" gradientUnits="userSpaceOnUse" x1="1295.9" y1="0" x2="1345.5" y2="0"><stop offset="0.000" stop-color="#0008ff"/><stop offset="0.900" stop-color="#2a00ff"/><stop offset="1.000" stop-color="#3100ff"/></linearGradient><linearGradient id="l249" gradientUnits="userSpaceOnUse" x1="1252.7" y1="0" x2="1474.4" y2="0"><stop offset="0.000" stop-color="#001199"/><stop offset="0.250" stop-color="#080699"/><stop offset="0.786" stop-color="#820099"/><stop offset="0.893" stop-color="#990091"/><stop offset="1.000" stop-color="#990078"/></linearGradient><linearGradient id="t249" gradientUnits="userSpaceOnUse" x1="1295.2" y1="0" x2="1340.7" y2="0"><stop offset="0.000" stop-color="#0007ff"/><stop offset="1.000" stop-color="#2b00ff"/></linearGradient><linearGradient id="l250" gradientUnits="userSpaceOnUse" x1="1253.8" y1="0" x2="1468.8" y2="0"><stop offset="0.000" stop-color="#001099"/><stop offset="0.222" stop-color="#030699"/><stop offset="0.778" stop-color="#7b0099"/><stop offset="0.889" stop-color="#990099"/><stop offset="1.000" stop-color="#99007e"/></linearGradient><linearGradient id="t250" gradientUnits="userSpaceOnUse" x1="1294.4" y1="0" x2="1336.0" y2="0"><stop offset="0.000" stop-color="#0006ff"/><stop offset="1.000" stop-color="#2600ff"/></linearGradient><linearGradient id="l251" gradientUnits="userSpaceOnUse" x1="1255.0" y1="0" x2="1463.1" y2="0"><stop offset="0.000" stop-color="#000f99"/><stop offset="0.222" stop-color="#030599"/><stop offset="0.815" stop-color="#7f0099"/><stop offset="0.926" stop-color="#990095"/><stop offset="1.000" stop-color="#990084"/></linearGradient><linearGradient id="t251" gradientUnits="userSpaceOnUse" x1="1293.7" y1="0" x2="1331.2" y2="0"><stop offset="0.000" stop-color="#0005ff"/><stop offset="1.000" stop-color="#2000ff"/></linearGradient><linearGradient id="l252" gradientUnits="userSpaceOnUse" x1="1256.2" y1="0" x2="1457.4" y2="0"><stop offset="0.000" stop-color="#000d99"/><stop offset="0.231" stop-color="#050499"/><stop offset="0.846" stop-color="#820099"/><stop offset="0.962" stop-color="#990093"/><stop offset="1.000" stop-color="#99008a"/></linearGradient><linearGradient id="t252" gradientUnits="userSpaceOnUse" x1="1293.0" y1="0" x2="1326.4" y2="0"><stop offset="0.000" stop-color="#0005ff"/><stop offset="1.000" stop-color="#1b00ff"/></linearGradient><linearGradient id="l253" gradientUnits="userSpaceOnUse" x1="1257.5" y1="0" x2="1451.8" y2="0"><stop offset="0.000" stop-color="#000c99"/><stop offset="0.240" stop-color="#070399"/><stop offset="0.880" stop-color="#840099"/><stop offset="1.000" stop-color="#990091"/></linearGradient><linearGradient id="t253" gradientUnits="userSpaceOnUse" x1="1292.2" y1="0" x2="1321.6" y2="0"><stop offset="0.000" stop-color="#0004ff"/><stop offset="1.000" stop-color="#1600ff"/></linearGradient><linearGradient id="l254" gradientUnits="userSpaceOnUse" x1="1258.7" y1="0" x2="1446.1" y2="0"><stop offset="0.000" stop-color="#000b99"/><stop offset="0.250" stop-color="#090199"/><stop offset="0.917" stop-color="#860099"/><stop offset="1.000" stop-color="#990098"/></linearGradient><linearGradient id="t254" gradientUnits="userSpaceOnUse" x1="1291.5" y1="0" x2="1316.9" y2="0"><stop offset="0.000" stop-color="#0003ff"/><stop offset="1.000" stop-color="#1200ff"/></linearGradient><linearGradient id="l255" gradientUnits="userSpaceOnUse" x1="1260.0" y1="0" x2="1440.4" y2="0"><stop offset="0.000" stop-color="#000a99"/><stop offset="0.217" stop-color="#040299"/><stop offset="0.913" stop-color="#7f0099"/><stop offset="1.000" stop-color="#930099"/></linearGradient><linearGradient id="t255" gradientUnits="userSpaceOnUse" x1="1290.8" y1="0" x2="1312.1" y2="0"><stop offset="0.000" stop-color="#0002ff"/><stop offset="1.000" stop-color="#0e00ff"/></linearGradient><linearGradient id="l256" gradientUnits="userSpaceOnUse" x1="1261.4" y1="0" x2="1434.8" y2="0"><stop offset="0.000" stop-color="#000899"/><stop offset="0.227" stop-color="#060099"/><stop offset="0.955" stop-color="#820099"/><stop offset="1.000" stop-color="#8c0099"/></linearGradient><linearGradient id="t256" gradientUnits="userSpaceOnUse" x1="1290.1" y1="0" x2="1307.3" y2="0"><stop offset="0.000" stop-color="#0002ff"/><stop offset="1.000" stop-color="#0a00ff"/></linearGradient><linearGradient id="l257" gradientUnits="userSpaceOnUse" x1="1262.8" y1="0" x2="1429.1" y2="0"><stop offset="0.000" stop-color="#000799"/><stop offset="0.238" stop-color="#080099"/><stop offset="1.000" stop-color="#850099"/></linearGradient><linearGradient id="t257" gradientUnits="userSpaceOnUse" x1="1289.3" y1="0" x2="1302.6" y2="0"><stop offset="0.000" stop-color="#0001ff"/><stop offset="1.000" stop-color="#0600ff"/></linearGradient><linearGradient id="l258" gradientUnits="userSpaceOnUse" x1="1264.2" y1="0" x2="1423.5" y2="0"><stop offset="0.000" stop-color="#000699"/><stop offset="0.250" stop-color="#0a0099"/><stop offset="1.000" stop-color="#7e0099"/></linearGradient><linearGradient id="t258" gradientUnits="userSpaceOnUse" x1="1289.0" y1="0" x2="1297.8" y2="0"><stop offset="0.000" stop-color="#0000ff"/><stop offset="1.000" stop-color="#0300ff"/></linearGradient><linearGradient id="l259" gradientUnits="userSpaceOnUse" x1="1265.6" y1="0" x2="1417.8" y2="0"><stop offset="0.000" stop-color="#000499"/><stop offset="0.250" stop-color="#0a0099"/><stop offset="1.000" stop-color="#770099"/></linearGradient><linearGradient id="l260" gradientUnits="userSpaceOnUse" x1="1267.1" y1="0" x2="1412.1" y2="0"><stop offset="0.000" stop-color="#000399"/><stop offset="0.211" stop-color="#060099"/><stop offset="1.000" stop-color="#710099"/></linearGradient><linearGradient id="l261" gradientUnits="userSpaceOnUse" x1="1268.6" y1="0" x2="1406.5" y2="0"><stop offset="0.000" stop-color="#000299"/><stop offset="0.222" stop-color="#070099"/><stop offset="1.000" stop-color="#6b0099"/></linearGradient><linearGradient id="l262" gradientUnits="userSpaceOnUse" x1="1270.3" y1="0" x2="1400.8" y2="0"><stop offset="0.000" stop-color="#000199"/><stop offset="0.294" stop-color="#0f0099"/><stop offset="1.000" stop-color="#650099"/></linearGradient><linearGradient id="l263" gradientUnits="userSpaceOnUse" x1="1271.9" y1="0" x2="1395.2" y2="0"><stop offset="0.000" stop-color="#000099"/><stop offset="0.250" stop-color="#0b0099"/><stop offset="1.000" stop-color="#5f0099"/></linearGradient><linearGradient id="l264" gradientUnits="userSpaceOnUse" x1="1273.7" y1="0" x2="1389.5" y2="0"><stop offset="0.000" stop-color="#000099"/><stop offset="0.267" stop-color="#0d0099"/><stop offset="1.000" stop-color="#5a0099"/></linearGradient><linearGradient id="l265" gradientUnits="userSpaceOnUse" x1="1275.5" y1="0" x2="1383.8" y2="0"><stop offset="0.000" stop-color="#000099"/><stop offset="0.429" stop-color="#1c0099"/><stop offset="1.000" stop-color="#540099"/></linearGradient><linearGradient id="l266" gradientUnits="userSpaceOnUse" x1="1277.5" y1="0" x2="1378.2" y2="0"><stop offset="0.000" stop-color="#000099"/><stop offset="0.769" stop-color="#390099"/><stop offset="1.000" stop-color="#4f0099"/></linearGradient><linearGradient id="l267" gradientUnits="userSpaceOnUse" x1="1279.6" y1="0" x2="1372.5" y2="0"><stop offset="0.000" stop-color="#000099"/><stop offset="1.000" stop-color="#490099"/></linearGradient><linearGradient id="l268" gradientUnits="userSpaceOnUse" x1="1281.9" y1="0" x2="1366.8" y2="0"><stop offset="0.000" stop-color="#000099"/><stop offset="1.000" stop-color="#440099"/></linearGradient><linearGradient id="l269" gradientUnits="userSpaceOnUse" x1="1284.3" y1="0" x2="1361.2" y2="0"><stop offset="0.000" stop-color="#000099"/><stop offset="1.000" stop-color="#3f0099"/></linearGradient><linearGradient id="l270" gradientUnits="userSpaceOnUse" x1="1286.8" y1="0" x2="1355.5" y2="0"><stop offset="0.000" stop-color="#030099"/><stop offset="1.000" stop-color="#3b0099"/></linearGradient><linearGradient id="l271" gradientUnits="userSpaceOnUse" x1="1289.6" y1="0" x2="1349.9" y2="0"><stop offset="0.000" stop-color="#050099"/><stop offset="1.000" stop-color="#360099"/></linearGradient><linearGradient id="l272" gradientUnits="userSpaceOnUse" x1="1292.4" y1="0" x2="1344.2" y2="0"><stop offset="0.000" stop-color="#080099"/><stop offset="1.000" stop-color="#310099"/></linearGradient><linearGradient id="l273" gradientUnits="userSpaceOnUse" x1="1295.5" y1="0" x2="1338.5" y2="0"><stop offset="0.000" stop-color="#0b0099"/><stop offset="1.000" stop-color="#2d0099"/></linearGradient><linearGradient id="l274" gradientUnits="userSpaceOnUse" x1="1298.5" y1="0" x2="1332.9" y2="0"><stop offset="0.000" stop-color="#0d0099"/><stop offset="1.000" stop-color="#290099"/></linearGradient><linearGradient id="l275" gradientUnits="userSpaceOnUse" x1="1301.5" y1="0" x2="1327.2" y2="0"><stop offset="0.000" stop-color="#100099"/><stop offset="1.000" stop-color="#240099"/></linearGradient><linearGradient id="l276" gradientUnits="userSpaceOnUse" x1="1304.4" y1="0" x2="1321.5" y2="0"><stop offset="0.000" stop-color="#130099"/><stop offset="1.000" stop-color="#200099"/></linearGradient></defs>
<g clip-path="url(#locclip)"><rect x="1214.8" y="119.7" width="34.5" height="2.6" fill="url(#l0)" /><rect x="1208.4" y="121.7" width="49.1" height="2.6" fill="url(#l1)" /><rect x="1203.8" y="123.7" width="61.1" height="2.6" fill="url(#l2)" /><rect x="1200.3" y="125.7" width="71.1" height="2.6" fill="url(#l3)" /><rect x="1197.1" y="127.7" width="79.9" height="2.6" fill="url(#l4)" /><rect x="1194.8" y="129.7" width="87.4" height="2.6" fill="url(#l5)" /><rect x="1192.5" y="131.7" width="94.5" height="2.6" fill="url(#l6)" /><rect x="1190.5" y="133.7" width="101.2" height="2.6" fill="url(#l7)" /><rect x="1188.9" y="135.7" width="107.5" height="2.6" fill="url(#l8)" /><rect x="1187.2" y="137.7" width="113.8" height="2.6" fill="url(#l9)" /><rect x="1185.7" y="139.7" width="119.8" height="2.6" fill="url(#l10)" /><rect x="1184.3" y="141.7" width="125.5" height="2.6" fill="url(#l11)" /><rect x="1183.0" y="143.7" width="131.0" height="2.6" fill="url(#l12)" /><rect x="1181.6" y="145.7" width="136.5" height="2.6" fill="url(#l13)" /><rect x="1180.5" y="147.7" width="141.6" height="2.6" fill="url(#l14)" /><rect x="1179.4" y="149.7" width="146.6" height="2.6" fill="url(#l15)" /><rect x="1178.4" y="151.7" width="151.6" height="2.6" fill="url(#l16)" /><rect x="1177.3" y="153.7" width="156.5" height="2.6" fill="url(#l17)" /><rect x="1176.3" y="155.7" width="161.2" height="2.6" fill="url(#l18)" /><rect x="1175.5" y="157.7" width="165.7" height="2.6" fill="url(#l19)" /><rect x="1174.6" y="159.7" width="170.2" height="2.6" fill="url(#l20)" /><rect x="1173.7" y="161.7" width="174.6" height="2.6" fill="url(#l21)" /><rect x="1172.9" y="163.7" width="179.0" height="2.6" fill="url(#l22)" /><rect x="1172.2" y="165.7" width="183.1" height="2.6" fill="url(#l23)" /><rect x="1171.5" y="167.7" width="187.2" height="2.6" fill="url(#l24)" /><rect x="1170.9" y="169.7" width="191.2" height="2.6" fill="url(#l25)" /><rect x="1170.2" y="171.7" width="195.3" height="2.6" fill="url(#l26)" /><rect x="1169.5" y="173.7" width="199.2" height="2.6" fill="url(#l27)" /><rect x="1169.0" y="175.7" width="203.0" height="2.6" fill="url(#l28)" /><rect x="1168.5" y="177.7" width="206.8" height="2.6" fill="url(#l29)" /><rect x="1168.0" y="179.7" width="210.5" height="2.6" fill="url(#l30)" /><rect x="1167.5" y="181.7" width="214.2" height="2.6" fill="url(#l31)" /><rect x="1167.0" y="183.7" width="217.8" height="2.6" fill="url(#l32)" /><rect x="1166.5" y="185.7" width="221.4" height="2.6" fill="url(#l33)" /><rect x="1166.1" y="187.7" width="224.9" height="2.6" fill="url(#l34)" /><rect x="1165.7" y="189.7" width="228.3" height="2.6" fill="url(#l35)" /><rect x="1165.4" y="191.7" width="231.7" height="2.6" fill="url(#l36)" /><rect x="1165.0" y="193.7" width="235.1" height="2.6" fill="url(#l37)" /><rect x="1164.6" y="195.7" width="238.5" height="2.6" fill="url(#l38)" /><rect x="1164.3" y="197.7" width="241.8" height="2.6" fill="url(#l39)" /><rect x="1164.0" y="199.7" width="245.1" height="2.6" fill="url(#l40)" /><rect x="1163.7" y="201.7" width="248.3" height="2.6" fill="url(#l41)" /><rect x="1163.5" y="203.7" width="251.5" height="2.6" fill="url(#l42)" /><rect x="1163.2" y="205.7" width="254.7" height="2.6" fill="url(#l43)" /><rect x="1162.9" y="207.7" width="257.8" height="2.6" fill="url(#l44)" /><rect x="1162.7" y="209.7" width="261.0" height="2.6" fill="url(#l45)" /><rect x="1162.5" y="211.7" width="264.1" height="2.6" fill="url(#l46)" /><rect x="1162.3" y="213.7" width="267.1" height="2.6" fill="url(#l47)" /><rect x="1162.1" y="215.7" width="270.2" height="2.6" fill="url(#l48)" /><rect x="1161.9" y="217.7" width="273.2" height="2.6" fill="url(#l49)" /><rect x="1161.7" y="219.7" width="276.2" height="2.6" fill="url(#l50)" /><rect x="1161.5" y="221.7" width="279.2" height="2.6" fill="url(#l51)" /><rect x="1161.4" y="223.7" width="282.2" height="2.6" fill="url(#l52)" /><rect x="1161.3" y="225.7" width="285.1" height="2.6" fill="url(#l53)" /><rect x="1161.2" y="227.7" width="288.0" height="2.6" fill="url(#l54)" /><rect x="1161.0" y="229.7" width="290.9" height="2.6" fill="url(#l55)" /><rect x="1160.9" y="231.7" width="293.8" height="2.6" fill="url(#l56)" /><rect x="1160.8" y="233.7" width="296.7" height="2.6" fill="url(#l57)" /><rect x="1160.7" y="235.7" width="299.5" height="2.6" fill="url(#l58)" /><rect x="1160.6" y="237.7" width="302.4" height="2.6" fill="url(#l59)" /><rect x="1160.6" y="239.7" width="305.2" height="2.6" fill="url(#l60)" /><rect x="1160.6" y="241.7" width="308.0" height="2.6" fill="url(#l61)" /><rect x="1160.5" y="243.7" width="310.7" height="2.6" fill="url(#l62)" /><rect x="1160.5" y="245.7" width="313.5" height="2.6" fill="url(#l63)" /><rect x="1160.5" y="247.7" width="316.3" height="2.6" fill="url(#l64)" /><rect x="1160.5" y="249.7" width="319.0" height="2.6" fill="url(#l65)" /><rect x="1160.4" y="251.7" width="321.8" height="2.6" fill="url(#l66)" /><rect x="1160.4" y="253.7" width="324.5" height="2.6" fill="url(#l67)" /><rect x="1160.5" y="255.7" width="327.2" height="2.6" fill="url(#l68)" /><rect x="1160.5" y="257.7" width="329.9" height="2.6" fill="url(#l69)" /><rect x="1160.5" y="259.7" width="332.5" height="2.6" fill="url(#l70)" /><rect x="1160.6" y="261.7" width="335.2" height="2.6" fill="url(#l71)" /><rect x="1160.6" y="263.7" width="337.8" height="2.6" fill="url(#l72)" /><rect x="1160.7" y="265.7" width="340.5" height="2.6" fill="url(#l73)" /><rect x="1160.7" y="267.7" width="343.1" height="2.6" fill="url(#l74)" /><rect x="1160.8" y="269.7" width="345.7" height="2.6" fill="url(#l75)" /><rect x="1160.9" y="271.7" width="348.3" height="2.6" fill="url(#l76)" /><rect x="1161.0" y="273.7" width="350.9" height="2.6" fill="url(#l77)" /><rect x="1161.1" y="275.7" width="353.4" height="2.6" fill="url(#l78)" /><rect x="1161.2" y="277.7" width="356.0" height="2.6" fill="url(#l79)" /><rect x="1161.3" y="279.7" width="358.6" height="2.6" fill="url(#l80)" /><rect x="1161.4" y="281.7" width="361.1" height="2.6" fill="url(#l81)" /><rect x="1161.5" y="283.7" width="363.7" height="2.6" fill="url(#l82)" /><rect x="1161.6" y="285.7" width="366.3" height="2.6" fill="url(#l83)" /><rect x="1161.8" y="287.7" width="368.8" height="2.6" fill="url(#l84)" /><rect x="1161.9" y="289.7" width="371.3" height="2.6" fill="url(#l85)" /><rect x="1162.1" y="291.7" width="373.8" height="2.6" fill="url(#l86)" /><rect x="1162.2" y="293.7" width="376.3" height="2.6" fill="url(#l87)" /><rect x="1162.4" y="295.7" width="378.8" height="2.6" fill="url(#l88)" /><rect x="1162.5" y="297.7" width="381.3" height="2.6" fill="url(#l89)" /><rect x="1162.7" y="299.7" width="383.9" height="2.6" fill="url(#l90)" /><rect x="1162.9" y="301.7" width="386.3" height="2.6" fill="url(#l91)" /><rect x="1163.1" y="303.7" width="388.8" height="2.6" fill="url(#l92)" /><rect x="1163.3" y="305.7" width="391.3" height="2.6" fill="url(#l93)" /><rect x="1163.4" y="307.7" width="393.7" height="2.6" fill="url(#l94)" /><rect x="1163.6" y="309.7" width="396.2" height="2.6" fill="url(#l95)" /><rect x="1163.8" y="311.7" width="398.6" height="2.6" fill="url(#l96)" /><rect x="1164.0" y="313.7" width="401.1" height="2.6" fill="url(#l97)" /><rect x="1164.2" y="315.7" width="403.5" height="2.6" fill="url(#l98)" /><rect x="1164.4" y="317.7" width="406.0" height="2.6" fill="url(#l99)" /><rect x="1164.7" y="319.7" width="408.4" height="2.6" fill="url(#l100)" /><rect x="1164.9" y="321.7" width="410.8" height="2.6" fill="url(#l101)" /><rect x="1165.1" y="323.7" width="413.2" height="2.6" fill="url(#l102)" /><rect x="1165.4" y="325.7" width="415.6" height="2.6" fill="url(#l103)" /><rect x="1165.6" y="327.7" width="418.0" height="2.6" fill="url(#l104)" /><rect x="1165.9" y="329.7" width="420.4" height="2.6" fill="url(#l105)" /><rect x="1166.1" y="331.7" width="422.8" height="2.6" fill="url(#l106)" /><rect x="1166.3" y="333.7" width="425.2" height="2.6" fill="url(#l107)" /><rect x="1166.6" y="335.7" width="427.5" height="2.6" fill="url(#l108)" /><rect x="1166.9" y="337.7" width="429.9" height="2.6" fill="url(#l109)" /><rect x="1167.2" y="339.7" width="432.2" height="2.6" fill="url(#l110)" /><rect x="1167.5" y="341.7" width="434.6" height="2.6" fill="url(#l111)" /><rect x="1167.8" y="343.7" width="436.9" height="2.6" fill="url(#l112)" /><rect x="1168.1" y="345.7" width="439.3" height="2.6" fill="url(#l113)" /><rect x="1168.3" y="347.7" width="441.6" height="2.6" fill="url(#l114)" /><rect x="1168.6" y="349.7" width="444.0" height="2.6" fill="url(#l115)" /><rect x="1168.9" y="351.7" width="446.3" height="2.6" fill="url(#l116)" /><rect x="1169.3" y="353.7" width="448.6" height="2.6" fill="url(#l117)" /><rect x="1169.6" y="355.7" width="450.9" height="2.6" fill="url(#l118)" /><rect x="1169.9" y="357.7" width="453.2" height="2.6" fill="url(#l119)" /><rect x="1170.2" y="359.7" width="455.6" height="2.6" fill="url(#l120)" /><rect x="1170.6" y="361.7" width="457.9" height="2.6" fill="url(#l121)" /><rect x="1170.9" y="363.7" width="460.2" height="2.6" fill="url(#l122)" /><rect x="1171.2" y="365.7" width="462.5" height="2.6" fill="url(#l123)" /><rect x="1171.5" y="367.7" width="464.8" height="2.6" fill="url(#l124)" /><rect x="1171.9" y="369.7" width="467.1" height="2.6" fill="url(#l125)" /><rect x="1172.3" y="371.7" width="469.4" height="2.6" fill="url(#l126)" /><rect x="1172.6" y="373.7" width="471.6" height="2.6" fill="url(#l127)" /><rect x="1173.0" y="375.7" width="473.9" height="2.6" fill="url(#l128)" /><rect x="1173.3" y="377.7" width="476.2" height="2.6" fill="url(#l129)" /><rect x="1173.7" y="379.7" width="478.5" height="2.6" fill="url(#l130)" /><rect x="1174.1" y="381.7" width="480.8" height="2.6" fill="url(#l131)" /><rect x="1174.4" y="383.7" width="483.1" height="2.6" fill="url(#l132)" /><rect x="1174.8" y="385.7" width="485.4" height="2.6" fill="url(#l133)" /><rect x="1175.2" y="387.7" width="487.6" height="2.6" fill="url(#l134)" /><rect x="1175.6" y="389.7" width="489.9" height="2.6" fill="url(#l135)" /><rect x="1175.9" y="391.7" width="492.1" height="2.6" fill="url(#l136)" /><rect x="1176.3" y="393.7" width="494.4" height="2.6" fill="url(#l137)" /><rect x="1176.7" y="395.7" width="496.6" height="2.6" fill="url(#l138)" /><rect x="1177.1" y="397.7" width="498.9" height="2.6" fill="url(#l139)" /><rect x="1177.5" y="399.7" width="501.1" height="2.6" fill="url(#l140)" /><rect x="1177.9" y="401.7" width="503.3" height="2.6" fill="url(#l141)" /><rect x="1178.3" y="403.7" width="505.5" height="2.6" fill="url(#l142)" /><rect x="1178.7" y="405.7" width="507.7" height="2.6" fill="url(#l143)" /><rect x="1179.2" y="407.7" width="509.9" height="2.6" fill="url(#l144)" /><rect x="1179.6" y="409.7" width="512.2" height="2.6" fill="url(#l145)" /><rect x="1180.0" y="411.7" width="514.4" height="2.6" fill="url(#l146)" /><rect x="1180.4" y="413.7" width="516.6" height="2.6" fill="url(#l147)" /><rect x="1180.9" y="415.7" width="518.8" height="2.6" fill="url(#l148)" /><rect x="1181.3" y="417.7" width="521.0" height="2.6" fill="url(#l149)" /><rect x="1181.7" y="419.7" width="523.2" height="2.6" fill="url(#l150)" /><rect x="1182.2" y="421.7" width="525.4" height="2.6" fill="url(#l151)" /><rect x="1182.7" y="423.7" width="527.6" height="2.6" fill="url(#l152)" /><rect x="1183.1" y="425.7" width="529.7" height="2.6" fill="url(#l153)" /><rect x="1183.6" y="427.7" width="531.9" height="2.6" fill="url(#l154)" /><rect x="1184.1" y="429.7" width="534.1" height="2.6" fill="url(#l155)" /><rect x="1184.5" y="431.7" width="536.3" height="2.6" fill="url(#l156)" /><rect x="1185.0" y="433.7" width="538.4" height="2.6" fill="url(#l157)" /><rect x="1185.5" y="435.7" width="540.6" height="2.6" fill="url(#l158)" /><rect x="1186.0" y="437.7" width="542.7" height="2.6" fill="url(#l159)" /><rect x="1186.5" y="439.7" width="544.9" height="2.6" fill="url(#l160)" /><rect x="1187.0" y="441.7" width="547.0" height="2.6" fill="url(#l161)" /><rect x="1187.5" y="443.7" width="549.2" height="2.6" fill="url(#l162)" /><rect x="1187.9" y="445.7" width="551.4" height="2.6" fill="url(#l163)" /><rect x="1188.4" y="447.7" width="553.5" height="2.6" fill="url(#l164)" /><rect x="1188.9" y="449.7" width="555.7" height="2.6" fill="url(#l165)" /><rect x="1189.5" y="451.7" width="557.8" height="2.6" fill="url(#l166)" /><rect x="1190.0" y="453.7" width="560.0" height="2.6" fill="url(#l167)" /><rect x="1190.5" y="455.7" width="562.1" height="2.6" fill="url(#l168)" /><rect x="1191.0" y="457.7" width="564.2" height="2.6" fill="url(#l169)" /><rect x="1191.6" y="459.7" width="566.3" height="2.6" fill="url(#l170)" /><rect x="1192.1" y="461.7" width="568.4" height="2.6" fill="url(#l171)" /><rect x="1192.6" y="463.7" width="570.5" height="2.6" fill="url(#l172)" /><rect x="1193.1" y="465.7" width="572.6" height="2.6" fill="url(#l173)" /><rect x="1193.7" y="467.7" width="574.7" height="2.6" fill="url(#l174)" /><rect x="1194.2" y="469.7" width="576.7" height="2.6" fill="url(#l175)" /><rect x="1194.8" y="471.7" width="578.8" height="2.6" fill="url(#l176)" /><rect x="1195.3" y="473.7" width="581.0" height="2.6" fill="url(#l177)" /><rect x="1195.9" y="475.7" width="583.1" height="2.6" fill="url(#l178)" /><rect x="1196.4" y="477.7" width="585.1" height="2.6" fill="url(#l179)" /><rect x="1197.0" y="479.7" width="587.2" height="2.6" fill="url(#l180)" /><rect x="1197.5" y="481.7" width="589.3" height="2.6" fill="url(#l181)" /><rect x="1198.1" y="483.7" width="591.3" height="2.6" fill="url(#l182)" /><rect x="1198.7" y="485.7" width="593.4" height="2.6" fill="url(#l183)" /><rect x="1199.3" y="487.7" width="595.4" height="2.6" fill="url(#l184)" /><rect x="1199.9" y="489.7" width="597.6" height="2.6" fill="url(#l185)" /><rect x="1200.4" y="491.7" width="599.6" height="2.6" fill="url(#l186)" /><rect x="1201.0" y="493.7" width="601.7" height="2.6" fill="url(#l187)" /><rect x="1201.6" y="495.7" width="603.7" height="2.6" fill="url(#l188)" /><rect x="1202.3" y="497.7" width="605.7" height="2.6" fill="url(#l189)" /><rect x="1202.9" y="499.7" width="605.1" height="2.6" fill="url(#l190)" /><rect x="1203.5" y="501.7" width="599.3" height="2.6" fill="url(#l191)" /><rect x="1204.1" y="503.7" width="593.0" height="2.6" fill="url(#l192)" /><rect x="1204.7" y="505.7" width="586.8" height="2.6" fill="url(#l193)" /><rect x="1205.4" y="507.7" width="580.5" height="2.6" fill="url(#l194)" /><rect x="1206.0" y="509.7" width="574.1" height="2.6" fill="url(#l195)" /><rect x="1206.7" y="511.7" width="567.8" height="2.6" fill="url(#l196)" /><rect x="1207.3" y="513.7" width="561.5" height="2.6" fill="url(#l197)" /><rect x="1208.0" y="515.7" width="555.2" height="2.6" fill="url(#l198)" /><rect x="1208.6" y="517.7" width="548.9" height="2.6" fill="url(#l199)" /><rect x="1209.3" y="519.7" width="542.6" height="2.6" fill="url(#l200)" /><rect x="1210.0" y="521.7" width="536.2" height="2.6" fill="url(#l201)" /><rect x="1210.7" y="523.7" width="529.9" height="2.6" fill="url(#l202)" /><rect x="1211.3" y="525.7" width="523.5" height="2.6" fill="url(#l203)" /><rect x="1212.0" y="527.7" width="517.2" height="2.6" fill="url(#l204)" /><rect x="1212.7" y="529.7" width="510.8" height="2.6" fill="url(#l205)" /><rect x="1213.4" y="531.7" width="504.5" height="2.6" fill="url(#l206)" /><rect x="1214.1" y="533.7" width="498.1" height="2.6" fill="url(#l207)" /><rect x="1214.9" y="535.7" width="491.7" height="2.6" fill="url(#l208)" /><rect x="1215.6" y="537.7" width="485.3" height="2.6" fill="url(#l209)" /><rect x="1216.3" y="539.7" width="478.9" height="2.6" fill="url(#l210)" /><rect x="1217.0" y="541.7" width="472.5" height="2.6" fill="url(#l211)" /><rect x="1217.8" y="543.7" width="466.1" height="2.6" fill="url(#l212)" /><rect x="1218.6" y="545.7" width="459.7" height="2.6" fill="url(#l213)" /><rect x="1219.4" y="547.7" width="453.2" height="2.6" fill="url(#l214)" /><rect x="1220.1" y="549.7" width="446.8" height="2.6" fill="url(#l215)" /><rect x="1220.9" y="551.7" width="440.4" height="2.6" fill="url(#l216)" /><rect x="1221.7" y="553.7" width="433.9" height="2.6" fill="url(#l217)" /><rect x="1222.5" y="555.7" width="427.4" height="2.6" fill="url(#l218)" /><rect x="1223.4" y="557.7" width="420.9" height="2.6" fill="url(#l219)" /><rect x="1224.2" y="559.7" width="414.4" height="2.6" fill="url(#l220)" /><rect x="1225.1" y="561.7" width="407.9" height="2.6" fill="url(#l221)" /><rect x="1225.9" y="563.7" width="401.4" height="2.6" fill="url(#l222)" /><rect x="1226.8" y="565.7" width="394.8" height="2.6" fill="url(#l223)" /><rect x="1227.7" y="567.7" width="388.2" height="2.6" fill="url(#l224)" /><rect x="1228.6" y="569.7" width="381.7" height="2.6" fill="url(#l225)" /><rect x="1229.5" y="571.7" width="375.1" height="2.6" fill="url(#l226)" /><rect x="1230.4" y="573.7" width="368.5" height="2.6" fill="url(#l227)" /><rect x="1231.4" y="575.7" width="361.9" height="2.6" fill="url(#l228)" /><rect x="1232.3" y="577.7" width="355.3" height="2.6" fill="url(#l229)" /><rect x="1233.2" y="579.7" width="348.7" height="2.6" fill="url(#l230)" /><rect x="1234.2" y="581.7" width="342.1" height="2.6" fill="url(#l231)" /><rect x="1235.1" y="583.7" width="335.5" height="2.6" fill="url(#l232)" /><rect x="1236.1" y="585.7" width="328.9" height="2.6" fill="url(#l233)" /><rect x="1237.0" y="587.7" width="322.3" height="2.6" fill="url(#l234)" /><rect x="1238.0" y="589.7" width="315.7" height="2.6" fill="url(#l235)" /><rect x="1239.0" y="591.7" width="309.1" height="2.6" fill="url(#l236)" /><rect x="1239.9" y="593.7" width="302.4" height="2.6" fill="url(#l237)" /><rect x="1240.9" y="595.7" width="295.8" height="2.6" fill="url(#l238)" /><rect x="1241.9" y="597.7" width="289.1" height="2.6" fill="url(#l239)" /><rect x="1242.9" y="599.7" width="282.5" height="2.6" fill="url(#l240)" /><rect x="1243.9" y="601.7" width="275.8" height="2.6" fill="url(#l241)" /><rect x="1245.0" y="603.7" width="269.1" height="2.6" fill="url(#l242)" /><rect x="1246.0" y="605.7" width="262.4" height="2.6" fill="url(#l243)" /><rect x="1247.1" y="607.7" width="255.6" height="2.6" fill="url(#l244)" /><rect x="1248.2" y="609.7" width="248.9" height="2.6" fill="url(#l245)" /><rect x="1249.3" y="611.7" width="242.1" height="2.6" fill="url(#l246)" /><rect x="1250.4" y="613.7" width="235.4" height="2.6" fill="url(#l247)" /><rect x="1251.5" y="615.7" width="228.6" height="2.6" fill="url(#l248)" /><rect x="1252.7" y="617.7" width="221.8" height="2.6" fill="url(#l249)" /><rect x="1253.8" y="619.7" width="214.9" height="2.6" fill="url(#l250)" /><rect x="1255.0" y="621.7" width="208.1" height="2.6" fill="url(#l251)" /><rect x="1256.2" y="623.7" width="201.2" height="2.6" fill="url(#l252)" /><rect x="1257.5" y="625.7" width="194.3" height="2.6" fill="url(#l253)" /><rect x="1258.7" y="627.7" width="187.4" height="2.6" fill="url(#l254)" /><rect x="1260.0" y="629.7" width="180.4" height="2.6" fill="url(#l255)" /><rect x="1261.4" y="631.7" width="173.4" height="2.6" fill="url(#l256)" /><rect x="1262.8" y="633.7" width="166.3" height="2.6" fill="url(#l257)" /><rect x="1264.2" y="635.7" width="159.3" height="2.6" fill="url(#l258)" /><rect x="1265.6" y="637.7" width="152.2" height="2.6" fill="url(#l259)" /><rect x="1267.1" y="639.7" width="145.0" height="2.6" fill="url(#l260)" /><rect x="1268.6" y="641.7" width="137.8" height="2.6" fill="url(#l261)" /><rect x="1270.3" y="643.7" width="130.6" height="2.6" fill="url(#l262)" /><rect x="1271.9" y="645.7" width="123.2" height="2.6" fill="url(#l263)" /><rect x="1273.7" y="647.7" width="115.8" height="2.6" fill="url(#l264)" /><rect x="1275.5" y="649.7" width="108.3" height="2.6" fill="url(#l265)" /><rect x="1277.5" y="651.7" width="100.7" height="2.6" fill="url(#l266)" /><rect x="1279.6" y="653.7" width="93.0" height="2.6" fill="url(#l267)" /><rect x="1281.9" y="655.7" width="85.0" height="2.6" fill="url(#l268)" /><rect x="1284.3" y="657.7" width="76.9" height="2.6" fill="url(#l269)" /><rect x="1286.8" y="659.7" width="68.7" height="2.6" fill="url(#l270)" /><rect x="1289.6" y="661.7" width="60.3" height="2.6" fill="url(#l271)" /><rect x="1292.4" y="663.7" width="51.7" height="2.6" fill="url(#l272)" /><rect x="1295.5" y="665.7" width="43.1" height="2.6" fill="url(#l273)" /><rect x="1298.5" y="667.7" width="34.4" height="2.6" fill="url(#l274)" /><rect x="1301.5" y="669.7" width="25.7" height="2.6" fill="url(#l275)" /><rect x="1304.4" y="671.7" width="17.2" height="2.6" fill="url(#l276)" /></g>
<g clip-path="url(#triclip)"><rect x="1420.0" y="275.7" width="8.8" height="2.6" fill="url(#t78)" /><rect x="1419.3" y="277.7" width="12.8" height="2.6" fill="url(#t79)" /><rect x="1418.6" y="279.7" width="16.8" height="2.6" fill="url(#t80)" /><rect x="1417.8" y="281.7" width="20.9" height="2.6" fill="url(#t81)" /><rect x="1417.1" y="283.7" width="24.9" height="2.6" fill="url(#t82)" /><rect x="1416.4" y="285.7" width="29.0" height="2.6" fill="url(#t83)" /><rect x="1415.7" y="287.7" width="33.0" height="2.6" fill="url(#t84)" /><rect x="1414.9" y="289.7" width="37.1" height="2.6" fill="url(#t85)" /><rect x="1414.2" y="291.7" width="41.1" height="2.6" fill="url(#t86)" /><rect x="1413.5" y="293.7" width="45.1" height="2.6" fill="url(#t87)" /><rect x="1412.7" y="295.7" width="49.2" height="2.6" fill="url(#t88)" /><rect x="1412.0" y="297.7" width="53.2" height="2.6" fill="url(#t89)" /><rect x="1411.3" y="299.7" width="57.3" height="2.6" fill="url(#t90)" /><rect x="1410.5" y="301.7" width="61.3" height="2.6" fill="url(#t91)" /><rect x="1409.8" y="303.7" width="65.3" height="2.6" fill="url(#t92)" /><rect x="1409.1" y="305.7" width="69.4" height="2.6" fill="url(#t93)" /><rect x="1408.4" y="307.7" width="73.4" height="2.6" fill="url(#t94)" /><rect x="1407.6" y="309.7" width="77.5" height="2.6" fill="url(#t95)" /><rect x="1406.9" y="311.7" width="81.5" height="2.6" fill="url(#t96)" /><rect x="1406.2" y="313.7" width="85.5" height="2.6" fill="url(#t97)" /><rect x="1405.4" y="315.7" width="89.6" height="2.6" fill="url(#t98)" /><rect x="1404.7" y="317.7" width="93.6" height="2.6" fill="url(#t99)" /><rect x="1404.0" y="319.7" width="97.7" height="2.6" fill="url(#t100)" /><rect x="1403.2" y="321.7" width="101.7" height="2.6" fill="url(#t101)" /><rect x="1402.5" y="323.7" width="105.7" height="2.6" fill="url(#t102)" /><rect x="1401.8" y="325.7" width="109.8" height="2.6" fill="url(#t103)" /><rect x="1401.1" y="327.7" width="113.8" height="2.6" fill="url(#t104)" /><rect x="1400.3" y="329.7" width="117.9" height="2.6" fill="url(#t105)" /><rect x="1399.6" y="331.7" width="121.9" height="2.6" fill="url(#t106)" /><rect x="1398.9" y="333.7" width="126.0" height="2.6" fill="url(#t107)" /><rect x="1398.1" y="335.7" width="130.0" height="2.6" fill="url(#t108)" /><rect x="1397.4" y="337.7" width="134.0" height="2.6" fill="url(#t109)" /><rect x="1396.7" y="339.7" width="138.1" height="2.6" fill="url(#t110)" /><rect x="1395.9" y="341.7" width="142.1" height="2.6" fill="url(#t111)" /><rect x="1395.2" y="343.7" width="146.2" height="2.6" fill="url(#t112)" /><rect x="1394.5" y="345.7" width="150.2" height="2.6" fill="url(#t113)" /><rect x="1393.8" y="347.7" width="154.2" height="2.6" fill="url(#t114)" /><rect x="1393.0" y="349.7" width="158.3" height="2.6" fill="url(#t115)" /><rect x="1392.3" y="351.7" width="162.3" height="2.6" fill="url(#t116)" /><rect x="1391.6" y="353.7" width="166.4" height="2.6" fill="url(#t117)" /><rect x="1390.8" y="355.7" width="170.4" height="2.6" fill="url(#t118)" /><rect x="1390.1" y="357.7" width="174.4" height="2.6" fill="url(#t119)" /><rect x="1389.4" y="359.7" width="178.5" height="2.6" fill="url(#t120)" /><rect x="1388.6" y="361.7" width="182.5" height="2.6" fill="url(#t121)" /><rect x="1387.9" y="363.7" width="186.6" height="2.6" fill="url(#t122)" /><rect x="1387.2" y="365.7" width="190.6" height="2.6" fill="url(#t123)" /><rect x="1386.4" y="367.7" width="194.6" height="2.6" fill="url(#t124)" /><rect x="1385.7" y="369.7" width="198.7" height="2.6" fill="url(#t125)" /><rect x="1385.0" y="371.7" width="202.7" height="2.6" fill="url(#t126)" /><rect x="1384.3" y="373.7" width="206.8" height="2.6" fill="url(#t127)" /><rect x="1383.5" y="375.7" width="210.8" height="2.6" fill="url(#t128)" /><rect x="1382.8" y="377.7" width="214.8" height="2.6" fill="url(#t129)" /><rect x="1382.1" y="379.7" width="218.9" height="2.6" fill="url(#t130)" /><rect x="1381.3" y="381.7" width="222.9" height="2.6" fill="url(#t131)" /><rect x="1380.6" y="383.7" width="227.0" height="2.6" fill="url(#t132)" /><rect x="1379.9" y="385.7" width="231.0" height="2.6" fill="url(#t133)" /><rect x="1379.1" y="387.7" width="235.1" height="2.6" fill="url(#t134)" /><rect x="1378.4" y="389.7" width="239.1" height="2.6" fill="url(#t135)" /><rect x="1377.7" y="391.7" width="243.1" height="2.6" fill="url(#t136)" /><rect x="1377.0" y="393.7" width="247.2" height="2.6" fill="url(#t137)" /><rect x="1376.2" y="395.7" width="251.2" height="2.6" fill="url(#t138)" /><rect x="1375.5" y="397.7" width="255.3" height="2.6" fill="url(#t139)" /><rect x="1374.8" y="399.7" width="259.3" height="2.6" fill="url(#t140)" /><rect x="1374.0" y="401.7" width="263.3" height="2.6" fill="url(#t141)" /><rect x="1373.3" y="403.7" width="267.4" height="2.6" fill="url(#t142)" /><rect x="1372.6" y="405.7" width="271.4" height="2.6" fill="url(#t143)" /><rect x="1371.8" y="407.7" width="275.5" height="2.6" fill="url(#t144)" /><rect x="1371.1" y="409.7" width="279.5" height="2.6" fill="url(#t145)" /><rect x="1370.4" y="411.7" width="283.5" height="2.6" fill="url(#t146)" /><rect x="1369.7" y="413.7" width="287.6" height="2.6" fill="url(#t147)" /><rect x="1368.9" y="415.7" width="291.6" height="2.6" fill="url(#t148)" /><rect x="1368.2" y="417.7" width="295.7" height="2.6" fill="url(#t149)" /><rect x="1367.5" y="419.7" width="299.7" height="2.6" fill="url(#t150)" /><rect x="1366.7" y="421.7" width="303.7" height="2.6" fill="url(#t151)" /><rect x="1366.0" y="423.7" width="307.8" height="2.6" fill="url(#t152)" /><rect x="1365.3" y="425.7" width="311.8" height="2.6" fill="url(#t153)" /><rect x="1364.5" y="427.7" width="315.9" height="2.6" fill="url(#t154)" /><rect x="1363.8" y="429.7" width="319.9" height="2.6" fill="url(#t155)" /><rect x="1363.1" y="431.7" width="323.9" height="2.6" fill="url(#t156)" /><rect x="1362.3" y="433.7" width="328.0" height="2.6" fill="url(#t157)" /><rect x="1361.6" y="435.7" width="332.0" height="2.6" fill="url(#t158)" /><rect x="1360.9" y="437.7" width="336.1" height="2.6" fill="url(#t159)" /><rect x="1360.2" y="439.7" width="340.1" height="2.6" fill="url(#t160)" /><rect x="1359.4" y="441.7" width="344.2" height="2.6" fill="url(#t161)" /><rect x="1358.7" y="443.7" width="348.2" height="2.6" fill="url(#t162)" /><rect x="1358.0" y="445.7" width="352.2" height="2.6" fill="url(#t163)" /><rect x="1357.2" y="447.7" width="356.3" height="2.6" fill="url(#t164)" /><rect x="1356.5" y="449.7" width="360.3" height="2.6" fill="url(#t165)" /><rect x="1355.8" y="451.7" width="364.4" height="2.6" fill="url(#t166)" /><rect x="1355.0" y="453.7" width="368.4" height="2.6" fill="url(#t167)" /><rect x="1354.3" y="455.7" width="370.5" height="2.6" fill="url(#t168)" /><rect x="1353.6" y="457.7" width="368.8" height="2.6" fill="url(#t169)" /><rect x="1352.9" y="459.7" width="364.8" height="2.6" fill="url(#t170)" /><rect x="1352.1" y="461.7" width="360.7" height="2.6" fill="url(#t171)" /><rect x="1351.4" y="463.7" width="356.7" height="2.6" fill="url(#t172)" /><rect x="1350.7" y="465.7" width="352.7" height="2.6" fill="url(#t173)" /><rect x="1349.9" y="467.7" width="348.6" height="2.6" fill="url(#t174)" /><rect x="1349.2" y="469.7" width="344.6" height="2.6" fill="url(#t175)" /><rect x="1348.5" y="471.7" width="340.5" height="2.6" fill="url(#t176)" /><rect x="1347.7" y="473.7" width="336.5" height="2.6" fill="url(#t177)" /><rect x="1347.0" y="475.7" width="332.5" height="2.6" fill="url(#t178)" /><rect x="1346.3" y="477.7" width="328.4" height="2.6" fill="url(#t179)" /><rect x="1345.6" y="479.7" width="324.4" height="2.6" fill="url(#t180)" /><rect x="1344.8" y="481.7" width="320.3" height="2.6" fill="url(#t181)" /><rect x="1344.1" y="483.7" width="316.3" height="2.6" fill="url(#t182)" /><rect x="1343.4" y="485.7" width="312.2" height="2.6" fill="url(#t183)" /><rect x="1342.6" y="487.7" width="308.2" height="2.6" fill="url(#t184)" /><rect x="1341.9" y="489.7" width="304.2" height="2.6" fill="url(#t185)" /><rect x="1341.2" y="491.7" width="300.1" height="2.6" fill="url(#t186)" /><rect x="1340.4" y="493.7" width="296.1" height="2.6" fill="url(#t187)" /><rect x="1339.7" y="495.7" width="292.0" height="2.6" fill="url(#t188)" /><rect x="1339.0" y="497.7" width="288.0" height="2.6" fill="url(#t189)" /><rect x="1338.3" y="499.7" width="284.0" height="2.6" fill="url(#t190)" /><rect x="1337.5" y="501.7" width="279.9" height="2.6" fill="url(#t191)" /><rect x="1336.8" y="503.7" width="275.9" height="2.6" fill="url(#t192)" /><rect x="1336.1" y="505.7" width="271.8" height="2.6" fill="url(#t193)" /><rect x="1335.3" y="507.7" width="267.8" height="2.6" fill="url(#t194)" /><rect x="1334.6" y="509.7" width="263.8" height="2.6" fill="url(#t195)" /><rect x="1333.9" y="511.7" width="259.7" height="2.6" fill="url(#t196)" /><rect x="1333.1" y="513.7" width="255.7" height="2.6" fill="url(#t197)" /><rect x="1332.4" y="515.7" width="251.6" height="2.6" fill="url(#t198)" /><rect x="1331.7" y="517.7" width="247.6" height="2.6" fill="url(#t199)" /><rect x="1330.9" y="519.7" width="243.6" height="2.6" fill="url(#t200)" /><rect x="1330.2" y="521.7" width="239.5" height="2.6" fill="url(#t201)" /><rect x="1329.5" y="523.7" width="235.5" height="2.6" fill="url(#t202)" /><rect x="1328.8" y="525.7" width="231.4" height="2.6" fill="url(#t203)" /><rect x="1328.0" y="527.7" width="227.4" height="2.6" fill="url(#t204)" /><rect x="1327.3" y="529.7" width="223.4" height="2.6" fill="url(#t205)" /><rect x="1326.6" y="531.7" width="219.3" height="2.6" fill="url(#t206)" /><rect x="1325.8" y="533.7" width="215.3" height="2.6" fill="url(#t207)" /><rect x="1325.1" y="535.7" width="211.2" height="2.6" fill="url(#t208)" /><rect x="1324.4" y="537.7" width="207.2" height="2.6" fill="url(#t209)" /><rect x="1323.6" y="539.7" width="203.1" height="2.6" fill="url(#t210)" /><rect x="1322.9" y="541.7" width="199.1" height="2.6" fill="url(#t211)" /><rect x="1322.2" y="543.7" width="195.1" height="2.6" fill="url(#t212)" /><rect x="1321.5" y="545.7" width="191.0" height="2.6" fill="url(#t213)" /><rect x="1320.7" y="547.7" width="187.0" height="2.6" fill="url(#t214)" /><rect x="1320.0" y="549.7" width="182.9" height="2.6" fill="url(#t215)" /><rect x="1319.3" y="551.7" width="178.9" height="2.6" fill="url(#t216)" /><rect x="1318.5" y="553.7" width="174.9" height="2.6" fill="url(#t217)" /><rect x="1317.8" y="555.7" width="170.8" height="2.6" fill="url(#t218)" /><rect x="1317.1" y="557.7" width="166.8" height="2.6" fill="url(#t219)" /><rect x="1316.3" y="559.7" width="162.7" height="2.6" fill="url(#t220)" /><rect x="1315.6" y="561.7" width="158.7" height="2.6" fill="url(#t221)" /><rect x="1314.9" y="563.7" width="154.7" height="2.6" fill="url(#t222)" /><rect x="1314.2" y="565.7" width="150.6" height="2.6" fill="url(#t223)" /><rect x="1313.4" y="567.7" width="146.6" height="2.6" fill="url(#t224)" /><rect x="1312.7" y="569.7" width="142.5" height="2.6" fill="url(#t225)" /><rect x="1312.0" y="571.7" width="138.5" height="2.6" fill="url(#t226)" /><rect x="1311.2" y="573.7" width="134.5" height="2.6" fill="url(#t227)" /><rect x="1310.5" y="575.7" width="130.4" height="2.6" fill="url(#t228)" /><rect x="1309.8" y="577.7" width="126.4" height="2.6" fill="url(#t229)" /><rect x="1309.0" y="579.7" width="122.3" height="2.6" fill="url(#t230)" /><rect x="1308.3" y="581.7" width="118.3" height="2.6" fill="url(#t231)" /><rect x="1307.6" y="583.7" width="114.3" height="2.6" fill="url(#t232)" /><rect x="1306.8" y="585.7" width="110.2" height="2.6" fill="url(#t233)" /><rect x="1306.1" y="587.7" width="106.2" height="2.6" fill="url(#t234)" /><rect x="1305.4" y="589.7" width="102.1" height="2.6" fill="url(#t235)" /><rect x="1304.7" y="591.7" width="98.1" height="2.6" fill="url(#t236)" /><rect x="1303.9" y="593.7" width="94.0" height="2.6" fill="url(#t237)" /><rect x="1303.2" y="595.7" width="90.0" height="2.6" fill="url(#t238)" /><rect x="1302.5" y="597.7" width="86.0" height="2.6" fill="url(#t239)" /><rect x="1301.7" y="599.7" width="81.9" height="2.6" fill="url(#t240)" /><rect x="1301.0" y="601.7" width="77.9" height="2.6" fill="url(#t241)" /><rect x="1300.3" y="603.7" width="73.8" height="2.6" fill="url(#t242)" /><rect x="1299.5" y="605.7" width="69.8" height="2.6" fill="url(#t243)" /><rect x="1298.8" y="607.7" width="65.8" height="2.6" fill="url(#t244)" /><rect x="1298.1" y="609.7" width="61.7" height="2.6" fill="url(#t245)" /><rect x="1297.4" y="611.7" width="57.7" height="2.6" fill="url(#t246)" /><rect x="1296.6" y="613.7" width="53.6" height="2.6" fill="url(#t247)" /><rect x="1295.9" y="615.7" width="49.6" height="2.6" fill="url(#t248)" /><rect x="1295.2" y="617.7" width="45.6" height="2.6" fill="url(#t249)" /><rect x="1294.4" y="619.7" width="41.5" height="2.6" fill="url(#t250)" /><rect x="1293.7" y="621.7" width="37.5" height="2.6" fill="url(#t251)" /><rect x="1293.0" y="623.7" width="33.4" height="2.6" fill="url(#t252)" /><rect x="1292.2" y="625.7" width="29.4" height="2.6" fill="url(#t253)" /><rect x="1291.5" y="627.7" width="25.4" height="2.6" fill="url(#t254)" /><rect x="1290.8" y="629.7" width="21.3" height="2.6" fill="url(#t255)" /><rect x="1290.1" y="631.7" width="17.3" height="2.6" fill="url(#t256)" /><rect x="1289.3" y="633.7" width="13.2" height="2.6" fill="url(#t257)" /><rect x="1289.0" y="635.7" width="8.8" height="2.6" fill="url(#t258)" /></g>
<line x1="1313.0" y1="676.5" x2="1813.1" y2="502.6" stroke="#4a1e40" stroke-width="1" stroke-opacity="0.8"/>
<path d="M1160.2,677.3 V115.5 H1898.8 V677.3" fill="none" stroke="#a0a0a0" stroke-width="1.5"/>
<line x1="1159.5" y1="677.3" x2="1899.5" y2="677.3" stroke="#a8a8a8" stroke-width="1.6" />
<line x1="1160.2" y1="677.3" x2="1160.2" y2="683.3" stroke="#a8a8a8" stroke-width="1.4" />
<text x="1160.2" y="702.4" font-size="16.5" fill="#dcdcdc" text-anchor="middle">0</text>
<line x1="1154.2" y1="677.3" x2="1160.2" y2="677.3" stroke="#a8a8a8" stroke-width="1.4" />
<text x="1153.0" y="684.9" font-size="16.5" fill="#dcdcdc" text-anchor="end">0</text>
<line x1="1248.0" y1="677.3" x2="1248.0" y2="683.3" stroke="#a8a8a8" stroke-width="1.4" />
<text x="1248.0" y="702.4" font-size="16.5" fill="#dcdcdc" text-anchor="middle">0,1</text>
<line x1="1154.2" y1="610.5" x2="1160.2" y2="610.5" stroke="#a8a8a8" stroke-width="1.4" />
<text x="1153.0" y="618.1" font-size="16.5" fill="#dcdcdc" text-anchor="end">0,1</text>
<line x1="1335.8" y1="677.3" x2="1335.8" y2="683.3" stroke="#a8a8a8" stroke-width="1.4" />
<text x="1335.8" y="702.4" font-size="16.5" fill="#dcdcdc" text-anchor="middle">0,2</text>
<line x1="1154.2" y1="543.7" x2="1160.2" y2="543.7" stroke="#a8a8a8" stroke-width="1.4" />
<text x="1153.0" y="551.3" font-size="16.5" fill="#dcdcdc" text-anchor="end">0,2</text>
<line x1="1423.5" y1="677.3" x2="1423.5" y2="683.3" stroke="#a8a8a8" stroke-width="1.4" />
<text x="1423.5" y="702.4" font-size="16.5" fill="#dcdcdc" text-anchor="middle">0,3</text>
<line x1="1154.2" y1="477.0" x2="1160.2" y2="477.0" stroke="#a8a8a8" stroke-width="1.4" />
<text x="1153.0" y="484.6" font-size="16.5" fill="#dcdcdc" text-anchor="end">0,3</text>
<line x1="1511.3" y1="677.3" x2="1511.3" y2="683.3" stroke="#a8a8a8" stroke-width="1.4" />
<text x="1511.3" y="702.4" font-size="16.5" fill="#dcdcdc" text-anchor="middle">0,4</text>
<line x1="1154.2" y1="410.2" x2="1160.2" y2="410.2" stroke="#a8a8a8" stroke-width="1.4" />
<text x="1153.0" y="417.8" font-size="16.5" fill="#dcdcdc" text-anchor="end">0,4</text>
<line x1="1599.1" y1="677.3" x2="1599.1" y2="683.3" stroke="#a8a8a8" stroke-width="1.4" />
<text x="1599.1" y="702.4" font-size="16.5" fill="#dcdcdc" text-anchor="middle">0,5</text>
<line x1="1154.2" y1="343.4" x2="1160.2" y2="343.4" stroke="#a8a8a8" stroke-width="1.4" />
<text x="1153.0" y="351.0" font-size="16.5" fill="#dcdcdc" text-anchor="end">0,5</text>
<line x1="1686.9" y1="677.3" x2="1686.9" y2="683.3" stroke="#a8a8a8" stroke-width="1.4" />
<text x="1686.9" y="702.4" font-size="16.5" fill="#dcdcdc" text-anchor="middle">0,6</text>
<line x1="1154.2" y1="276.6" x2="1160.2" y2="276.6" stroke="#a8a8a8" stroke-width="1.4" />
<text x="1153.0" y="284.2" font-size="16.5" fill="#dcdcdc" text-anchor="end">0,6</text>
<line x1="1774.7" y1="677.3" x2="1774.7" y2="683.3" stroke="#a8a8a8" stroke-width="1.4" />
<text x="1774.7" y="702.4" font-size="16.5" fill="#dcdcdc" text-anchor="middle">0,7</text>
<line x1="1154.2" y1="209.8" x2="1160.2" y2="209.8" stroke="#a8a8a8" stroke-width="1.4" />
<text x="1153.0" y="217.4" font-size="16.5" fill="#dcdcdc" text-anchor="end">0,7</text>
<line x1="1862.4" y1="677.3" x2="1862.4" y2="683.3" stroke="#a8a8a8" stroke-width="1.4" />
<text x="1862.4" y="702.4" font-size="16.5" fill="#dcdcdc" text-anchor="middle">0,8</text>
<line x1="1154.2" y1="143.1" x2="1160.2" y2="143.1" stroke="#a8a8a8" stroke-width="1.4" />
<text x="1153.0" y="150.7" font-size="16.5" fill="#dcdcdc" text-anchor="end">0,8</text>
<rect x="1414.7" y="268.2" width="15.2" height="15.2" fill="none" stroke="#ffffff" stroke-width="2"/>
<rect x="1419.6" y="341.4" width="15.2" height="15.2" fill="none" stroke="#ffffff" stroke-width="2"/>
<rect x="1481.9" y="339.8" width="15.2" height="15.2" fill="none" stroke="#ffffff" stroke-width="2"/>
<rect x="1520.4" y="332.0" width="15.2" height="15.2" fill="none" stroke="#ffffff" stroke-width="2"/>
<rect x="1545.3" y="352.3" width="15.2" height="15.2" fill="none" stroke="#ffffff" stroke-width="2"/>
<rect x="1568.7" y="376.2" width="15.2" height="15.2" fill="none" stroke="#ffffff" stroke-width="2"/>
<rect x="1602.7" y="397.4" width="15.2" height="15.2" fill="none" stroke="#ffffff" stroke-width="2"/>
<rect x="1450.3" y="383.6" width="15.2" height="15.2" fill="none" stroke="#ffffff" stroke-width="2"/>
<rect x="1381.8" y="428.4" width="15.2" height="15.2" fill="none" stroke="#ffffff" stroke-width="2"/>
<rect x="1349.2" y="449.9" width="15.2" height="15.2" fill="none" stroke="#ffffff" stroke-width="2"/>
<rect x="1484.1" y="431.0" width="15.2" height="15.2" fill="none" stroke="#ffffff" stroke-width="2"/>
<rect x="1503.1" y="425.3" width="15.2" height="15.2" fill="none" stroke="#ffffff" stroke-width="2"/>
<rect x="1557.5" y="461.0" width="15.2" height="15.2" fill="none" stroke="#ffffff" stroke-width="2"/>
<rect x="1624.3" y="457.7" width="15.2" height="15.2" fill="none" stroke="#ffffff" stroke-width="2"/>
<rect x="1714.4" y="448.3" width="15.2" height="15.2" fill="none" stroke="#ffffff" stroke-width="2"/>
<rect x="1334.3" y="488.7" width="15.2" height="15.2" fill="none" stroke="#ffffff" stroke-width="2"/>
<rect x="1371.1" y="492.2" width="15.2" height="15.2" fill="none" stroke="#ffffff" stroke-width="2"/>
<rect x="1385.7" y="500.4" width="15.2" height="15.2" fill="none" stroke="#ffffff" stroke-width="2"/>
<rect x="1407.5" y="521.2" width="15.2" height="15.2" fill="none" stroke="#ffffff" stroke-width="2"/>
<rect x="1341.8" y="541.7" width="15.2" height="15.2" fill="none" stroke="#ffffff" stroke-width="2"/>
<rect x="1319.9" y="575.9" width="15.2" height="15.2" fill="none" stroke="#ffffff" stroke-width="2"/>
<rect x="1480.2" y="504.3" width="15.2" height="15.2" fill="none" stroke="#ffffff" stroke-width="2"/>
<rect x="1433.6" y="566.2" width="15.2" height="15.2" fill="none" stroke="#ffffff" stroke-width="2"/>
<rect x="1282.5" y="628.7" width="15.2" height="15.2" fill="none" stroke="#ffffff" stroke-width="2"/>
<rect x="1426.9" y="450.4" width="15.6" height="15.6" fill="none" stroke="#000000" stroke-width="2.4"/>
<circle cx="1338.8" cy="187.7" r="5" fill="#20e020" stroke="#000" stroke-width="1.35"/>
<circle cx="1391.1" cy="322.5" r="5" fill="#4f7a4f" stroke="#000" stroke-width="1.35"/>
<circle cx="1490.8" cy="331.8" r="5" fill="#a3a34a" stroke="#000" stroke-width="1.35"/>
<circle cx="1551.4" cy="327.2" r="5" fill="#f0d020" stroke="#000" stroke-width="1.35"/>
<circle cx="1581.0" cy="355.2" r="5" fill="#e8b440" stroke="#000" stroke-width="1.35"/>
<circle cx="1611.8" cy="386.4" r="5" fill="#d89a40" stroke="#000" stroke-width="1.35"/>
<circle cx="1653.7" cy="414.2" r="5" fill="#d98a40" stroke="#000" stroke-width="1.35"/>
<circle cx="1456.7" cy="381.7" r="5" fill="#4f5f45" stroke="#000" stroke-width="1.35"/>
<circle cx="1363.4" cy="421.7" r="5" fill="#66ad95" stroke="#000" stroke-width="1.35"/>
<circle cx="1307.7" cy="443.5" r="5" fill="#22e4f2" stroke="#000" stroke-width="1.35"/>
<circle cx="1302.8" cy="488.4" r="5" fill="#2293a0" stroke="#000" stroke-width="1.35"/>
<circle cx="1374.4" cy="491.7" r="5" fill="#6a82a0" stroke="#000" stroke-width="1.35"/>
<circle cx="1399.2" cy="502.8" r="5" fill="#8a8aa0" stroke="#000" stroke-width="1.35"/>
<circle cx="1437.9" cy="518.1" r="5" fill="#5a3e5e" stroke="#000" stroke-width="1.35"/>
<circle cx="1414.5" cy="483.6" r="5" fill="#000000" stroke="#000" stroke-width="1.35"/>
<circle cx="1446.4" cy="451.0" r="5" fill="#e8e8e8" stroke="#000" stroke-width="1.35"/>
<circle cx="1443.8" cy="451.0" r="5" fill="#c8c8c8" stroke="#000" stroke-width="1.35"/>
<circle cx="1441.2" cy="449.4" r="5" fill="#a0a0a0" stroke="#000" stroke-width="1.35"/>
<circle cx="1520.2" cy="436.0" r="5" fill="#c4a08c" stroke="#000" stroke-width="1.35"/>
<circle cx="1530.9" cy="431.1" r="5" fill="#604838" stroke="#000" stroke-width="1.35"/>
<circle cx="1602.6" cy="469.5" r="5" fill="#c06478" stroke="#000" stroke-width="1.35"/>
<circle cx="1674.2" cy="473.4" r="5" fill="#b04850" stroke="#000" stroke-width="1.35"/>
<circle cx="1765.3" cy="469.5" r="5" fill="#ff0000" stroke="#000" stroke-width="1.35"/>
<circle cx="1527.7" cy="506.0" r="5" fill="#a85ea8" stroke="#000" stroke-width="1.35"/>
<circle cx="1347.7" cy="538.6" r="5" fill="#5262a0" stroke="#000" stroke-width="1.35"/>
<circle cx="1325.9" cy="572.1" r="5" fill="#3a4490" stroke="#000" stroke-width="1.35"/>
<circle cx="1490.4" cy="564.6" r="5" fill="#ff00ff" stroke="#000" stroke-width="1.35"/>
<circle cx="1285.9" cy="636.3" r="5" fill="#0010ff" stroke="#000" stroke-width="1.35"/>
<rect x="1639.5" y="121.8" width="255.3" height="215.6" fill="#2a2a2a" />
<defs><linearGradient id="id0" gradientUnits="userSpaceOnUse" x1="1642.6" y1="0" x2="1891.7" y2="0"><stop offset="0.000" stop-color="#5f9900"/><stop offset="0.844" stop-color="#999400"/><stop offset="1.000" stop-color="#998800"/></linearGradient><linearGradient id="ib0" gradientUnits="userSpaceOnUse" x1="1642.6" y1="0" x2="1891.7" y2="0"><stop offset="0.000" stop-color="#8dff00"/><stop offset="0.781" stop-color="#fffe00"/><stop offset="1.000" stop-color="#ffdd00"/></linearGradient><linearGradient id="id1" gradientUnits="userSpaceOnUse" x1="1642.6" y1="0" x2="1891.7" y2="0"><stop offset="0.000" stop-color="#609900"/><stop offset="0.813" stop-color="#999500"/><stop offset="1.000" stop-color="#998800"/></linearGradient><linearGradient id="ib1" gradientUnits="userSpaceOnUse" x1="1642.6" y1="0" x2="1891.7" y2="0"><stop offset="0.000" stop-color="#8eff00"/><stop offset="0.781" stop-color="#fffc00"/><stop offset="1.000" stop-color="#ffdb00"/></linearGradient><linearGradient id="id2" gradientUnits="userSpaceOnUse" x1="1642.6" y1="0" x2="1891.7" y2="0"><stop offset="0.000" stop-color="#619900"/><stop offset="0.813" stop-color="#999400"/><stop offset="1.000" stop-color="#998700"/></linearGradient><linearGradient id="ib2" gradientUnits="userSpaceOnUse" x1="1642.6" y1="0" x2="1891.7" y2="0"><stop offset="0.000" stop-color="#8fff00"/><stop offset="0.781" stop-color="#fffa00"/><stop offset="1.000" stop-color="#ffda00"/></linearGradient><linearGradient id="id3" gradientUnits="userSpaceOnUse" x1="1642.6" y1="0" x2="1891.7" y2="0"><stop offset="0.000" stop-color="#619900"/><stop offset="0.813" stop-color="#999300"/><stop offset="1.000" stop-color="#998600"/></linearGradient><linearGradient id="ib3" gradientUnits="userSpaceOnUse" x1="1642.6" y1="0" x2="1891.7" y2="0"><stop offset="0.000" stop-color="#91ff00"/><stop offset="0.750" stop-color="#fffe00"/><stop offset="1.000" stop-color="#ffd800"/></linearGradient><linearGradient id="id4" gradientUnits="userSpaceOnUse" x1="1642.6" y1="0" x2="1891.7" y2="0"><stop offset="0.000" stop-color="#629900"/><stop offset="0.781" stop-color="#999500"/><stop offset="1.000" stop-color="#998500"/></linearGradient><linearGradient id="ib4" gradientUnits="userSpaceOnUse" x1="1642.6" y1="0" x2="1891.7" y2="0"><stop offset="0.000" stop-color="#92ff00"/><stop offset="0.750" stop-color="#fffc00"/><stop offset="1.000" stop-color="#ffd700"/></linearGradient><linearGradient id="id5" gradientUnits="userSpaceOnUse" x1="1642.6" y1="0" x2="1891.7" y2="0"><stop offset="0.000" stop-color="#639900"/><stop offset="0.781" stop-color="#999400"/><stop offset="1.000" stop-color="#998500"/></linearGradient><linearGradient id="ib5" gradientUnits="userSpaceOnUse" x1="1642.6" y1="0" x2="1891.7" y2="0"><stop offset="0.000" stop-color="#93ff00"/><stop offset="0.750" stop-color="#fffa00"/><stop offset="1.000" stop-color="#ffd500"/></linearGradient><linearGradient id="id6" gradientUnits="userSpaceOnUse" x1="1642.6" y1="0" x2="1891.7" y2="0"><stop offset="0.000" stop-color="#639901"/><stop offset="0.781" stop-color="#999300"/><stop offset="1.000" stop-color="#998400"/></linearGradient><linearGradient id="ib6" gradientUnits="userSpaceOnUse" x1="1642.6" y1="0" x2="1891.7" y2="0"><stop offset="0.000" stop-color="#94ff00"/><stop offset="0.719" stop-color="#fffd00"/><stop offset="1.000" stop-color="#ffd400"/></linearGradient><linearGradient id="id7" gradientUnits="userSpaceOnUse" x1="1642.6" y1="0" x2="1891.7" y2="0"><stop offset="0.000" stop-color="#649901"/><stop offset="0.750" stop-color="#999500"/><stop offset="1.000" stop-color="#998300"/></linearGradient><linearGradient id="ib7" gradientUnits="userSpaceOnUse" x1="1642.6" y1="0" x2="1891.7" y2="0"><stop offset="0.000" stop-color="#96ff01"/><stop offset="0.719" stop-color="#fffb00"/><stop offset="1.000" stop-color="#ffd200"/></linearGradient><linearGradient id="id8" gradientUnits="userSpaceOnUse" x1="1642.6" y1="0" x2="1891.7" y2="0"><stop offset="0.000" stop-color="#649901"/><stop offset="0.750" stop-color="#999400"/><stop offset="1.000" stop-color="#998200"/></linearGradient><linearGradient id="ib8" gradientUnits="userSpaceOnUse" x1="1642.6" y1="0" x2="1891.7" y2="0"><stop offset="0.000" stop-color="#97ff01"/><stop offset="0.719" stop-color="#fffa00"/><stop offset="1.000" stop-color="#ffd000"/></linearGradient><linearGradient id="id9" gradientUnits="userSpaceOnUse" x1="1642.6" y1="0" x2="1891.7" y2="0"><stop offset="0.000" stop-color="#659902"/><stop offset="0.719" stop-color="#999500"/><stop offset="1.000" stop-color="#998100"/></linearGradient><linearGradient id="ib9" gradientUnits="userSpaceOnUse" x1="1642.6" y1="0" x2="1891.7" y2="0"><stop offset="0.000" stop-color="#98ff01"/><stop offset="0.688" stop-color="#fffd00"/><stop offset="1.000" stop-color="#ffcf00"/></linearGradient><linearGradient id="id10" gradientUnits="userSpaceOnUse" x1="1642.6" y1="0" x2="1891.7" y2="0"><stop offset="0.000" stop-color="#669902"/><stop offset="0.719" stop-color="#999500"/><stop offset="1.000" stop-color="#998100"/></linearGradient><linearGradient id="ib10" gradientUnits="userSpaceOnUse" x1="1642.6" y1="0" x2="1891.7" y2="0"><stop offset="0.000" stop-color="#99ff01"/><stop offset="0.688" stop-color="#fffb00"/><stop offset="1.000" stop-color="#ffcd00"/></linearGradient><linearGradient id="id11" gradientUnits="userSpaceOnUse" x1="1642.6" y1="0" x2="1891.7" y2="0"><stop offset="0.000" stop-color="#679903"/><stop offset="0.719" stop-color="#999400"/><stop offset="1.000" stop-color="#998000"/></linearGradient><linearGradient id="ib11" gradientUnits="userSpaceOnUse" x1="1642.6" y1="0" x2="1891.7" y2="0"><stop offset="0.000" stop-color="#9bff02"/><stop offset="0.656" stop-color="#fffe00"/><stop offset="1.000" stop-color="#ffcc00"/></linearGradient><linearGradient id="id12" gradientUnits="userSpaceOnUse" x1="1642.6" y1="0" x2="1891.7" y2="0"><stop offset="0.000" stop-color="#679903"/><stop offset="0.688" stop-color="#999500"/><stop offset="1.000" stop-color="#997f00"/></linearGradient><linearGradient id="ib12" gradientUnits="userSpaceOnUse" x1="1642.6" y1="0" x2="1891.7" y2="0"><stop offset="0.000" stop-color="#9cff02"/><stop offset="0.656" stop-color="#fffd00"/><stop offset="1.000" stop-color="#ffca00"/></linearGradient><linearGradient id="id13" gradientUnits="userSpaceOnUse" x1="1642.6" y1="0" x2="1891.7" y2="0"><stop offset="0.000" stop-color="#689903"/><stop offset="0.688" stop-color="#999400"/><stop offset="1.000" stop-color="#997e00"/></linearGradient><linearGradient id="ib13" gradientUnits="userSpaceOnUse" x1="1642.6" y1="0" x2="1891.7" y2="0"><stop offset="0.000" stop-color="#9dff02"/><stop offset="0.656" stop-color="#fffb00"/><stop offset="1.000" stop-color="#ffc900"/></linearGradient><linearGradient id="id14" gradientUnits="userSpaceOnUse" x1="1642.6" y1="0" x2="1891.7" y2="0"><stop offset="0.000" stop-color="#699904"/><stop offset="0.688" stop-color="#999300"/><stop offset="1.000" stop-color="#997e00"/></linearGradient><linearGradient id="ib14" gradientUnits="userSpaceOnUse" x1="1642.6" y1="0" x2="1891.7" y2="0"><stop offset="0.000" stop-color="#9eff02"/><stop offset="0.625" stop-color="#fffe00"/><stop offset="1.000" stop-color="#ffc700"/></linearGradient><linearGradient id="id15" gradientUnits="userSpaceOnUse" x1="1642.6" y1="0" x2="1891.7" y2="0"><stop offset="0.000" stop-color="#699904"/><stop offset="0.656" stop-color="#999500"/><stop offset="1.000" stop-color="#997d00"/></linearGradient><linearGradient id="ib15" gradientUnits="userSpaceOnUse" x1="1642.6" y1="0" x2="1891.7" y2="0"><stop offset="0.000" stop-color="#a0ff03"/><stop offset="0.625" stop-color="#fffc00"/><stop offset="1.000" stop-color="#ffc600"/></linearGradient><linearGradient id="id16" gradientUnits="userSpaceOnUse" x1="1642.6" y1="0" x2="1891.7" y2="0"><stop offset="0.000" stop-color="#6a9905"/><stop offset="0.656" stop-color="#999400"/><stop offset="1.000" stop-color="#997c00"/></linearGradient><linearGradient id="ib16" gradientUnits="userSpaceOnUse" x1="1642.6" y1="0" x2="1891.7" y2="0"><stop offset="0.000" stop-color="#a1ff03"/><stop offset="0.625" stop-color="#fffa00"/><stop offset="1.000" stop-color="#ffc400"/></linearGradient><linearGradient id="id17" gradientUnits="userSpaceOnUse" x1="1642.6" y1="0" x2="1891.7" y2="0"><stop offset="0.000" stop-color="#6b9905"/><stop offset="0.656" stop-color="#999300"/><stop offset="1.000" stop-color="#997b00"/></linearGradient><linearGradient id="ib17" gradientUnits="userSpaceOnUse" x1="1642.6" y1="0" x2="1891.7" y2="0"><stop offset="0.000" stop-color="#a2ff04"/><stop offset="0.594" stop-color="#fffe00"/><stop offset="1.000" stop-color="#ffc300"/></linearGradient><linearGradient id="id18" gradientUnits="userSpaceOnUse" x1="1642.6" y1="0" x2="1891.7" y2="0"><stop offset="0.000" stop-color="#6b9905"/><stop offset="0.625" stop-color="#999500"/><stop offset="1.000" stop-color="#997b00"/></linearGradient><linearGradient id="ib18" gradientUnits="userSpaceOnUse" x1="1642.6" y1="0" x2="1891.7" y2="0"><stop offset="0.000" stop-color="#a4ff04"/><stop offset="0.594" stop-color="#fffc00"/><stop offset="1.000" stop-color="#ffc100"/></linearGradient><linearGradient id="id19" gradientUnits="userSpaceOnUse" x1="1642.6" y1="0" x2="1891.7" y2="0"><stop offset="0.000" stop-color="#6c9906"/><stop offset="0.625" stop-color="#999400"/><stop offset="1.000" stop-color="#997a00"/></linearGradient><linearGradient id="ib19" gradientUnits="userSpaceOnUse" x1="1642.6" y1="0" x2="1891.7" y2="0"><stop offset="0.000" stop-color="#a5ff04"/><stop offset="0.594" stop-color="#fffa00"/><stop offset="1.000" stop-color="#ffc000"/></linearGradient><linearGradient id="id20" gradientUnits="userSpaceOnUse" x1="1642.6" y1="0" x2="1891.7" y2="0"><stop offset="0.000" stop-color="#6d9906"/><stop offset="0.625" stop-color="#999300"/><stop offset="1.000" stop-color="#997900"/></linearGradient><linearGradient id="ib20" gradientUnits="userSpaceOnUse" x1="1642.6" y1="0" x2="1891.7" y2="0"><stop offset="0.000" stop-color="#a7ff05"/><stop offset="0.563" stop-color="#fffd00"/><stop offset="1.000" stop-color="#ffbf00"/></linearGradient><linearGradient id="id21" gradientUnits="userSpaceOnUse" x1="1642.6" y1="0" x2="1891.7" y2="0"><stop offset="0.000" stop-color="#6e9907"/><stop offset="0.594" stop-color="#999500"/><stop offset="1.000" stop-color="#997800"/></linearGradient><linearGradient id="ib21" gradientUnits="userSpaceOnUse" x1="1642.6" y1="0" x2="1891.7" y2="0"><stop offset="0.000" stop-color="#a8ff05"/><stop offset="0.563" stop-color="#fffb00"/><stop offset="1.000" stop-color="#ffbd00"/></linearGradient><linearGradient id="id22" gradientUnits="userSpaceOnUse" x1="1642.6" y1="0" x2="1891.7" y2="0"><stop offset="0.000" stop-color="#6e9907"/><stop offset="0.594" stop-color="#999400"/><stop offset="1.000" stop-color="#997800"/></linearGradient><linearGradient id="ib22" gradientUnits="userSpaceOnUse" x1="1642.6" y1="0" x2="1891.7" y2="0"><stop offset="0.000" stop-color="#a9ff05"/><stop offset="0.531" stop-color="#ffff00"/><stop offset="1.000" stop-color="#ffbc00"/></linearGradient><linearGradient id="id23" gradientUnits="userSpaceOnUse" x1="1642.6" y1="0" x2="1891.7" y2="0"><stop offset="0.000" stop-color="#6f9907"/><stop offset="0.563" stop-color="#999500"/><stop offset="1.000" stop-color="#997700"/></linearGradient><linearGradient id="ib23" gradientUnits="userSpaceOnUse" x1="1642.6" y1="0" x2="1891.7" y2="0"><stop offset="0.000" stop-color="#abff06"/><stop offset="0.531" stop-color="#fffd00"/><stop offset="1.000" stop-color="#ffba00"/></linearGradient><linearGradient id="id24" gradientUnits="userSpaceOnUse" x1="1642.6" y1="0" x2="1891.7" y2="0"><stop offset="0.000" stop-color="#709908"/><stop offset="0.563" stop-color="#999400"/><stop offset="1.000" stop-color="#997600"/></linearGradient><linearGradient id="ib24" gradientUnits="userSpaceOnUse" x1="1642.6" y1="0" x2="1891.7" y2="0"><stop offset="0.000" stop-color="#acff06"/><stop offset="0.531" stop-color="#fffb00"/><stop offset="1.000" stop-color="#ffb900"/></linearGradient><linearGradient id="id25" gradientUnits="userSpaceOnUse" x1="1642.6" y1="0" x2="1891.7" y2="0"><stop offset="0.000" stop-color="#719908"/><stop offset="0.563" stop-color="#999400"/><stop offset="1.000" stop-color="#997600"/></linearGradient><linearGradient id="ib25" gradientUnits="userSpaceOnUse" x1="1642.6" y1="0" x2="1891.7" y2="0"><stop offset="0.000" stop-color="#aeff07"/><stop offset="0.500" stop-color="#ffff00"/><stop offset="1.000" stop-color="#ffb700"/></linearGradient><linearGradient id="id26" gradientUnits="userSpaceOnUse" x1="1642.6" y1="0" x2="1891.7" y2="0"><stop offset="0.000" stop-color="#719909"/><stop offset="0.531" stop-color="#999500"/><stop offset="1.000" stop-color="#997500"/></linearGradient><linearGradient id="ib26" gradientUnits="userSpaceOnUse" x1="1642.6" y1="0" x2="1891.7" y2="0"><stop offset="0.000" stop-color="#afff07"/><stop offset="0.500" stop-color="#fffd00"/><stop offset="1.000" stop-color="#ffb600"/></linearGradient><linearGradient id="id27" gradientUnits="userSpaceOnUse" x1="1642.6" y1="0" x2="1891.7" y2="0"><stop offset="0.000" stop-color="#729909"/><stop offset="0.531" stop-color="#999400"/><stop offset="1.000" stop-color="#997400"/></linearGradient><linearGradient id="ib27" gradientUnits="userSpaceOnUse" x1="1642.6" y1="0" x2="1891.7" y2="0"><stop offset="0.000" stop-color="#b1ff08"/><stop offset="0.500" stop-color="#fffb00"/><stop offset="1.000" stop-color="#ffb500"/></linearGradient><linearGradient id="id28" gradientUnits="userSpaceOnUse" x1="1642.6" y1="0" x2="1891.7" y2="0"><stop offset="0.000" stop-color="#73990a"/><stop offset="0.531" stop-color="#999300"/><stop offset="1.000" stop-color="#997300"/></linearGradient><linearGradient id="ib28" gradientUnits="userSpaceOnUse" x1="1642.6" y1="0" x2="1891.7" y2="0"><stop offset="0.000" stop-color="#b2ff08"/><stop offset="0.469" stop-color="#fffe01"/><stop offset="1.000" stop-color="#ffb300"/></linearGradient><linearGradient id="id29" gradientUnits="userSpaceOnUse" x1="1642.6" y1="0" x2="1891.7" y2="0"><stop offset="0.000" stop-color="#74990a"/><stop offset="0.500" stop-color="#999501"/><stop offset="1.000" stop-color="#997300"/></linearGradient><linearGradient id="ib29" gradientUnits="userSpaceOnUse" x1="1642.6" y1="0" x2="1891.7" y2="0"><stop offset="0.000" stop-color="#b4ff08"/><stop offset="0.469" stop-color="#fffc01"/><stop offset="1.000" stop-color="#ffb200"/></linearGradient><linearGradient id="id30" gradientUnits="userSpaceOnUse" x1="1642.6" y1="0" x2="1891.7" y2="0"><stop offset="0.000" stop-color="#74990a"/><stop offset="0.500" stop-color="#999402"/><stop offset="1.000" stop-color="#997200"/></linearGradient><linearGradient id="ib30" gradientUnits="userSpaceOnUse" x1="1642.6" y1="0" x2="1891.7" y2="0"><stop offset="0.000" stop-color="#b5ff09"/><stop offset="0.469" stop-color="#fffa01"/><stop offset="1.000" stop-color="#ffb100"/></linearGradient><linearGradient id="id31" gradientUnits="userSpaceOnUse" x1="1642.6" y1="0" x2="1891.7" y2="0"><stop offset="0.000" stop-color="#75990b"/><stop offset="0.500" stop-color="#999302"/><stop offset="1.000" stop-color="#997100"/></linearGradient><linearGradient id="ib31" gradientUnits="userSpaceOnUse" x1="1642.6" y1="0" x2="1891.7" y2="0"><stop offset="0.000" stop-color="#b7ff09"/><stop offset="0.437" stop-color="#fffe02"/><stop offset="0.969" stop-color="#ffb300"/><stop offset="1.000" stop-color="#ffaf00"/></linearGradient><linearGradient id="id32" gradientUnits="userSpaceOnUse" x1="1642.6" y1="0" x2="1891.7" y2="0"><stop offset="0.000" stop-color="#76990b"/><stop offset="0.469" stop-color="#999503"/><stop offset="1.000" stop-color="#997100"/></linearGradient><linearGradient id="ib32" gradientUnits="userSpaceOnUse" x1="1642.6" y1="0" x2="1891.7" y2="0"><stop offset="0.000" stop-color="#b8ff0a"/><stop offset="0.437" stop-color="#fffc03"/><stop offset="1.000" stop-color="#ffae00"/></linearGradient><linearGradient id="id33" gradientUnits="userSpaceOnUse" x1="1642.6" y1="0" x2="1891.7" y2="0"><stop offset="0.000" stop-color="#77990c"/><stop offset="0.469" stop-color="#999404"/><stop offset="1.000" stop-color="#997000"/></linearGradient><linearGradient id="ib33" gradientUnits="userSpaceOnUse" x1="1642.6" y1="0" x2="1891.7" y2="0"><stop offset="0.000" stop-color="#baff0a"/><stop offset="0.437" stop-color="#fffa03"/><stop offset="1.000" stop-color="#ffac00"/></linearGradient><linearGradient id="id34" gradientUnits="userSpaceOnUse" x1="1642.6" y1="0" x2="1891.7" y2="0"><stop offset="0.000" stop-color="#78990c"/><stop offset="0.469" stop-color="#999304"/><stop offset="1.000" stop-color="#996f00"/></linearGradient><linearGradient id="ib34" gradientUnits="userSpaceOnUse" x1="1642.6" y1="0" x2="1891.7" y2="0"><stop offset="0.000" stop-color="#bbff0b"/><stop offset="0.406" stop-color="#fffd04"/><stop offset="0.937" stop-color="#ffb200"/><stop offset="1.000" stop-color="#ffab00"/></linearGradient><linearGradient id="id35" gradientUnits="userSpaceOnUse" x1="1642.6" y1="0" x2="1891.7" y2="0"><stop offset="0.000" stop-color="#78990d"/><stop offset="0.437" stop-color="#999505"/><stop offset="1.000" stop-color="#996e00"/></linearGradient><linearGradient id="ib35" gradientUnits="userSpaceOnUse" x1="1642.6" y1="0" x2="1891.7" y2="0"><stop offset="0.000" stop-color="#bdff0b"/><stop offset="0.406" stop-color="#fffb04"/><stop offset="0.937" stop-color="#ffb000"/><stop offset="1.000" stop-color="#ffaa00"/></linearGradient><linearGradient id="id36" gradientUnits="userSpaceOnUse" x1="1642.6" y1="0" x2="1891.7" y2="0"><stop offset="0.000" stop-color="#79990d"/><stop offset="0.437" stop-color="#999405"/><stop offset="1.000" stop-color="#996e00"/></linearGradient><linearGradient id="ib36" gradientUnits="userSpaceOnUse" x1="1642.6" y1="0" x2="1891.7" y2="0"><stop offset="0.000" stop-color="#bfff0c"/><stop offset="0.375" stop-color="#ffff05"/><stop offset="0.906" stop-color="#ffb200"/><stop offset="1.000" stop-color="#ffa800"/></linearGradient><linearGradient id="id37" gradientUnits="userSpaceOnUse" x1="1642.6" y1="0" x2="1891.7" y2="0"><stop offset="0.000" stop-color="#7a990e"/><stop offset="0.437" stop-color="#999306"/><stop offset="1.000" stop-color="#996d00"/></linearGradient><linearGradient id="ib37" gradientUnits="userSpaceOnUse" x1="1642.6" y1="0" x2="1891.7" y2="0"><stop offset="0.000" stop-color="#c0ff0c"/><stop offset="0.375" stop-color="#fffd06"/><stop offset="0.906" stop-color="#ffb100"/><stop offset="1.000" stop-color="#ffa700"/></linearGradient><linearGradient id="id38" gradientUnits="userSpaceOnUse" x1="1642.6" y1="0" x2="1891.7" y2="0"><stop offset="0.000" stop-color="#7b990e"/><stop offset="0.406" stop-color="#999407"/><stop offset="1.000" stop-color="#996c00"/></linearGradient><linearGradient id="ib38" gradientUnits="userSpaceOnUse" x1="1642.6" y1="0" x2="1891.7" y2="0"><stop offset="0.000" stop-color="#c2ff0d"/><stop offset="0.375" stop-color="#fffb06"/><stop offset="0.906" stop-color="#ffb000"/><stop offset="1.000" stop-color="#ffa600"/></linearGradient><linearGradient id="id39" gradientUnits="userSpaceOnUse" x1="1642.6" y1="0" x2="1891.7" y2="0"><stop offset="0.000" stop-color="#7c990f"/><stop offset="0.406" stop-color="#999307"/><stop offset="1.000" stop-color="#996c00"/></linearGradient><linearGradient id="ib39" gradientUnits="userSpaceOnUse" x1="1642.6" y1="0" x2="1891.7" y2="0"><stop offset="0.000" stop-color="#c3ff0e"/><stop offset="0.344" stop-color="#ffff07"/><stop offset="0.875" stop-color="#ffb200"/><stop offset="1.000" stop-color="#ffa400"/></linearGradient><linearGradient id="id40" gradientUnits="userSpaceOnUse" x1="1642.6" y1="0" x2="1891.7" y2="0"><stop offset="0.000" stop-color="#7d990f"/><stop offset="0.406" stop-color="#999208"/><stop offset="1.000" stop-color="#996b00"/></linearGradient><linearGradient id="ib40" gradientUnits="userSpaceOnUse" x1="1642.6" y1="0" x2="1891.7" y2="0"><stop offset="0.000" stop-color="#c5ff0e"/><stop offset="0.344" stop-color="#fffc08"/><stop offset="0.875" stop-color="#ffb000"/><stop offset="1.000" stop-color="#ffa300"/></linearGradient><linearGradient id="id41" gradientUnits="userSpaceOnUse" x1="1642.6" y1="0" x2="1891.7" y2="0"><stop offset="0.000" stop-color="#7d9910"/><stop offset="0.375" stop-color="#999409"/><stop offset="1.000" stop-color="#996a00"/></linearGradient><linearGradient id="ib41" gradientUnits="userSpaceOnUse" x1="1642.6" y1="0" x2="1891.7" y2="0"><stop offset="0.000" stop-color="#c7ff0f"/><stop offset="0.344" stop-color="#fffa08"/><stop offset="0.875" stop-color="#ffaf00"/><stop offset="1.000" stop-color="#ffa200"/></linearGradient><linearGradient id="id42" gradientUnits="userSpaceOnUse" x1="1642.6" y1="0" x2="1891.7" y2="0"><stop offset="0.000" stop-color="#7e9910"/><stop offset="0.375" stop-color="#999309"/><stop offset="1.000" stop-color="#996a00"/></linearGradient><linearGradient id="ib42" gradientUnits="userSpaceOnUse" x1="1642.6" y1="0" x2="1891.7" y2="0"><stop offset="0.000" stop-color="#c8ff0f"/><stop offset="0.312" stop-color="#fffe09"/><stop offset="0.844" stop-color="#ffb100"/><stop offset="1.000" stop-color="#ffa100"/></linearGradient><linearGradient id="id43" gradientUnits="userSpaceOnUse" x1="1642.6" y1="0" x2="1891.7" y2="0"><stop offset="0.000" stop-color="#7f9911"/><stop offset="0.344" stop-color="#99950a"/><stop offset="1.000" stop-color="#996900"/></linearGradient><linearGradient id="ib43" gradientUnits="userSpaceOnUse" x1="1642.6" y1="0" x2="1891.7" y2="0"><stop offset="0.000" stop-color="#caff10"/><stop offset="0.312" stop-color="#fffc0a"/><stop offset="0.844" stop-color="#ffb000"/><stop offset="1.000" stop-color="#ff9f00"/></linearGradient><linearGradient id="id44" gradientUnits="userSpaceOnUse" x1="1642.6" y1="0" x2="1891.7" y2="0"><stop offset="0.000" stop-color="#809911"/><stop offset="0.344" stop-color="#99940b"/><stop offset="1.000" stop-color="#996800"/></linearGradient><linearGradient id="ib44" gradientUnits="userSpaceOnUse" x1="1642.6" y1="0" x2="1891.7" y2="0"><stop offset="0.000" stop-color="#ccff10"/><stop offset="0.312" stop-color="#fffa0a"/><stop offset="0.844" stop-color="#ffae01"/><stop offset="1.000" stop-color="#ff9e00"/></linearGradient><linearGradient id="id45" gradientUnits="userSpaceOnUse" x1="1642.6" y1="0" x2="1891.7" y2="0"><stop offset="0.000" stop-color="#819912"/><stop offset="0.344" stop-color="#99930b"/><stop offset="1.000" stop-color="#996800"/></linearGradient><linearGradient id="ib45" gradientUnits="userSpaceOnUse" x1="1642.6" y1="0" x2="1891.7" y2="0"><stop offset="0.000" stop-color="#ceff11"/><stop offset="0.281" stop-color="#fffe0b"/><stop offset="0.813" stop-color="#ffb001"/><stop offset="1.000" stop-color="#ff9d00"/></linearGradient><linearGradient id="id46" gradientUnits="userSpaceOnUse" x1="1642.6" y1="0" x2="1891.7" y2="0"><stop offset="0.000" stop-color="#829912"/><stop offset="0.312" stop-color="#99950c"/><stop offset="1.000" stop-color="#996700"/></linearGradient><linearGradient id="ib46" gradientUnits="userSpaceOnUse" x1="1642.6" y1="0" x2="1891.7" y2="0"><stop offset="0.000" stop-color="#cfff12"/><stop offset="0.281" stop-color="#fffc0c"/><stop offset="0.813" stop-color="#ffaf01"/><stop offset="1.000" stop-color="#ff9c00"/></linearGradient><linearGradient id="id47" gradientUnits="userSpaceOnUse" x1="1642.6" y1="0" x2="1891.7" y2="0"><stop offset="0.000" stop-color="#839913"/><stop offset="0.312" stop-color="#99940d"/><stop offset="1.000" stop-color="#996600"/></linearGradient><linearGradient id="ib47" gradientUnits="userSpaceOnUse" x1="1642.6" y1="0" x2="1891.7" y2="0"><stop offset="0.000" stop-color="#d1ff12"/><stop offset="0.281" stop-color="#fffa0c"/><stop offset="0.813" stop-color="#ffad02"/><stop offset="1.000" stop-color="#ff9a00"/></linearGradient><linearGradient id="id48" gradientUnits="userSpaceOnUse" x1="1642.6" y1="0" x2="1891.7" y2="0"><stop offset="0.000" stop-color="#849913"/><stop offset="0.312" stop-color="#99930d"/><stop offset="1.000" stop-color="#996600"/></linearGradient><linearGradient id="ib48" gradientUnits="userSpaceOnUse" x1="1642.6" y1="0" x2="1891.7" y2="0"><stop offset="0.000" stop-color="#d3ff13"/><stop offset="0.250" stop-color="#fffd0e"/><stop offset="0.781" stop-color="#ffaf02"/><stop offset="1.000" stop-color="#ff9900"/></linearGradient><linearGradient id="id49" gradientUnits="userSpaceOnUse" x1="1642.6" y1="0" x2="1891.7" y2="0"><stop offset="0.000" stop-color="#849914"/><stop offset="0.281" stop-color="#99940e"/><stop offset="1.000" stop-color="#996501"/></linearGradient><linearGradient id="ib49" gradientUnits="userSpaceOnUse" x1="1642.6" y1="0" x2="1891.7" y2="0"><stop offset="0.000" stop-color="#d5ff14"/><stop offset="0.250" stop-color="#fffb0e"/><stop offset="0.781" stop-color="#ffae03"/><stop offset="1.000" stop-color="#ff9800"/></linearGradient><linearGradient id="id50" gradientUnits="userSpaceOnUse" x1="1642.6" y1="0" x2="1891.7" y2="0"><stop offset="0.000" stop-color="#859914"/><stop offset="0.281" stop-color="#99930f"/><stop offset="1.000" stop-color="#996401"/></linearGradient><linearGradient id="ib50" gradientUnits="userSpaceOnUse" x1="1642.6" y1="0" x2="1891.7" y2="0"><stop offset="0.000" stop-color="#d7ff14"/><stop offset="0.219" stop-color="#ffff10"/><stop offset="0.719" stop-color="#ffb404"/><stop offset="1.000" stop-color="#ff9700"/></linearGradient><linearGradient id="id51" gradientUnits="userSpaceOnUse" x1="1642.6" y1="0" x2="1891.7" y2="0"><stop offset="0.000" stop-color="#869915"/><stop offset="0.281" stop-color="#99920f"/><stop offset="1.000" stop-color="#996401"/></linearGradient><linearGradient id="ib51" gradientUnits="userSpaceOnUse" x1="1642.6" y1="0" x2="1891.7" y2="0"><stop offset="0.000" stop-color="#d9ff15"/><stop offset="0.219" stop-color="#fffd10"/><stop offset="0.719" stop-color="#ffb204"/><stop offset="1.000" stop-color="#ff9501"/></linearGradient><linearGradient id="id52" gradientUnits="userSpaceOnUse" x1="1642.6" y1="0" x2="1891.7" y2="0"><stop offset="0.000" stop-color="#879915"/><stop offset="0.250" stop-color="#999410"/><stop offset="1.000" stop-color="#996302"/></linearGradient><linearGradient id="ib52" gradientUnits="userSpaceOnUse" x1="1642.6" y1="0" x2="1891.7" y2="0"><stop offset="0.000" stop-color="#daff16"/><stop offset="0.219" stop-color="#fffb11"/><stop offset="0.750" stop-color="#ffad04"/><stop offset="1.000" stop-color="#ff9401"/></linearGradient><clipPath id="inclip"><rect x="1642.6" y="124.8" width="249.1" height="209.5"/></clipPath><clipPath id="inbr"><path d="M1642.6,146.6 L1891.7,311.6 L1891.7,334.3 L1642.6,334.3 Z"/></clipPath></defs>
<g clip-path="url(#inclip)"><rect x="1642.6" y="124.6" width="249.1" height="4.4" fill="url(#id0)" /><rect x="1642.6" y="128.6" width="249.1" height="4.4" fill="url(#id1)" /><rect x="1642.6" y="132.6" width="249.1" height="4.4" fill="url(#id2)" /><rect x="1642.6" y="136.6" width="249.1" height="4.4" fill="url(#id3)" /><rect x="1642.6" y="140.6" width="249.1" height="4.4" fill="url(#id4)" /><rect x="1642.6" y="144.6" width="249.1" height="4.4" fill="url(#id5)" /><rect x="1642.6" y="148.6" width="249.1" height="4.4" fill="url(#id6)" /><rect x="1642.6" y="152.6" width="249.1" height="4.4" fill="url(#id7)" /><rect x="1642.6" y="156.6" width="249.1" height="4.4" fill="url(#id8)" /><rect x="1642.6" y="160.6" width="249.1" height="4.4" fill="url(#id9)" /><rect x="1642.6" y="164.6" width="249.1" height="4.4" fill="url(#id10)" /><rect x="1642.6" y="168.6" width="249.1" height="4.4" fill="url(#id11)" /><rect x="1642.6" y="172.6" width="249.1" height="4.4" fill="url(#id12)" /><rect x="1642.6" y="176.6" width="249.1" height="4.4" fill="url(#id13)" /><rect x="1642.6" y="180.6" width="249.1" height="4.4" fill="url(#id14)" /><rect x="1642.6" y="184.6" width="249.1" height="4.4" fill="url(#id15)" /><rect x="1642.6" y="188.6" width="249.1" height="4.4" fill="url(#id16)" /><rect x="1642.6" y="192.6" width="249.1" height="4.4" fill="url(#id17)" /><rect x="1642.6" y="196.6" width="249.1" height="4.4" fill="url(#id18)" /><rect x="1642.6" y="200.6" width="249.1" height="4.4" fill="url(#id19)" /><rect x="1642.6" y="204.6" width="249.1" height="4.4" fill="url(#id20)" /><rect x="1642.6" y="208.6" width="249.1" height="4.4" fill="url(#id21)" /><rect x="1642.6" y="212.6" width="249.1" height="4.4" fill="url(#id22)" /><rect x="1642.6" y="216.6" width="249.1" height="4.4" fill="url(#id23)" /><rect x="1642.6" y="220.6" width="249.1" height="4.4" fill="url(#id24)" /><rect x="1642.6" y="224.6" width="249.1" height="4.4" fill="url(#id25)" /><rect x="1642.6" y="228.6" width="249.1" height="4.4" fill="url(#id26)" /><rect x="1642.6" y="232.6" width="249.1" height="4.4" fill="url(#id27)" /><rect x="1642.6" y="236.6" width="249.1" height="4.4" fill="url(#id28)" /><rect x="1642.6" y="240.6" width="249.1" height="4.4" fill="url(#id29)" /><rect x="1642.6" y="244.6" width="249.1" height="4.4" fill="url(#id30)" /><rect x="1642.6" y="248.6" width="249.1" height="4.4" fill="url(#id31)" /><rect x="1642.6" y="252.6" width="249.1" height="4.4" fill="url(#id32)" /><rect x="1642.6" y="256.6" width="249.1" height="4.4" fill="url(#id33)" /><rect x="1642.6" y="260.6" width="249.1" height="4.4" fill="url(#id34)" /><rect x="1642.6" y="264.6" width="249.1" height="4.4" fill="url(#id35)" /><rect x="1642.6" y="268.6" width="249.1" height="4.4" fill="url(#id36)" /><rect x="1642.6" y="272.6" width="249.1" height="4.4" fill="url(#id37)" /><rect x="1642.6" y="276.6" width="249.1" height="4.4" fill="url(#id38)" /><rect x="1642.6" y="280.6" width="249.1" height="4.4" fill="url(#id39)" /><rect x="1642.6" y="284.6" width="249.1" height="4.4" fill="url(#id40)" /><rect x="1642.6" y="288.6" width="249.1" height="4.4" fill="url(#id41)" /><rect x="1642.6" y="292.6" width="249.1" height="4.4" fill="url(#id42)" /><rect x="1642.6" y="296.6" width="249.1" height="4.4" fill="url(#id43)" /><rect x="1642.6" y="300.6" width="249.1" height="4.4" fill="url(#id44)" /><rect x="1642.6" y="304.6" width="249.1" height="4.4" fill="url(#id45)" /><rect x="1642.6" y="308.6" width="249.1" height="4.4" fill="url(#id46)" /><rect x="1642.6" y="312.6" width="249.1" height="4.4" fill="url(#id47)" /><rect x="1642.6" y="316.6" width="249.1" height="4.4" fill="url(#id48)" /><rect x="1642.6" y="320.6" width="249.1" height="4.4" fill="url(#id49)" /><rect x="1642.6" y="324.6" width="249.1" height="4.4" fill="url(#id50)" /><rect x="1642.6" y="328.6" width="249.1" height="4.4" fill="url(#id51)" /><rect x="1642.6" y="332.6" width="249.1" height="4.4" fill="url(#id52)" /><g clip-path="url(#inbr)"><rect x="1642.6" y="124.6" width="249.1" height="4.4" fill="url(#ib0)" /><rect x="1642.6" y="128.6" width="249.1" height="4.4" fill="url(#ib1)" /><rect x="1642.6" y="132.6" width="249.1" height="4.4" fill="url(#ib2)" /><rect x="1642.6" y="136.6" width="249.1" height="4.4" fill="url(#ib3)" /><rect x="1642.6" y="140.6" width="249.1" height="4.4" fill="url(#ib4)" /><rect x="1642.6" y="144.6" width="249.1" height="4.4" fill="url(#ib5)" /><rect x="1642.6" y="148.6" width="249.1" height="4.4" fill="url(#ib6)" /><rect x="1642.6" y="152.6" width="249.1" height="4.4" fill="url(#ib7)" /><rect x="1642.6" y="156.6" width="249.1" height="4.4" fill="url(#ib8)" /><rect x="1642.6" y="160.6" width="249.1" height="4.4" fill="url(#ib9)" /><rect x="1642.6" y="164.6" width="249.1" height="4.4" fill="url(#ib10)" /><rect x="1642.6" y="168.6" width="249.1" height="4.4" fill="url(#ib11)" /><rect x="1642.6" y="172.6" width="249.1" height="4.4" fill="url(#ib12)" /><rect x="1642.6" y="176.6" width="249.1" height="4.4" fill="url(#ib13)" /><rect x="1642.6" y="180.6" width="249.1" height="4.4" fill="url(#ib14)" /><rect x="1642.6" y="184.6" width="249.1" height="4.4" fill="url(#ib15)" /><rect x="1642.6" y="188.6" width="249.1" height="4.4" fill="url(#ib16)" /><rect x="1642.6" y="192.6" width="249.1" height="4.4" fill="url(#ib17)" /><rect x="1642.6" y="196.6" width="249.1" height="4.4" fill="url(#ib18)" /><rect x="1642.6" y="200.6" width="249.1" height="4.4" fill="url(#ib19)" /><rect x="1642.6" y="204.6" width="249.1" height="4.4" fill="url(#ib20)" /><rect x="1642.6" y="208.6" width="249.1" height="4.4" fill="url(#ib21)" /><rect x="1642.6" y="212.6" width="249.1" height="4.4" fill="url(#ib22)" /><rect x="1642.6" y="216.6" width="249.1" height="4.4" fill="url(#ib23)" /><rect x="1642.6" y="220.6" width="249.1" height="4.4" fill="url(#ib24)" /><rect x="1642.6" y="224.6" width="249.1" height="4.4" fill="url(#ib25)" /><rect x="1642.6" y="228.6" width="249.1" height="4.4" fill="url(#ib26)" /><rect x="1642.6" y="232.6" width="249.1" height="4.4" fill="url(#ib27)" /><rect x="1642.6" y="236.6" width="249.1" height="4.4" fill="url(#ib28)" /><rect x="1642.6" y="240.6" width="249.1" height="4.4" fill="url(#ib29)" /><rect x="1642.6" y="244.6" width="249.1" height="4.4" fill="url(#ib30)" /><rect x="1642.6" y="248.6" width="249.1" height="4.4" fill="url(#ib31)" /><rect x="1642.6" y="252.6" width="249.1" height="4.4" fill="url(#ib32)" /><rect x="1642.6" y="256.6" width="249.1" height="4.4" fill="url(#ib33)" /><rect x="1642.6" y="260.6" width="249.1" height="4.4" fill="url(#ib34)" /><rect x="1642.6" y="264.6" width="249.1" height="4.4" fill="url(#ib35)" /><rect x="1642.6" y="268.6" width="249.1" height="4.4" fill="url(#ib36)" /><rect x="1642.6" y="272.6" width="249.1" height="4.4" fill="url(#ib37)" /><rect x="1642.6" y="276.6" width="249.1" height="4.4" fill="url(#ib38)" /><rect x="1642.6" y="280.6" width="249.1" height="4.4" fill="url(#ib39)" /><rect x="1642.6" y="284.6" width="249.1" height="4.4" fill="url(#ib40)" /><rect x="1642.6" y="288.6" width="249.1" height="4.4" fill="url(#ib41)" /><rect x="1642.6" y="292.6" width="249.1" height="4.4" fill="url(#ib42)" /><rect x="1642.6" y="296.6" width="249.1" height="4.4" fill="url(#ib43)" /><rect x="1642.6" y="300.6" width="249.1" height="4.4" fill="url(#ib44)" /><rect x="1642.6" y="304.6" width="249.1" height="4.4" fill="url(#ib45)" /><rect x="1642.6" y="308.6" width="249.1" height="4.4" fill="url(#ib46)" /><rect x="1642.6" y="312.6" width="249.1" height="4.4" fill="url(#ib47)" /><rect x="1642.6" y="316.6" width="249.1" height="4.4" fill="url(#ib48)" /><rect x="1642.6" y="320.6" width="249.1" height="4.4" fill="url(#ib49)" /><rect x="1642.6" y="324.6" width="249.1" height="4.4" fill="url(#ib50)" /><rect x="1642.6" y="328.6" width="249.1" height="4.4" fill="url(#ib51)" /><rect x="1642.6" y="332.6" width="249.1" height="4.4" fill="url(#ib52)" /></g>
<rect x="1757.7" y="220.6" width="15.2" height="15.2" fill="none" stroke="#ffffff" stroke-width="2"/>
<rect x="1866.0" y="321.1" width="15.2" height="15.2" fill="none" stroke="#ffffff" stroke-width="2"/>
</g>
<circle cx="1870.5" cy="172.4" r="4.9" fill="#ffff00" stroke="#000" stroke-width="1"/>
<rect x="1641.8" y="124.0" width="250.7" height="211.1" fill="none" stroke="#8a8a8a" stroke-width="1.6"/>
<rect x="1607.4" y="640.5" width="287.2" height="30.9" fill="#333333" />
<text x="1608.5" y="665.2" font-size="23" fill="#f2f2f2" textLength="242.0" lengthAdjust="spacingAndGlyphs">RGB Triplet: 255, 255, 0</text>
<rect x="374.5" y="734.0" width="1535.5" height="257.5" fill="#181818" />
<defs><clipPath id="tclip"><rect x="376" y="735.5" width="1532.5" height="256"/></clipPath><linearGradient id="thead" x1="0" y1="0" x2="0" y2="1"><stop offset="0" stop-color="#2e2e2e"/><stop offset="0.5" stop-color="#2e2e2e"/><stop offset="0.5" stop-color="#1a1a1a"/><stop offset="1" stop-color="#131313"/></linearGradient><linearGradient id="tlight" x1="0" y1="0" x2="1" y2="0"><stop offset="0" stop-color="#787878"/><stop offset="0.2" stop-color="#818181"/><stop offset="1" stop-color="#7e7e7e"/></linearGradient></defs>
<g clip-path="url(#tclip)">
<rect x="376.0" y="735.5" width="1532.5" height="31.3" fill="url(#thead)" />
<rect x="376.0" y="766.8" width="1532.5" height="29.4" fill="#404040" />
<rect x="376.0" y="796.2" width="1532.5" height="29.4" fill="url(#tlight)" />
<rect x="376.0" y="825.6" width="1532.5" height="29.4" fill="#404040" />
<rect x="376.0" y="855.0" width="1532.5" height="29.4" fill="url(#tlight)" />
<rect x="376.0" y="884.4" width="1532.5" height="29.4" fill="#404040" />
<rect x="376.0" y="913.8" width="1532.5" height="29.4" fill="url(#tlight)" />
<rect x="376.0" y="943.2" width="1532.5" height="29.4" fill="#404040" />
<text x="609.7" y="757.8" font-size="16.5" fill="#f4f4f4" text-anchor="middle" textLength="54.1" lengthAdjust="spacingAndGlyphs" stroke="#f4f4f4" stroke-width="0.45">White</text>
<text x="709.6" y="757.8" font-size="16.5" fill="#f4f4f4" text-anchor="middle" textLength="69.8" lengthAdjust="spacingAndGlyphs" stroke="#f4f4f4" stroke-width="0.45">Gray 80</text>
<text x="810.0" y="757.8" font-size="16.5" fill="#f4f4f4" text-anchor="middle" textLength="68.8" lengthAdjust="spacingAndGlyphs" stroke="#f4f4f4" stroke-width="0.45">Gray 65</text>
<text x="910.5" y="757.8" font-size="16.5" fill="#f4f4f4" text-anchor="middle" textLength="69.8" lengthAdjust="spacingAndGlyphs" stroke="#f4f4f4" stroke-width="0.45">Gray 50</text>
<text x="1010.7" y="757.8" font-size="16.5" fill="#f4f4f4" text-anchor="middle" textLength="68.9" lengthAdjust="spacingAndGlyphs" stroke="#f4f4f4" stroke-width="0.45">Gray 35</text>
<text x="1099.5" y="757.8" font-size="16.5" fill="#f4f4f4" text-anchor="middle" textLength="46.8" lengthAdjust="spacingAndGlyphs" stroke="#f4f4f4" stroke-width="0.45">Black</text>
<text x="1185.4" y="757.8" font-size="16.5" fill="#f4f4f4" text-anchor="middle" textLength="84.1" lengthAdjust="spacingAndGlyphs" stroke="#f4f4f4" stroke-width="0.45">Dark Skin</text>
<text x="1283.3" y="757.8" font-size="16.5" fill="#f4f4f4" text-anchor="middle" textLength="86.2" lengthAdjust="spacingAndGlyphs" stroke="#f4f4f4" stroke-width="0.45">Light Skin</text>
<text x="1378.0" y="757.8" font-size="16.5" fill="#f4f4f4" text-anchor="middle" textLength="75.8" lengthAdjust="spacingAndGlyphs" stroke="#f4f4f4" stroke-width="0.45">Blue Sky</text>
<text x="1466.0" y="757.8" font-size="16.5" fill="#f4f4f4" text-anchor="middle" textLength="63.8" lengthAdjust="spacingAndGlyphs" stroke="#f4f4f4" stroke-width="0.45">Foliage</text>
<text x="1569.0" y="757.8" font-size="16.5" fill="#f4f4f4" text-anchor="middle" textLength="106.8" lengthAdjust="spacingAndGlyphs" stroke="#f4f4f4" stroke-width="0.45">Blue Flower</text>
<text x="1691.5" y="757.8" font-size="16.5" fill="#f4f4f4" text-anchor="middle" textLength="115.8" lengthAdjust="spacingAndGlyphs" stroke="#f4f4f4" stroke-width="0.45">Bluish Green</text>
<text x="1805.0" y="757.8" font-size="16.5" fill="#f4f4f4" text-anchor="middle" textLength="66.4" lengthAdjust="spacingAndGlyphs" stroke="#f4f4f4" stroke-width="0.45">Orange</text>
<text x="1891.5" y="757.8" font-size="16.5" fill="#f4f4f4" text-anchor="middle" textLength="60.8" lengthAdjust="spacingAndGlyphs" stroke="#f4f4f4" stroke-width="0.45">Purple</text>
<text x="393.2" y="788.6" font-size="17.3" fill="#f2f2f2" font-weight="bold" textLength="80.7" lengthAdjust="spacingAndGlyphs">x: CIE31</text>
<text x="565.2" y="788.6" font-size="17.3" fill="#f2f2f2" textLength="65.1" lengthAdjust="spacingAndGlyphs">0,3249</text>
<text x="665.3" y="788.6" font-size="17.3" fill="#f2f2f2" textLength="65.1" lengthAdjust="spacingAndGlyphs">0,3229</text>
<text x="765.4" y="788.6" font-size="17.3" fill="#f2f2f2" textLength="65.1" lengthAdjust="spacingAndGlyphs">0,3221</text>
<text x="866.1" y="788.6" font-size="17.3" fill="#f2f2f2" textLength="65.1" lengthAdjust="spacingAndGlyphs">0,3215</text>
<text x="966.7" y="788.6" font-size="17.3" fill="#f2f2f2" textLength="65.1" lengthAdjust="spacingAndGlyphs">0,3211</text>
<text x="1067.0" y="788.6" font-size="17.3" fill="#f2f2f2" textLength="65.1" lengthAdjust="spacingAndGlyphs">0,2900</text>
<text x="1143.3" y="788.6" font-size="17.3" fill="#f2f2f2" textLength="65.1" lengthAdjust="spacingAndGlyphs">0,4234</text>
<text x="1239.2" y="788.6" font-size="17.3" fill="#f2f2f2" textLength="65.1" lengthAdjust="spacingAndGlyphs">0,4101</text>
<text x="1339.5" y="788.6" font-size="17.3" fill="#f2f2f2" textLength="65.1" lengthAdjust="spacingAndGlyphs">0,2446</text>
<text x="1427.5" y="788.6" font-size="17.3" fill="#f2f2f2" textLength="65.1" lengthAdjust="spacingAndGlyphs">0,3381</text>
<text x="1515.7" y="788.6" font-size="17.3" fill="#f2f2f2" textLength="65.1" lengthAdjust="spacingAndGlyphs">0,2725</text>
<text x="1634.2" y="788.6" font-size="17.3" fill="#f2f2f2" textLength="65.1" lengthAdjust="spacingAndGlyphs">0,2318</text>
<text x="1760.2" y="788.6" font-size="17.3" fill="#f2f2f2" textLength="65.1" lengthAdjust="spacingAndGlyphs">0,5624</text>
<text x="1860.9" y="788.6" font-size="17.3" fill="#f2f2f2" textLength="65.1" lengthAdjust="spacingAndGlyphs">0,2145</text>
<text x="393.2" y="818.0" font-size="17.3" fill="#f2f2f2" font-weight="bold" textLength="80.9" lengthAdjust="spacingAndGlyphs">y: CIE31</text>
<text x="565.2" y="818.0" font-size="17.3" fill="#f2f2f2" textLength="65.1" lengthAdjust="spacingAndGlyphs">0,3379</text>
<text x="665.3" y="818.0" font-size="17.3" fill="#f2f2f2" textLength="65.1" lengthAdjust="spacingAndGlyphs">0,3375</text>
<text x="765.4" y="818.0" font-size="17.3" fill="#f2f2f2" textLength="65.1" lengthAdjust="spacingAndGlyphs">0,3376</text>
<text x="866.1" y="818.0" font-size="17.3" fill="#f2f2f2" textLength="65.1" lengthAdjust="spacingAndGlyphs">0,3380</text>
<text x="966.7" y="818.0" font-size="17.3" fill="#f2f2f2" textLength="65.1" lengthAdjust="spacingAndGlyphs">0,3387</text>
<text x="1067.0" y="818.0" font-size="17.3" fill="#f2f2f2" textLength="65.1" lengthAdjust="spacingAndGlyphs">0,2880</text>
<text x="1143.3" y="818.0" font-size="17.3" fill="#f2f2f2" textLength="65.1" lengthAdjust="spacingAndGlyphs">0,3681</text>
<text x="1239.2" y="818.0" font-size="17.3" fill="#f2f2f2" textLength="65.1" lengthAdjust="spacingAndGlyphs">0,3607</text>
<text x="1339.5" y="818.0" font-size="17.3" fill="#f2f2f2" textLength="65.1" lengthAdjust="spacingAndGlyphs">0,2763</text>
<text x="1427.5" y="818.0" font-size="17.3" fill="#f2f2f2" textLength="65.1" lengthAdjust="spacingAndGlyphs">0,4412</text>
<text x="1515.7" y="818.0" font-size="17.3" fill="#f2f2f2" textLength="65.1" lengthAdjust="spacingAndGlyphs">0,2595</text>
<text x="1634.2" y="818.0" font-size="17.3" fill="#f2f2f2" textLength="65.1" lengthAdjust="spacingAndGlyphs">0,3819</text>
<text x="1760.2" y="818.0" font-size="17.3" fill="#f2f2f2" textLength="65.1" lengthAdjust="spacingAndGlyphs">0,3933</text>
<text x="1860.9" y="818.0" font-size="17.3" fill="#f2f2f2" textLength="65.1" lengthAdjust="spacingAndGlyphs">0,2071</text>
<text x="393.2" y="847.4" font-size="17.3" fill="#f2f2f2" font-weight="bold" textLength="12.4" lengthAdjust="spacingAndGlyphs">Y</text>
<text x="565.2" y="847.4" font-size="17.3" fill="#f2f2f2" textLength="88.1" lengthAdjust="spacingAndGlyphs">440,9888</text>
<text x="665.3" y="847.4" font-size="17.3" fill="#f2f2f2" textLength="88.1" lengthAdjust="spacingAndGlyphs">372,7597</text>
<text x="765.4" y="847.4" font-size="17.3" fill="#f2f2f2" textLength="88.1" lengthAdjust="spacingAndGlyphs">310,0555</text>
<text x="866.1" y="847.4" font-size="17.3" fill="#f2f2f2" textLength="88.1" lengthAdjust="spacingAndGlyphs">240,5130</text>
<text x="966.7" y="847.4" font-size="17.3" fill="#f2f2f2" textLength="88.1" lengthAdjust="spacingAndGlyphs">170,6064</text>
<text x="1067.0" y="847.4" font-size="17.3" fill="#f2f2f2" textLength="65.1" lengthAdjust="spacingAndGlyphs">0,2071</text>
<text x="1143.3" y="847.4" font-size="17.3" fill="#f2f2f2" textLength="76.6" lengthAdjust="spacingAndGlyphs">58,0319</text>
<text x="1239.2" y="847.4" font-size="17.3" fill="#f2f2f2" textLength="88.1" lengthAdjust="spacingAndGlyphs">179,4960</text>
<text x="1339.5" y="847.4" font-size="17.3" fill="#f2f2f2" textLength="76.6" lengthAdjust="spacingAndGlyphs">93,8128</text>
<text x="1427.5" y="847.4" font-size="17.3" fill="#f2f2f2" textLength="76.6" lengthAdjust="spacingAndGlyphs">68,9763</text>
<text x="1515.7" y="847.4" font-size="17.3" fill="#f2f2f2" textLength="88.1" lengthAdjust="spacingAndGlyphs">116,1542</text>
<text x="1634.2" y="847.4" font-size="17.3" fill="#f2f2f2" textLength="88.1" lengthAdjust="spacingAndGlyphs">196,0255</text>
<text x="1760.2" y="847.4" font-size="17.3" fill="#f2f2f2" textLength="88.1" lengthAdjust="spacingAndGlyphs">154,6770</text>
<text x="1860.9" y="847.4" font-size="17.3" fill="#f2f2f2" textLength="76.6" lengthAdjust="spacingAndGlyphs">63,3456</text>
<text x="393.2" y="876.8" font-size="17.3" fill="#f2f2f2" font-weight="bold" textLength="148.3" lengthAdjust="spacingAndGlyphs">Target x:CIE31</text>
<text x="565.2" y="876.8" font-size="17.3" fill="#f2f2f2" textLength="65.1" lengthAdjust="spacingAndGlyphs">0,3127</text>
<text x="665.3" y="876.8" font-size="17.3" fill="#f2f2f2" textLength="65.1" lengthAdjust="spacingAndGlyphs">0,3127</text>
<text x="765.4" y="876.8" font-size="17.3" fill="#f2f2f2" textLength="65.1" lengthAdjust="spacingAndGlyphs">0,3127</text>
<text x="866.1" y="876.8" font-size="17.3" fill="#f2f2f2" textLength="65.1" lengthAdjust="spacingAndGlyphs">0,3127</text>
<text x="966.7" y="876.8" font-size="17.3" fill="#f2f2f2" textLength="65.1" lengthAdjust="spacingAndGlyphs">0,3127</text>
<text x="1067.0" y="876.8" font-size="17.3" fill="#f2f2f2" textLength="65.1" lengthAdjust="spacingAndGlyphs">0,3127</text>
<text x="1143.3" y="876.8" font-size="17.3" fill="#f2f2f2" textLength="65.1" lengthAdjust="spacingAndGlyphs">0,4003</text>
<text x="1239.2" y="876.8" font-size="17.3" fill="#f2f2f2" textLength="65.1" lengthAdjust="spacingAndGlyphs">0,3795</text>
<text x="1339.5" y="876.8" font-size="17.3" fill="#f2f2f2" textLength="65.1" lengthAdjust="spacingAndGlyphs">0,2496</text>
<text x="1427.5" y="876.8" font-size="17.3" fill="#f2f2f2" textLength="65.1" lengthAdjust="spacingAndGlyphs">0,3395</text>
<text x="1515.7" y="876.8" font-size="17.3" fill="#f2f2f2" textLength="65.1" lengthAdjust="spacingAndGlyphs">0,2681</text>
<text x="1634.2" y="876.8" font-size="17.3" fill="#f2f2f2" textLength="65.1" lengthAdjust="spacingAndGlyphs">0,2626</text>
<text x="1760.2" y="876.8" font-size="17.3" fill="#f2f2f2" textLength="65.1" lengthAdjust="spacingAndGlyphs">0,5122</text>
<text x="1860.9" y="876.8" font-size="17.3" fill="#f2f2f2" textLength="65.1" lengthAdjust="spacingAndGlyphs">0,2164</text>
<text x="393.2" y="906.2" font-size="17.3" fill="#f2f2f2" font-weight="bold" textLength="148.3" lengthAdjust="spacingAndGlyphs">Target y:CIE31</text>
<text x="565.2" y="906.2" font-size="17.3" fill="#f2f2f2" textLength="65.1" lengthAdjust="spacingAndGlyphs">0,3290</text>
<text x="665.3" y="906.2" font-size="17.3" fill="#f2f2f2" textLength="65.1" lengthAdjust="spacingAndGlyphs">0,3290</text>
<text x="765.4" y="906.2" font-size="17.3" fill="#f2f2f2" textLength="65.1" lengthAdjust="spacingAndGlyphs">0,3290</text>
<text x="866.1" y="906.2" font-size="17.3" fill="#f2f2f2" textLength="65.1" lengthAdjust="spacingAndGlyphs">0,3290</text>
<text x="966.7" y="906.2" font-size="17.3" fill="#f2f2f2" textLength="65.1" lengthAdjust="spacingAndGlyphs">0,3290</text>
<text x="1067.0" y="906.2" font-size="17.3" fill="#f2f2f2" textLength="65.1" lengthAdjust="spacingAndGlyphs">0,3290</text>
<text x="1143.3" y="906.2" font-size="17.3" fill="#f2f2f2" textLength="65.1" lengthAdjust="spacingAndGlyphs">0,3642</text>
<text x="1239.2" y="906.2" font-size="17.3" fill="#f2f2f2" textLength="65.1" lengthAdjust="spacingAndGlyphs">0,3562</text>
<text x="1339.5" y="906.2" font-size="17.3" fill="#f2f2f2" textLength="65.1" lengthAdjust="spacingAndGlyphs">0,2656</text>
<text x="1427.5" y="906.2" font-size="17.3" fill="#f2f2f2" textLength="65.1" lengthAdjust="spacingAndGlyphs">0,4271</text>
<text x="1515.7" y="906.2" font-size="17.3" fill="#f2f2f2" textLength="65.1" lengthAdjust="spacingAndGlyphs">0,2525</text>
<text x="1634.2" y="906.2" font-size="17.3" fill="#f2f2f2" textLength="65.1" lengthAdjust="spacingAndGlyphs">0,3616</text>
<text x="1760.2" y="906.2" font-size="17.3" fill="#f2f2f2" textLength="65.1" lengthAdjust="spacingAndGlyphs">0,4063</text>
<text x="1860.9" y="906.2" font-size="17.3" fill="#f2f2f2" textLength="65.1" lengthAdjust="spacingAndGlyphs">0,1920</text>
<text x="393.2" y="935.6" font-size="17.3" fill="#f2f2f2" font-weight="bold" textLength="86.3" lengthAdjust="spacingAndGlyphs">Target Y</text>
<text x="565.2" y="935.6" font-size="17.3" fill="#f2f2f2" textLength="88.1" lengthAdjust="spacingAndGlyphs">440,9888</text>
<text x="665.3" y="935.6" font-size="17.3" fill="#f2f2f2" textLength="88.1" lengthAdjust="spacingAndGlyphs">348,9535</text>
<text x="765.4" y="935.6" font-size="17.3" fill="#f2f2f2" textLength="88.1" lengthAdjust="spacingAndGlyphs">281,1731</text>
<text x="866.1" y="935.6" font-size="17.3" fill="#f2f2f2" textLength="88.1" lengthAdjust="spacingAndGlyphs">216,5347</text>
<text x="966.7" y="935.6" font-size="17.3" fill="#f2f2f2" textLength="88.1" lengthAdjust="spacingAndGlyphs">150,7804</text>
<text x="1067.0" y="935.6" font-size="17.3" fill="#f2f2f2" textLength="65.1" lengthAdjust="spacingAndGlyphs">0,0000</text>
<text x="1143.3" y="935.6" font-size="17.3" fill="#f2f2f2" textLength="76.6" lengthAdjust="spacingAndGlyphs">44,4221</text>
<text x="1239.2" y="935.6" font-size="17.3" fill="#f2f2f2" textLength="88.1" lengthAdjust="spacingAndGlyphs">153,8838</text>
<text x="1339.5" y="935.6" font-size="17.3" fill="#f2f2f2" textLength="76.6" lengthAdjust="spacingAndGlyphs">82,4578</text>
<text x="1427.5" y="935.6" font-size="17.3" fill="#f2f2f2" textLength="76.6" lengthAdjust="spacingAndGlyphs">57,4717</text>
<text x="1515.7" y="935.6" font-size="17.3" fill="#f2f2f2" textLength="88.1" lengthAdjust="spacingAndGlyphs">102,8319</text>
<text x="1634.2" y="935.6" font-size="17.3" fill="#f2f2f2" textLength="88.1" lengthAdjust="spacingAndGlyphs">184,6553</text>
<text x="1760.2" y="935.6" font-size="17.3" fill="#f2f2f2" textLength="88.1" lengthAdjust="spacingAndGlyphs">125,0107</text>
<text x="1860.9" y="935.6" font-size="17.3" fill="#f2f2f2" textLength="76.6" lengthAdjust="spacingAndGlyphs">51,8345</text>
<text x="393.2" y="965.0" font-size="17.3" fill="#f2f2f2" font-weight="bold" textLength="84.6" lengthAdjust="spacingAndGlyphs">ΔE 2000</text>
<text x="565.2" y="965.0" font-size="17.3" fill="#f2f2f2" textLength="65.1" lengthAdjust="spacingAndGlyphs">5,6271</text>
<text x="665.3" y="965.0" font-size="17.3" fill="#f2f2f2" textLength="65.1" lengthAdjust="spacingAndGlyphs">4,8329</text>
<text x="765.4" y="965.0" font-size="17.3" fill="#f2f2f2" textLength="65.1" lengthAdjust="spacingAndGlyphs">4,7020</text>
<text x="866.1" y="965.0" font-size="17.3" fill="#f2f2f2" textLength="65.1" lengthAdjust="spacingAndGlyphs">4,4888</text>
<text x="966.7" y="965.0" font-size="17.3" fill="#f2f2f2" textLength="65.1" lengthAdjust="spacingAndGlyphs">4,5024</text>
<text x="1067.0" y="965.0" font-size="17.3" fill="#f2f2f2" textLength="65.1" lengthAdjust="spacingAndGlyphs">0,3850</text>
<text x="1143.3" y="965.0" font-size="17.3" fill="#f2f2f2" textLength="65.1" lengthAdjust="spacingAndGlyphs">5,9170</text>
<text x="1239.2" y="965.0" font-size="17.3" fill="#f2f2f2" textLength="65.1" lengthAdjust="spacingAndGlyphs">6,5582</text>
<text x="1339.5" y="965.0" font-size="17.3" fill="#f2f2f2" textLength="65.1" lengthAdjust="spacingAndGlyphs">6,2050</text>
<text x="1427.5" y="965.0" font-size="17.3" fill="#f2f2f2" textLength="65.1" lengthAdjust="spacingAndGlyphs">4,3097</text>
<text x="1515.7" y="965.0" font-size="17.3" fill="#f2f2f2" textLength="65.1" lengthAdjust="spacingAndGlyphs">2,8359</text>
<text x="1634.2" y="965.0" font-size="17.3" fill="#f2f2f2" textLength="65.1" lengthAdjust="spacingAndGlyphs">7,3108</text>
<text x="1760.2" y="965.0" font-size="17.3" fill="#f2f2f2" textLength="65.1" lengthAdjust="spacingAndGlyphs">8,2409</text>
<text x="1860.9" y="965.0" font-size="17.3" fill="#f2f2f2" textLength="65.1" lengthAdjust="spacingAndGlyphs">5,4096</text>
<rect x="376.0" y="972.6" width="1532.5" height="19.0" fill="#5c5c5c" />
<rect x="376.0" y="972.6" width="1532.5" height="1.5" fill="#6a6a6a" />
<rect x="400.5" y="974.5" width="1486.0" height="15.5" fill="#464646" rx="7.5"/>
<rect x="378.0" y="975.0" width="17.5" height="15.5" fill="#7a7a7a" rx="3"/>
<polygon points="390.5,977.5 383.5,982.7 390.5,988" fill="#333"/>
<rect x="1888.5" y="975.0" width="17.5" height="15.5" fill="#7a7a7a" rx="3"/>
<polygon points="1894,977.5 1901,982.7 1894,988" fill="#333"/>
</g>
<rect x="0.0" y="996.5" width="1920.0" height="47.5" fill="#2a2a2a" />
<defs><linearGradient id="sbtn" x1="0" y1="0" x2="0" y2="1"><stop offset="0" stop-color="#a4a4a4"/><stop offset="0.5" stop-color="#8a8a8a"/><stop offset="1" stop-color="#6a6a6a"/></linearGradient><linearGradient id="cbtn" x1="0" y1="0" x2="0" y2="1"><stop offset="0" stop-color="#a8a8a8"/><stop offset="1" stop-color="#787878"/></linearGradient><linearGradient id="ccirc" x1="0" y1="0" x2="0" y2="1"><stop offset="0" stop-color="#7e7e7e"/><stop offset="0.6" stop-color="#959595"/><stop offset="1" stop-color="#b4b4b4"/></linearGradient><linearGradient id="dcirc" x1="0" y1="0" x2="0" y2="1"><stop offset="0" stop-color="#262626"/><stop offset="1" stop-color="#3c3c3c"/></linearGradient></defs>
<rect x="0.8" y="997.4" width="53.8" height="46.0" fill="url(#sbtn)" rx="3" stroke="#b4b4b4" stroke-opacity="0.6" stroke-width="0.8"/>
<rect x="4.5" y="1001.2" width="46.6" height="26.8" fill="#ffffff" rx="2.5" stroke="#d8d8d8" stroke-opacity="0.55" stroke-width="0.8"/>
<text x="27.8" y="1039.6" font-size="8.6" fill="#2a2a2a" text-anchor="middle" font-weight="bold" textLength="23.5" lengthAdjust="spacingAndGlyphs">White</text>
<rect x="56.7" y="997.4" width="53.8" height="46.0" fill="url(#sbtn)" rx="3" stroke="#b4b4b4" stroke-opacity="0.6" stroke-width="0.8"/>
<rect x="60.5" y="1001.2" width="46.6" height="26.8" fill="#e6e6e6" rx="2.5" stroke="#d8d8d8" stroke-opacity="0.55" stroke-width="0.8"/>
<text x="83.7" y="1039.6" font-size="8.6" fill="#2a2a2a" text-anchor="middle" font-weight="bold" textLength="29.1" lengthAdjust="spacingAndGlyphs">Gray 80</text>
<rect x="112.7" y="997.4" width="53.8" height="46.0" fill="url(#sbtn)" rx="3" stroke="#b4b4b4" stroke-opacity="0.6" stroke-width="0.8"/>
<rect x="116.4" y="1001.2" width="46.6" height="26.8" fill="#d0d0d0" rx="2.5" stroke="#d8d8d8" stroke-opacity="0.55" stroke-width="0.8"/>
<text x="139.7" y="1039.6" font-size="8.6" fill="#2a2a2a" text-anchor="middle" font-weight="bold" textLength="29.1" lengthAdjust="spacingAndGlyphs">Gray 65</text>
<rect x="168.6" y="997.4" width="53.8" height="46.0" fill="url(#sbtn)" rx="3" stroke="#b4b4b4" stroke-opacity="0.6" stroke-width="0.8"/>
<rect x="172.3" y="1001.2" width="46.6" height="26.8" fill="#b8b8b8" rx="2.5" stroke="#d8d8d8" stroke-opacity="0.55" stroke-width="0.8"/>
<text x="195.6" y="1039.6" font-size="8.6" fill="#2a2a2a" text-anchor="middle" font-weight="bold" textLength="29.1" lengthAdjust="spacingAndGlyphs">Gray 50</text>
<rect x="224.5" y="997.4" width="53.8" height="46.0" fill="url(#sbtn)" rx="3" stroke="#b4b4b4" stroke-opacity="0.6" stroke-width="0.8"/>
<rect x="228.3" y="1001.2" width="46.6" height="26.8" fill="#9e9e9e" rx="2.5" stroke="#d8d8d8" stroke-opacity="0.55" stroke-width="0.8"/>
<text x="251.5" y="1039.6" font-size="8.6" fill="#2a2a2a" text-anchor="middle" font-weight="bold" textLength="29.1" lengthAdjust="spacingAndGlyphs">Gray 35</text>
<rect x="280.4" y="997.4" width="53.8" height="46.0" fill="url(#sbtn)" rx="3" stroke="#b4b4b4" stroke-opacity="0.6" stroke-width="0.8"/>
<rect x="284.2" y="1001.2" width="46.6" height="26.8" fill="#000000" rx="2.5" stroke="#d8d8d8" stroke-opacity="0.55" stroke-width="0.8"/>
<text x="307.4" y="1039.6" font-size="8.6" fill="#2a2a2a" text-anchor="middle" font-weight="bold" textLength="20.5" lengthAdjust="spacingAndGlyphs">Black</text>
<rect x="336.4" y="997.4" width="53.8" height="46.0" fill="url(#sbtn)" rx="3" stroke="#b4b4b4" stroke-opacity="0.6" stroke-width="0.8"/>
<rect x="340.1" y="1001.2" width="46.6" height="26.8" fill="#745244" rx="2.5" stroke="#d8d8d8" stroke-opacity="0.55" stroke-width="0.8"/>
<text x="363.4" y="1039.6" font-size="8.6" fill="#2a2a2a" text-anchor="middle" font-weight="bold" textLength="35.5" lengthAdjust="spacingAndGlyphs">Dark Skin</text>
<rect x="392.3" y="997.4" width="53.8" height="46.0" fill="url(#sbtn)" rx="3" stroke="#b4b4b4" stroke-opacity="0.6" stroke-width="0.8"/>
<rect x="396.1" y="1001.2" width="46.6" height="26.8" fill="#c59684" rx="2.5" stroke="#d8d8d8" stroke-opacity="0.55" stroke-width="0.8"/>
<text x="419.3" y="1039.6" font-size="8.6" fill="#2a2a2a" text-anchor="middle" font-weight="bold" textLength="40.8" lengthAdjust="spacingAndGlyphs">Light Skin</text>
<rect x="448.2" y="997.4" width="53.8" height="46.0" fill="url(#sbtn)" rx="3" stroke="#b4b4b4" stroke-opacity="0.6" stroke-width="0.8"/>
<rect x="452.0" y="1001.2" width="46.6" height="26.8" fill="#5f7ba1" rx="2.5" stroke="#d8d8d8" stroke-opacity="0.55" stroke-width="0.8"/>
<text x="475.2" y="1039.6" font-size="8.6" fill="#2a2a2a" text-anchor="middle" font-weight="bold" textLength="32.1" lengthAdjust="spacingAndGlyphs">Blue Sky</text>
<rect x="504.2" y="997.4" width="53.8" height="46.0" fill="url(#sbtn)" rx="3" stroke="#b4b4b4" stroke-opacity="0.6" stroke-width="0.8"/>
<rect x="507.9" y="1001.2" width="46.6" height="26.8" fill="#596c40" rx="2.5" stroke="#d8d8d8" stroke-opacity="0.55" stroke-width="0.8"/>
<text x="531.2" y="1039.6" font-size="8.6" fill="#2a2a2a" text-anchor="middle" font-weight="bold" textLength="27.1" lengthAdjust="spacingAndGlyphs">Foliage</text>
<rect x="560.1" y="997.4" width="53.8" height="46.0" fill="url(#sbtn)" rx="3" stroke="#b4b4b4" stroke-opacity="0.6" stroke-width="0.8"/>
<rect x="563.8" y="1001.2" width="46.6" height="26.8" fill="#8480b0" rx="2.5" stroke="#d8d8d8" stroke-opacity="0.55" stroke-width="0.8"/>
<text x="587.1" y="1039.6" font-size="8.6" fill="#2a2a2a" text-anchor="middle" font-weight="bold" textLength="44.1" lengthAdjust="spacingAndGlyphs">Blue Flower</text>
<rect x="616.0" y="997.4" width="53.8" height="46.0" fill="url(#sbtn)" rx="3" stroke="#b4b4b4" stroke-opacity="0.6" stroke-width="0.8"/>
<rect x="619.8" y="1001.2" width="46.6" height="26.8" fill="#62c1aa" rx="2.5" stroke="#d8d8d8" stroke-opacity="0.55" stroke-width="0.8"/>
<text x="643.0" y="1039.6" font-size="8.6" fill="#2a2a2a" text-anchor="middle" font-weight="bold" textLength="46.8" lengthAdjust="spacingAndGlyphs">Bluish Green</text>
<rect x="672.0" y="997.4" width="53.8" height="46.0" fill="url(#sbtn)" rx="3" stroke="#b4b4b4" stroke-opacity="0.6" stroke-width="0.8"/>
<rect x="675.7" y="1001.2" width="46.6" height="26.8" fill="#e07a2a" rx="2.5" stroke="#d8d8d8" stroke-opacity="0.55" stroke-width="0.8"/>
<text x="699.0" y="1039.6" font-size="8.6" fill="#2a2a2a" text-anchor="middle" font-weight="bold" textLength="27.5" lengthAdjust="spacingAndGlyphs">Orange</text>
<rect x="727.9" y="997.4" width="53.8" height="46.0" fill="url(#sbtn)" rx="3" stroke="#b4b4b4" stroke-opacity="0.6" stroke-width="0.8"/>
<rect x="731.6" y="1001.2" width="46.6" height="26.8" fill="#4a5aa8" rx="2.5" stroke="#d8d8d8" stroke-opacity="0.55" stroke-width="0.8"/>
<text x="754.9" y="1039.6" font-size="8.6" fill="#2a2a2a" text-anchor="middle" font-weight="bold" textLength="49.1" lengthAdjust="spacingAndGlyphs">Purplish Blue</text>
<rect x="783.8" y="997.4" width="53.8" height="46.0" fill="url(#sbtn)" rx="3" stroke="#b4b4b4" stroke-opacity="0.6" stroke-width="0.8"/>
<rect x="787.6" y="1001.2" width="46.6" height="26.8" fill="#c75260" rx="2.5" stroke="#d8d8d8" stroke-opacity="0.55" stroke-width="0.8"/>
<text x="810.8" y="1039.6" font-size="8.6" fill="#2a2a2a" text-anchor="middle" font-weight="bold" textLength="53.5" lengthAdjust="spacingAndGlyphs">Moderate Red</text>
<rect x="839.8" y="997.4" width="53.8" height="46.0" fill="url(#sbtn)" rx="3" stroke="#b4b4b4" stroke-opacity="0.6" stroke-width="0.8"/>
<rect x="843.5" y="1001.2" width="46.6" height="26.8" fill="#5e3a6c" rx="2.5" stroke="#d8d8d8" stroke-opacity="0.55" stroke-width="0.8"/>
<text x="866.8" y="1039.6" font-size="8.6" fill="#2a2a2a" text-anchor="middle" font-weight="bold" textLength="25.1" lengthAdjust="spacingAndGlyphs">Purple</text>
<rect x="895.7" y="997.4" width="53.8" height="46.0" fill="url(#sbtn)" rx="3" stroke="#b4b4b4" stroke-opacity="0.6" stroke-width="0.8"/>
<rect x="899.4" y="1001.2" width="46.6" height="26.8" fill="#9fbc3e" rx="2.5" stroke="#d8d8d8" stroke-opacity="0.55" stroke-width="0.8"/>
<text x="922.7" y="1039.6" font-size="8.6" fill="#2a2a2a" text-anchor="middle" font-weight="bold" textLength="49.1" lengthAdjust="spacingAndGlyphs">Yellow Green</text>
<rect x="951.6" y="997.4" width="53.8" height="46.0" fill="url(#sbtn)" rx="3" stroke="#b4b4b4" stroke-opacity="0.6" stroke-width="0.8"/>
<rect x="955.4" y="1001.2" width="46.6" height="26.8" fill="#e8a02c" rx="2.5" stroke="#d8d8d8" stroke-opacity="0.55" stroke-width="0.8"/>
<text x="978.6" y="1039.6" font-size="8.6" fill="#2a2a2a" text-anchor="middle" font-weight="bold" textLength="53.5" lengthAdjust="spacingAndGlyphs">Orange Yellow</text>
<rect x="1007.5" y="997.4" width="53.8" height="46.0" fill="url(#sbtn)" rx="3" stroke="#b4b4b4" stroke-opacity="0.6" stroke-width="0.8"/>
<rect x="1011.3" y="1001.2" width="46.6" height="26.8" fill="#2e3b94" rx="2.5" stroke="#d8d8d8" stroke-opacity="0.55" stroke-width="0.8"/>
<text x="1034.5" y="1039.6" font-size="8.6" fill="#2a2a2a" text-anchor="middle" font-weight="bold" textLength="16.8" lengthAdjust="spacingAndGlyphs">Blue</text>
<rect x="1063.5" y="997.4" width="53.8" height="46.0" fill="url(#sbtn)" rx="3" stroke="#b4b4b4" stroke-opacity="0.6" stroke-width="0.8"/>
<rect x="1067.2" y="1001.2" width="46.6" height="26.8" fill="#459447" rx="2.5" stroke="#d8d8d8" stroke-opacity="0.55" stroke-width="0.8"/>
<text x="1090.5" y="1039.6" font-size="8.6" fill="#2a2a2a" text-anchor="middle" font-weight="bold" textLength="23.5" lengthAdjust="spacingAndGlyphs">Green</text>
<rect x="1119.4" y="997.4" width="53.8" height="46.0" fill="url(#sbtn)" rx="3" stroke="#b4b4b4" stroke-opacity="0.6" stroke-width="0.8"/>
<rect x="1123.1" y="1001.2" width="46.6" height="26.8" fill="#b22d34" rx="2.5" stroke="#d8d8d8" stroke-opacity="0.55" stroke-width="0.8"/>
<text x="1146.4" y="1039.6" font-size="8.6" fill="#2a2a2a" text-anchor="middle" font-weight="bold" textLength="14.8" lengthAdjust="spacingAndGlyphs">Red</text>
<rect x="1175.3" y="997.4" width="53.8" height="46.0" fill="url(#sbtn)" rx="3" stroke="#b4b4b4" stroke-opacity="0.6" stroke-width="0.8"/>
<rect x="1179.1" y="1001.2" width="46.6" height="26.8" fill="#f0cc1c" rx="2.5" stroke="#d8d8d8" stroke-opacity="0.55" stroke-width="0.8"/>
<text x="1202.3" y="1039.6" font-size="8.6" fill="#2a2a2a" text-anchor="middle" font-weight="bold" textLength="24.1" lengthAdjust="spacingAndGlyphs">Yellow</text>
<rect x="1231.3" y="997.4" width="53.8" height="46.0" fill="url(#sbtn)" rx="3" stroke="#b4b4b4" stroke-opacity="0.6" stroke-width="0.8"/>
<rect x="1235.0" y="1001.2" width="46.6" height="26.8" fill="#bb5297" rx="2.5" stroke="#d8d8d8" stroke-opacity="0.55" stroke-width="0.8"/>
<text x="1258.3" y="1039.6" font-size="8.6" fill="#2a2a2a" text-anchor="middle" font-weight="bold" textLength="33.1" lengthAdjust="spacingAndGlyphs">Magenta</text>
<rect x="1287.2" y="997.4" width="53.8" height="46.0" fill="url(#sbtn)" rx="3" stroke="#b4b4b4" stroke-opacity="0.6" stroke-width="0.8"/>
<rect x="1290.9" y="1001.2" width="46.6" height="26.8" fill="#0a86a8" rx="2.5" stroke="#d8d8d8" stroke-opacity="0.55" stroke-width="0.8"/>
<text x="1314.2" y="1039.6" font-size="8.6" fill="#2a2a2a" text-anchor="middle" font-weight="bold" textLength="19.1" lengthAdjust="spacingAndGlyphs">Cyan</text>
<rect x="1343.1" y="997.4" width="53.8" height="46.0" fill="url(#sbtn)" rx="3" stroke="#b4b4b4" stroke-opacity="0.6" stroke-width="0.8"/>
<rect x="1346.9" y="1001.2" width="46.6" height="26.8" fill="#ff0000" rx="2.5" stroke="#d8d8d8" stroke-opacity="0.55" stroke-width="0.8"/>
<text x="1370.1" y="1039.6" font-size="8.6" fill="#2a2a2a" text-anchor="middle" font-weight="bold" textLength="37.1" lengthAdjust="spacingAndGlyphs">100% Red</text>
<rect x="1399.0" y="997.4" width="53.8" height="46.0" fill="url(#sbtn)" rx="3" stroke="#b4b4b4" stroke-opacity="0.6" stroke-width="0.8"/>
<rect x="1402.8" y="1001.2" width="46.6" height="26.8" fill="#00ff00" rx="2.5" stroke="#d8d8d8" stroke-opacity="0.55" stroke-width="0.8"/>
<text x="1426.0" y="1039.6" font-size="8.6" fill="#2a2a2a" text-anchor="middle" font-weight="bold" textLength="45.5" lengthAdjust="spacingAndGlyphs">100% Green</text>
<rect x="1455.0" y="997.4" width="53.8" height="46.0" fill="url(#sbtn)" rx="3" stroke="#b4b4b4" stroke-opacity="0.6" stroke-width="0.8"/>
<rect x="1458.7" y="1001.2" width="46.6" height="26.8" fill="#0000ff" rx="2.5" stroke="#d8d8d8" stroke-opacity="0.55" stroke-width="0.8"/>
<text x="1482.0" y="1039.6" font-size="8.6" fill="#2a2a2a" text-anchor="middle" font-weight="bold" textLength="39.1" lengthAdjust="spacingAndGlyphs">100% Blue</text>
<rect x="1510.9" y="997.4" width="53.8" height="46.0" fill="url(#sbtn)" rx="3" stroke="#b4b4b4" stroke-opacity="0.6" stroke-width="0.8"/>
<rect x="1514.7" y="1001.2" width="46.6" height="26.8" fill="#00ffff" rx="2.5" stroke="#d8d8d8" stroke-opacity="0.55" stroke-width="0.8"/>
<text x="1537.9" y="1039.6" font-size="8.6" fill="#2a2a2a" text-anchor="middle" font-weight="bold" textLength="40.8" lengthAdjust="spacingAndGlyphs">100% Cyan</text>
<rect x="1566.8" y="997.4" width="53.8" height="46.0" fill="url(#sbtn)" rx="3" stroke="#b4b4b4" stroke-opacity="0.6" stroke-width="0.8"/>
<rect x="1571.1" y="1001.0" width="46.5" height="18.0" fill="#ff00ff" rx="2.5" stroke="#cfcfcf" stroke-opacity="0.5" stroke-width="0.8"/>
<text x="1593.8" y="1031.0" font-size="8.6" fill="#2a2a2a" text-anchor="middle" font-weight="bold" textLength="20.8" lengthAdjust="spacingAndGlyphs">100%</text>
<text x="1593.8" y="1040.6" font-size="8.6" fill="#2a2a2a" text-anchor="middle" font-weight="bold" textLength="33.8" lengthAdjust="spacingAndGlyphs">Magenta</text>
<rect x="1622.8" y="997.5" width="54.0" height="46.5" fill="#2a2a2a" rx="3"/>
<rect x="1625.3" y="1000.8" width="47.0" height="27.5" fill="#ffff00" rx="2.5"/>
<text x="1649.8" y="1039.6" font-size="9" fill="#ffffff" text-anchor="middle" font-weight="bold" textLength="47.5" lengthAdjust="spacingAndGlyphs">100% Yellow</text>
<rect x="1678.3" y="997.5" width="35.4" height="13.8" fill="url(#cbtn)" rx="2"/>
<circle cx="1695.8" cy="1004" r="5.5" fill="url(#ccirc)"/><polygon points="1692.5,1005.5 1699,1005.5 1695.8,1002" fill="#222"/>
<rect x="1678.3" y="1011.5" width="35.4" height="31.0" fill="url(#cbtn)" rx="2"/>
<rect x="1684.5" y="1017.0" width="21.0" height="21.0" fill="#8a8a8a" rx="3" stroke="#202020" stroke-width="1.6"/>
<rect x="1690.0" y="1022.5" width="10.0" height="10.0" fill="#000" />
<rect x="1715.0" y="997.5" width="33.2" height="22.0" fill="url(#cbtn)" />
<circle cx="1731.6" cy="1008.5" r="7.5" fill="url(#ccirc)"/>
<rect x="1748.8" y="997.5" width="33.2" height="22.0" fill="url(#cbtn)" />
<circle cx="1765.3" cy="1008.5" r="7.5" fill="url(#ccirc)"/>
<rect x="1782.5" y="997.5" width="33.2" height="22.0" fill="url(#cbtn)" />
<circle cx="1799.1" cy="1008.5" r="7.5" fill="url(#ccirc)"/>
<rect x="1816.2" y="997.5" width="33.2" height="22.0" fill="url(#cbtn)" />
<circle cx="1832.8" cy="1008.5" r="7.5" fill="url(#ccirc)"/>
<rect x="1728.6" y="1005.5" width="6.0" height="6.0" fill="#333" />
<polygon points="1763,1005 1769.5,1008.7 1763,1012.4" fill="#333"/>
<text x="1799.2" y="1011.5" font-size="9" fill="#333" text-anchor="middle" font-weight="bold">[↔]</text>
<text x="1832.9" y="1012.5" font-size="14" fill="#333" text-anchor="middle" font-weight="bold">∞</text>
<rect x="1850.0" y="997.5" width="70.0" height="22.0" fill="#383838" />
<rect x="1884.0" y="997.5" width="36.0" height="22.0" fill="#2e2e2e" />
<circle cx="1867" cy="1008.5" r="7.5" fill="url(#dcirc)"/><circle cx="1901.6" cy="1008.5" r="7.5" fill="#262626"/>
<path d="M1863.2,1007.2 A4,4 0 0 1 1870.6,1006.5 M1870.8,1009.8 A4,4 0 0 1 1863.4,1010.5" fill="none" stroke="#1c1c1c" stroke-width="1.8"/><polygon points="1869,1004 1872.5,1007.5 1868.5,1008" fill="#1c1c1c"/><polygon points="1865,1013 1861.5,1009.5 1865.5,1009" fill="#1c1c1c"/>
<rect x="1715.0" y="1020.0" width="101.7" height="23.0" fill="url(#cbtn)" rx="2"/>
<rect x="1816.7" y="1020.0" width="103.3" height="23.0" fill="url(#cbtn)" rx="2"/>
<circle cx="1737.5" cy="1032" r="7.5" fill="url(#ccirc)"/><circle cx="1897.5" cy="1032" r="7.5" fill="url(#ccirc)"/>
<text x="1737.5" y="1036.0" font-size="12" fill="#333" text-anchor="middle" font-weight="bold">«</text>
<text x="1897.5" y="1036.0" font-size="12" fill="#333" text-anchor="middle" font-weight="bold">»</text>
<text x="1776.5" y="1039.0" font-size="18" fill="#333333" text-anchor="middle" font-weight="bold" textLength="38.0" lengthAdjust="spacingAndGlyphs">Back</text>
<text x="1857.0" y="1039.0" font-size="18" fill="#333333" text-anchor="middle" font-weight="bold" textLength="40.0" lengthAdjust="spacingAndGlyphs">Next</text>
</svg></body></html>
